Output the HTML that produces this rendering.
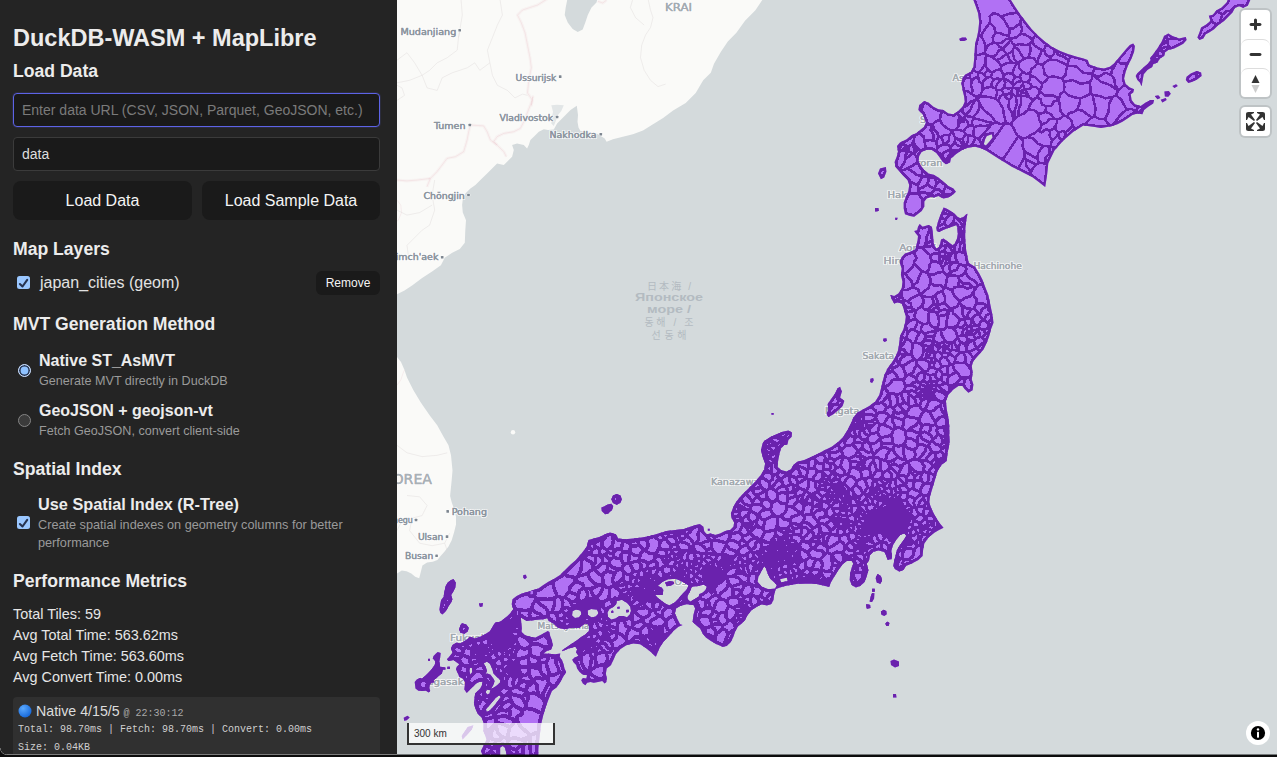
<!DOCTYPE html>
<html lang="en">
<head>
<meta charset="utf-8">
<title>DuckDB-WASM + MapLibre</title>
<style>
html,body{margin:0;padding:0;}
body{width:1277px;height:757px;overflow:hidden;background:#242424;position:relative;font-family:"Liberation Sans",sans-serif;color:rgba(255,255,255,.87);}
#side{position:absolute;left:0;top:0;width:397px;height:757px;background:#242424;overflow:hidden;}
#side .t{position:absolute;left:13px;white-space:nowrap;margin:0;}
h1.t{font-size:23.5px;font-weight:700;line-height:28px;color:#ececec;}
h2.t{font-size:17.6px;font-weight:700;line-height:22px;color:#ececec;}
.inp{position:absolute;left:13px;width:365px;height:32px;border:1px solid #3b3b3b;border-radius:4px;background:#1a1a1a;font-size:14px;line-height:32px;color:#dedede;}
.inp span{position:absolute;left:8px;top:0;white-space:nowrap;}
.inp.f{border-color:#5d63e6;box-shadow:0 0 0 1px rgba(100,108,255,.12);}
.inp.f span{color:#7a7a7a;}
.btn{position:absolute;height:39px;border-radius:8px;background:#1a1a1a;color:#f4f4f4;font-size:16px;line-height:39px;text-align:center;white-space:nowrap;}
.lbl{font-size:16px;line-height:20px;color:#e2e2e2;}
.lblb{font-size:16px;line-height:20px;font-weight:700;color:#ececec;}
.sub{font-size:12.6px;line-height:18px;color:#9a9a9a;}
.met{font-size:14.4px;line-height:21px;color:#e6e6e6;}
.cb{position:absolute;width:13px;height:13px;border-radius:2.5px;background:#9ac7ff;}
.rd{position:absolute;width:13px;height:13px;border-radius:50%;box-sizing:border-box;}
#log{position:absolute;left:13px;top:697px;width:367px;height:60px;background:#303030;border-radius:4px 4px 0 0;}
#log .m{position:absolute;left:5px;white-space:nowrap;font-family:"Liberation Mono",monospace;font-size:10px;line-height:14px;color:#cfcfcf;}
#map{position:absolute;left:397px;top:0;width:880px;height:757px;background:#d4dadc;overflow:hidden;}
#map svg{position:absolute;left:0;top:0;}
.ctrl{position:absolute;background:#fff;border-radius:4px;box-shadow:0 0 0 2px rgba(0,0,0,.1);}
.ctrl .b{width:29px;height:29px;position:relative;box-sizing:border-box;}
.ctrl .b+.b{border-top:1px solid #ddd;border-radius:7px 7px 0 0;}
#scale{position:absolute;left:10px;top:723px;width:148px;height:22px;box-sizing:border-box;background:rgba(255,255,255,.75);border:2px solid #333;border-top:none;font-size:10px;line-height:22.5px;color:#333;padding:0 0 0 5px;}
#edge{position:absolute;left:0;top:755px;width:1277px;height:2px;background:#0c0c0c;}
#corner{position:absolute;left:0;top:748px;width:7px;height:7px;background:radial-gradient(circle at 7px 0,rgba(12,12,12,0) 6.2px,#7c7c7c 6.6px,#0c0c0c 7.4px);}
#edge1{position:absolute;left:7px;top:754px;width:390px;height:1px;background:#7c7c7c;}
#edge2{position:absolute;left:397px;top:754px;width:880px;height:1px;background:rgba(0,0,0,.45);}
</style>
</head>
<body>

<div id="side">
<h1 class="t" style="top:24px">DuckDB-WASM + MapLibre</h1>
<h2 class="t" style="top:60px">Load Data</h2>
<div class="inp f" style="top:93px"><span>Enter data URL (CSV, JSON, Parquet, GeoJSON, etc.)</span></div>
<div class="inp" style="top:137px"><span>data</span></div>
<div class="btn" style="left:13px;top:181px;width:179px">Load Data</div>
<div class="btn" style="left:202px;top:181px;width:178px">Load Sample Data</div>
<h2 class="t" style="top:238px">Map Layers</h2>
<div class="cb" style="left:17px;top:276px"><svg width="13" height="13" viewBox="0 0 13 13"><path d="M2.9 7 L5.5 9.5 L10.2 2.9" fill="none" stroke="#263350" stroke-width="2.1" stroke-linecap="round" stroke-linejoin="round"/></svg></div>
<div class="t lbl" style="left:40px;top:273px">japan_cities (geom)</div>
<div class="btn" style="left:316px;top:271px;width:64px;height:24px;line-height:24px;font-size:12px;border-radius:6px">Remove</div>
<h2 class="t" style="top:313px">MVT Generation Method</h2>
<div class="rd" style="left:18px;top:364px;background:#8fc2ff;border:1px solid #cfe1ff;box-shadow:inset 0 0 0 1.6px #27344f"></div>
<div class="t lblb" style="left:39px;top:351px">Native ST_AsMVT</div>
<div class="t sub" style="left:39px;top:372px">Generate MVT directly in DuckDB</div>
<div class="rd" style="left:18px;top:414px;background:#3b3b3b;border:1px solid #858585"></div>
<div class="t lblb" style="left:39px;top:401px">GeoJSON + geojson-vt</div>
<div class="t sub" style="left:39px;top:422px">Fetch GeoJSON, convert client-side</div>
<h2 class="t" style="top:458px">Spatial Index</h2>
<div class="cb" style="left:17px;top:516px"><svg width="13" height="13" viewBox="0 0 13 13"><path d="M2.9 7 L5.5 9.5 L10.2 2.9" fill="none" stroke="#263350" stroke-width="2.1" stroke-linecap="round" stroke-linejoin="round"/></svg></div>
<div class="t lblb" style="left:38px;top:494px;font-size:16.3px">Use Spatial Index (R-Tree)</div>
<div class="t sub" style="left:38px;top:516px;font-size:12.7px">Create spatial indexes on geometry columns for better</div>
<div class="t sub" style="left:38px;top:534px;font-size:12.7px">performance</div>
<h2 class="t" style="top:570px">Performance Metrics</h2>
<div class="t met" style="top:604px">Total Tiles: 59</div>
<div class="t met" style="top:625px">Avg Total Time: 563.62ms</div>
<div class="t met" style="top:646px">Avg Fetch Time: 563.60ms</div>
<div class="t met" style="top:667px">Avg Convert Time: 0.00ms</div>
<div id="log">
<svg style="position:absolute;left:5px;top:7px" width="14" height="14" viewBox="0 0 14 14"><defs><radialGradient id="bl" cx="35%" cy="30%" r="75%"><stop offset="0" stop-color="#5aa9ff"/><stop offset="1" stop-color="#1466d8"/></radialGradient></defs><circle cx="7" cy="7" r="6.5" fill="url(#bl)"/></svg>
<div class="m" style="left:23px;top:6px;font-family:'Liberation Sans',sans-serif;font-size:14.2px;line-height:16px;color:#dcdcdc">Native 4/15/5 <span style="font-family:'Liberation Mono',monospace;font-size:10px;color:#a8a8a8">@ 22:30:12</span></div>
<div class="m" style="top:26px">Total: 98.70ms | Fetch: 98.70ms | Convert: 0.00ms</div>
<div class="m" style="top:44px">Size: 0.04KB</div>
</div>
</div>

<div id="map">
<svg width="880" height="757" viewBox="0 0 880 757">
<path d="M365.3,-5.0L365.3,0.0L358.4,10.3L348.0,20.7L339.4,32.7L330.8,41.4L323.9,51.7L317.0,63.7L313.8,72.8L306.2,80.3L298.7,92.9L288.7,102.9L276.1,110.4L266.1,118.0L256.0,124.2L246.0,130.5L235.9,134.3L225.9,136.8L215.9,139.3L209.6,141.8L207.7,138.4L200.2,133.7L191.8,131.7L183.5,130.9L181.5,127.5L180.5,121.7L181.0,115.0L179.8,105.8L173.5,110.0L166.8,116.7L160.1,123.4L156.8,129.4L151.0,130.0L146.8,129.2L141.8,131.7L136.8,136.7L133.4,140.0L131.8,145.0L130.1,148.4L126.8,145.0L120.1,143.4L115.1,145.0L116.8,150.1L115.1,156.7L110.1,161.7L106.8,165.1L100.1,163.4L95.1,168.4L90.1,173.4L83.4,180.1L78.4,185.1L73.4,188.4L68.4,193.4L65.9,198.4L65.1,205.1L65.8,212.6L69.0,220.2L68.3,230.2L67.8,242.8L62.8,249.0L55.2,252.8L47.7,257.8L43.9,265.3L35.1,271.6L25.1,277.9L15.1,285.4L7.5,290.4L0.0,294.2L-7.5,298.0L-17.0,300.0L-17.0,-5.0Z" fill="#fafaf8"/>
<path d="M-17.0,352.0L0.0,357.0L4.0,362.0L7.5,370.0L10.0,377.5L16.3,390.1L23.8,402.6L32.6,415.2L40.2,425.2L46.4,436.5L51.5,445.3L54.0,455.3L55.5,470.4L54.7,480.0L53.9,487.9L53.1,495.9L54.7,502.2L57.1,509.3L59.0,516.5L59.0,524.4L57.1,532.3L54.7,540.3L51.5,546.6L47.6,551.4L43.6,556.1L40.4,560.1L35.7,561.7L30.1,562.5L25.4,565.6L23.8,572.0L22.2,578.3L18.2,576.7L14.3,573.6L9.5,571.2L4.8,570.4L0.0,573.6L-9.5,575.1Z" fill="#fafaf8"/>
<circle cx="116.0" cy="432.3" r="2.2" fill="#fafaf8"/>
<path d="M154.3,105.3L160.1,104.7L166.8,105.3L164.3,110.9L161.0,115.0L158.5,121.7L156.8,125.9L154.3,123.4L155.1,116.7L156.0,111.7Z" fill="#e2e6e7"/>
<path d="M170.7,-2.5L168.7,7.5L167.7,15.1L170.7,22.6L175.7,28.9L180.7,32.1L185.7,29.6L188.3,22.6L190.8,15.1L194.5,7.5L199.5,2.5L200.8,-2.5Z" fill="#d4dadc"/>
<path d="M150.6,-1.3L140.6,5.0L125.5,10.0L120.5,15.1L124.2,22.6L128.0,32.6L130.5,45.2L133.0,57.7L134.3,67.8L131.8,80.3L130.5,92.9L135.5,100.4L134.3,105.4L135.9,96.7L133.4,105.0L130.1,113.4L126.8,121.7L123.4,128.4L116.8,131.7L106.8,133.4L100.1,136.7L96.7,141.7L101.8,146.7L106.8,151.7L109.3,156.7" fill="none" stroke="#ecd3d6" stroke-width="3.0" stroke-opacity="0.18" stroke-linejoin="round"/>
<path d="M150.6,-1.3L140.6,5.0L125.5,10.0L120.5,15.1L124.2,22.6L128.0,32.6L130.5,45.2L133.0,57.7L134.3,67.8L131.8,80.3L130.5,92.9L135.5,100.4L134.3,105.4L135.9,96.7L133.4,105.0L130.1,113.4L126.8,121.7L123.4,128.4L116.8,131.7L106.8,133.4L100.1,136.7L96.7,141.7L101.8,146.7L106.8,151.7L109.3,156.7" fill="none" stroke="#e6bcc3" stroke-width="0.9" stroke-opacity="0.28" stroke-linejoin="round"/>
<path d="M100.1,145.0L93.4,140.0L90.1,131.7L86.7,125.9L73.4,125.0L71.7,131.7L70.1,140.0L66.7,151.7L58.4,156.7L50.0,158.4L45.0,165.1L40.0,171.7L33.4,178.4L30.0,186.7" fill="none" stroke="#ecd3d6" stroke-width="3.0" stroke-opacity="0.18" stroke-linejoin="round"/>
<path d="M100.1,145.0L93.4,140.0L90.1,131.7L86.7,125.9L73.4,125.0L71.7,131.7L70.1,140.0L66.7,151.7L58.4,156.7L50.0,158.4L45.0,165.1L40.0,171.7L33.4,178.4L30.0,186.7" fill="none" stroke="#e6bcc3" stroke-width="0.9" stroke-opacity="0.28" stroke-linejoin="round"/>
<path d="M33.4,178.4L20.0,180.1L10.0,180.9L0.0,180.1L-6.7,180.9" fill="none" stroke="#ecd3d6" stroke-width="3.0" stroke-opacity="0.18" stroke-linejoin="round"/>
<path d="M33.4,178.4L20.0,180.1L10.0,180.9L0.0,180.1L-6.7,180.9" fill="none" stroke="#e6bcc3" stroke-width="0.9" stroke-opacity="0.28" stroke-linejoin="round"/>
<path d="M200.8,1.3L205.8,3.0L209.6,0.0" fill="none" stroke="#ecd3d6" stroke-width="3.0" stroke-opacity="0.18" stroke-linejoin="round"/>
<path d="M200.8,1.3L205.8,3.0L209.6,0.0" fill="none" stroke="#e6bcc3" stroke-width="0.9" stroke-opacity="0.28" stroke-linejoin="round"/>
<path d="M0.0,200.1L3.8,205.1L4.5,212.6L1.3,220.2L-2.5,222.7" fill="none" stroke="#e6bcc3" stroke-width="0.9" stroke-opacity="0.25" stroke-linejoin="round"/>
<path d="M0.0,385.1L3.8,380.0L6.3,372.5L7.5,370.0" fill="none" stroke="#e6bcc3" stroke-width="0.9" stroke-opacity="0.25" stroke-linejoin="round"/>
<path d="M251.0,-1.3L253.5,10.0L256.0,17.6L253.5,27.6L248.5,35.1L244.7,45.2L243.5,57.7L247.2,70.3L253.5,80.3L261.0,86.6L268.6,84.1" fill="none" stroke="#dcd8d6" stroke-width="0.8" stroke-opacity="0.5" stroke-linejoin="round"/>
<path d="M235.9,-1.3L233.4,7.5L238.5,17.6L247.2,25.1" fill="none" stroke="#dcd8d6" stroke-width="0.8" stroke-opacity="0.5" stroke-linejoin="round"/>
<path d="M0.0,60.2L10.0,52.7L17.6,62.8L25.1,75.3L32.6,70.3L40.2,62.8L50.2,57.7L60.2,50.2L61.5,37.7L62.8,30.1" fill="none" stroke="#dcd8d6" stroke-width="0.8" stroke-opacity="0.5" stroke-linejoin="round"/>
<path d="M25.1,75.3L30.1,87.9L40.2,90.4L45.2,77.8L55.2,72.8L70.3,67.8L77.8,62.8L82.8,70.3L92.9,62.8L95.4,75.3L100.4,85.3L110.4,90.4L118.0,97.9L125.5,94.1L130.5,95.4" fill="none" stroke="#dcd8d6" stroke-width="0.8" stroke-opacity="0.5" stroke-linejoin="round"/>
<path d="M61.5,37.7L65.3,15.1L64.0,-1.3" fill="none" stroke="#dcd8d6" stroke-width="0.8" stroke-opacity="0.5" stroke-linejoin="round"/>
<path d="M92.9,62.8L90.4,50.2L95.4,37.7L100.4,25.1L105.4,15.1L102.9,-1.3" fill="none" stroke="#dcd8d6" stroke-width="0.8" stroke-opacity="0.5" stroke-linejoin="round"/>
<path d="M0.0,82.8L12.6,80.3L25.1,75.3" fill="none" stroke="#dcd8d6" stroke-width="0.8" stroke-opacity="0.5" stroke-linejoin="round"/>
<path d="M0.0,100.4L7.5,95.4L5.0,87.9L0.0,85.3" fill="none" stroke="#dcd8d6" stroke-width="0.8" stroke-opacity="0.5" stroke-linejoin="round"/>
<path d="M37.7,180.0L35.1,195.1L37.7,210.1L32.6,225.2L25.1,230.2L17.6,237.7L10.0,245.3L11.3,255.3" fill="none" stroke="#dcd8d6" stroke-width="0.8" stroke-opacity="0.5" stroke-linejoin="round"/>
<path d="M0.0,210.1L10.0,215.1L22.6,212.6L35.1,205.1" fill="none" stroke="#dcd8d6" stroke-width="0.8" stroke-opacity="0.5" stroke-linejoin="round"/>
<path d="M0.0,445.3L10.0,452.8L25.1,456.6L40.2,455.3L50.2,452.8" fill="none" stroke="#dcd8d6" stroke-width="0.8" stroke-opacity="0.5" stroke-linejoin="round"/>
<path d="M10.0,495.5L22.6,496.8L30.1,505.5L25.1,515.6L15.1,518.1L12.6,530.6L22.6,543.2L35.1,545.7L47.7,543.2L52.7,533.2" fill="none" stroke="#dcd8d6" stroke-width="0.8" stroke-opacity="0.5" stroke-linejoin="round"/>
<path d="M15.1,518.1L5.0,520.6L0.0,530.6" fill="none" stroke="#dcd8d6" stroke-width="0.8" stroke-opacity="0.5" stroke-linejoin="round"/>
<path d="M47.7,543.2L50.2,550.7L45.2,557.0" fill="none" stroke="#dcd8d6" stroke-width="0.8" stroke-opacity="0.5" stroke-linejoin="round"/>
<text x="3.4" y="34.5" text-anchor="start" textLength="55.9" lengthAdjust="spacingAndGlyphs" font-size="8.4" fill="#8c959f" stroke="#fff" stroke-opacity=".85" stroke-width="2" paint-order="stroke" stroke-linejoin="round" font-family="'DejaVu Sans','Liberation Sans',sans-serif" font-weight="normal">Mudanjiang</text>
<text x="3.4" y="34.5" text-anchor="start" textLength="55.9" lengthAdjust="spacingAndGlyphs" font-size="8.4" fill="#8c959f" stroke="#8c959f" stroke-width=".3" font-family="'DejaVu Sans','Liberation Sans',sans-serif" font-weight="normal">Mudanjiang</text>
<rect x="61.4" y="29.0" width="2.6" height="2.6" rx=".5" fill="#7d8690" stroke="#fff" stroke-opacity=".8" stroke-width="1" paint-order="stroke"/>
<text x="118.5" y="80.8" text-anchor="start" textLength="40.9" lengthAdjust="spacingAndGlyphs" font-size="8.4" fill="#8c959f" stroke="#fff" stroke-opacity=".85" stroke-width="2" paint-order="stroke" stroke-linejoin="round" font-family="'DejaVu Sans','Liberation Sans',sans-serif" font-weight="normal">Ussurijsk</text>
<text x="118.5" y="80.8" text-anchor="start" textLength="40.9" lengthAdjust="spacingAndGlyphs" font-size="8.4" fill="#8c959f" stroke="#8c959f" stroke-width=".3" font-family="'DejaVu Sans','Liberation Sans',sans-serif" font-weight="normal">Ussurijsk</text>
<rect x="161.9" y="75.3" width="2.6" height="2.6" rx=".5" fill="#7d8690" stroke="#fff" stroke-opacity=".8" stroke-width="1" paint-order="stroke"/>
<text x="102.4" y="120.5" text-anchor="start" textLength="53.7" lengthAdjust="spacingAndGlyphs" font-size="8.4" fill="#8c959f" stroke="#fff" stroke-opacity=".85" stroke-width="2" paint-order="stroke" stroke-linejoin="round" font-family="'DejaVu Sans','Liberation Sans',sans-serif" font-weight="normal">Vladivostok</text>
<text x="102.4" y="120.5" text-anchor="start" textLength="53.7" lengthAdjust="spacingAndGlyphs" font-size="8.4" fill="#8c959f" stroke="#8c959f" stroke-width=".3" font-family="'DejaVu Sans','Liberation Sans',sans-serif" font-weight="normal">Vladivostok</text>
<rect x="158.8" y="115.7" width="2.6" height="2.6" rx=".5" fill="#7d8690" stroke="#fff" stroke-opacity=".8" stroke-width="1" paint-order="stroke"/>
<text x="152.4" y="137.5" text-anchor="start" textLength="47.1" lengthAdjust="spacingAndGlyphs" font-size="8.4" fill="#8c959f" stroke="#fff" stroke-opacity=".85" stroke-width="2" paint-order="stroke" stroke-linejoin="round" font-family="'DejaVu Sans','Liberation Sans',sans-serif" font-weight="normal">Nakhodka</text>
<text x="152.4" y="137.5" text-anchor="start" textLength="47.1" lengthAdjust="spacingAndGlyphs" font-size="8.4" fill="#8c959f" stroke="#8c959f" stroke-width=".3" font-family="'DejaVu Sans','Liberation Sans',sans-serif" font-weight="normal">Nakhodka</text>
<rect x="202.5" y="133.0" width="2.6" height="2.6" rx=".5" fill="#7d8690" stroke="#fff" stroke-opacity=".8" stroke-width="1" paint-order="stroke"/>
<text x="36.9" y="128.5" text-anchor="start" textLength="31.6" lengthAdjust="spacingAndGlyphs" font-size="8.4" fill="#8c959f" stroke="#fff" stroke-opacity=".85" stroke-width="2" paint-order="stroke" stroke-linejoin="round" font-family="'DejaVu Sans','Liberation Sans',sans-serif" font-weight="normal">Tumen</text>
<text x="36.9" y="128.5" text-anchor="start" textLength="31.6" lengthAdjust="spacingAndGlyphs" font-size="8.4" fill="#8c959f" stroke="#8c959f" stroke-width=".3" font-family="'DejaVu Sans','Liberation Sans',sans-serif" font-weight="normal">Tumen</text>
<rect x="71.5" y="123.7" width="2.6" height="2.6" rx=".5" fill="#7d8690" stroke="#fff" stroke-opacity=".8" stroke-width="1" paint-order="stroke"/>
<text x="268.0" y="10.5" text-anchor="start" textLength="27.0" lengthAdjust="spacingAndGlyphs" font-size="10.2" fill="#a3abb2" stroke="#fff" stroke-opacity=".85" stroke-width="2" paint-order="stroke" stroke-linejoin="round" font-family="'DejaVu Sans','Liberation Sans',sans-serif" font-weight="normal">KRAI</text>
<text x="268.0" y="10.5" text-anchor="start" textLength="27.0" lengthAdjust="spacingAndGlyphs" font-size="10.2" fill="#a3abb2" stroke="#a3abb2" stroke-width=".3" font-family="'DejaVu Sans','Liberation Sans',sans-serif" font-weight="normal">KRAI</text>
<text x="26.4" y="198.8" text-anchor="start" textLength="41.4" lengthAdjust="spacingAndGlyphs" font-size="8.4" fill="#8c959f" stroke="#fff" stroke-opacity=".85" stroke-width="2" paint-order="stroke" stroke-linejoin="round" font-family="'DejaVu Sans','Liberation Sans',sans-serif" font-weight="normal">Chŏngjin</text>
<text x="26.4" y="198.8" text-anchor="start" textLength="41.4" lengthAdjust="spacingAndGlyphs" font-size="8.4" fill="#8c959f" stroke="#8c959f" stroke-width=".3" font-family="'DejaVu Sans','Liberation Sans',sans-serif" font-weight="normal">Chŏngjin</text>
<rect x="70.2" y="193.7" width="2.6" height="2.6" rx=".5" fill="#7d8690" stroke="#fff" stroke-opacity=".8" stroke-width="1" paint-order="stroke"/>
<text x="-7.5" y="260.3" text-anchor="start" textLength="48.9" lengthAdjust="spacingAndGlyphs" font-size="8.4" fill="#8c959f" stroke="#fff" stroke-opacity=".85" stroke-width="2" paint-order="stroke" stroke-linejoin="round" font-family="'DejaVu Sans','Liberation Sans',sans-serif" font-weight="normal">Kimch'aek</text>
<text x="-7.5" y="260.3" text-anchor="start" textLength="48.9" lengthAdjust="spacingAndGlyphs" font-size="8.4" fill="#8c959f" stroke="#8c959f" stroke-width=".3" font-family="'DejaVu Sans','Liberation Sans',sans-serif" font-weight="normal">Kimch'aek</text>
<rect x="43.9" y="256.0" width="2.6" height="2.6" rx=".5" fill="#7d8690" stroke="#fff" stroke-opacity=".8" stroke-width="1" paint-order="stroke"/>
<text x="-13.0" y="484.2" text-anchor="start" textLength="48.0" lengthAdjust="spacingAndGlyphs" font-size="14" fill="#a9b0b6" stroke="#fff" stroke-opacity=".85" stroke-width="2" paint-order="stroke" stroke-linejoin="round" font-family="'DejaVu Sans','Liberation Sans',sans-serif" font-weight="normal">KOREA</text>
<text x="-13.0" y="484.2" text-anchor="start" textLength="48.0" lengthAdjust="spacingAndGlyphs" font-size="14" fill="#a9b0b6" stroke="#a9b0b6" stroke-width=".3" font-family="'DejaVu Sans','Liberation Sans',sans-serif" font-weight="normal">KOREA</text>
<text x="54.7" y="515.2" text-anchor="start" textLength="35.3" lengthAdjust="spacingAndGlyphs" font-size="8.4" fill="#8c959f" stroke="#fff" stroke-opacity=".85" stroke-width="2" paint-order="stroke" stroke-linejoin="round" font-family="'DejaVu Sans','Liberation Sans',sans-serif" font-weight="normal">Pohang</text>
<text x="54.7" y="515.2" text-anchor="start" textLength="35.3" lengthAdjust="spacingAndGlyphs" font-size="8.4" fill="#8c959f" stroke="#8c959f" stroke-width=".3" font-family="'DejaVu Sans','Liberation Sans',sans-serif" font-weight="normal">Pohang</text>
<rect x="49.4" y="510.1" width="2.6" height="2.6" rx=".5" fill="#7d8690" stroke="#fff" stroke-opacity=".8" stroke-width="1" paint-order="stroke"/>
<text x="20.9" y="540.0" text-anchor="start" textLength="25.4" lengthAdjust="spacingAndGlyphs" font-size="8.4" fill="#8c959f" stroke="#fff" stroke-opacity=".85" stroke-width="2" paint-order="stroke" stroke-linejoin="round" font-family="'DejaVu Sans','Liberation Sans',sans-serif" font-weight="normal">Ulsan</text>
<text x="20.9" y="540.0" text-anchor="start" textLength="25.4" lengthAdjust="spacingAndGlyphs" font-size="8.4" fill="#8c959f" stroke="#8c959f" stroke-width=".3" font-family="'DejaVu Sans','Liberation Sans',sans-serif" font-weight="normal">Ulsan</text>
<rect x="48.7" y="535.3" width="2.6" height="2.6" rx=".5" fill="#7d8690" stroke="#fff" stroke-opacity=".8" stroke-width="1" paint-order="stroke"/>
<text x="7.9" y="558.8" text-anchor="start" textLength="28.3" lengthAdjust="spacingAndGlyphs" font-size="8.4" fill="#8c959f" stroke="#fff" stroke-opacity=".85" stroke-width="2" paint-order="stroke" stroke-linejoin="round" font-family="'DejaVu Sans','Liberation Sans',sans-serif" font-weight="normal">Busan</text>
<text x="7.9" y="558.8" text-anchor="start" textLength="28.3" lengthAdjust="spacingAndGlyphs" font-size="8.4" fill="#8c959f" stroke="#8c959f" stroke-width=".3" font-family="'DejaVu Sans','Liberation Sans',sans-serif" font-weight="normal">Busan</text>
<rect x="38.3" y="554.5" width="2.6" height="2.6" rx=".5" fill="#7d8690" stroke="#fff" stroke-opacity=".8" stroke-width="1" paint-order="stroke"/>
<text x="-10.0" y="522.5" text-anchor="start" textLength="25.9" lengthAdjust="spacingAndGlyphs" font-size="8.4" fill="#8c959f" stroke="#fff" stroke-opacity=".85" stroke-width="2" paint-order="stroke" stroke-linejoin="round" font-family="'DejaVu Sans','Liberation Sans',sans-serif" font-weight="normal">Daegu</text>
<text x="-10.0" y="522.5" text-anchor="start" textLength="25.9" lengthAdjust="spacingAndGlyphs" font-size="8.4" fill="#8c959f" stroke="#8c959f" stroke-width=".3" font-family="'DejaVu Sans','Liberation Sans',sans-serif" font-weight="normal">Daegu</text>
<rect x="17.7" y="518.7" width="2.6" height="2.6" rx=".5" fill="#7d8690" stroke="#fff" stroke-opacity=".8" stroke-width="1" paint-order="stroke"/>
<text x="555.5" y="81.4" text-anchor="start" textLength="50.0" lengthAdjust="spacingAndGlyphs" font-size="8.4" fill="#a2a9b0" stroke="#fff" stroke-opacity=".85" stroke-width="2" paint-order="stroke" stroke-linejoin="round" font-family="'DejaVu Sans','Liberation Sans',sans-serif" font-weight="normal">Asahikawa</text>
<text x="555.5" y="81.4" text-anchor="start" textLength="50.0" lengthAdjust="spacingAndGlyphs" font-size="8.4" fill="#a2a9b0" stroke="#a2a9b0" stroke-width=".3" font-family="'DejaVu Sans','Liberation Sans',sans-serif" font-weight="normal">Asahikawa</text>
<text x="523.0" y="123.4" text-anchor="start" textLength="41.0" lengthAdjust="spacingAndGlyphs" font-size="8.4" fill="#a2a9b0" stroke="#fff" stroke-opacity=".85" stroke-width="2" paint-order="stroke" stroke-linejoin="round" font-family="'DejaVu Sans','Liberation Sans',sans-serif" font-weight="normal">Sapporo</text>
<text x="523.0" y="123.4" text-anchor="start" textLength="41.0" lengthAdjust="spacingAndGlyphs" font-size="8.4" fill="#a2a9b0" stroke="#a2a9b0" stroke-width=".3" font-family="'DejaVu Sans','Liberation Sans',sans-serif" font-weight="normal">Sapporo</text>
<text x="504.5" y="166.4" text-anchor="start" textLength="41.1" lengthAdjust="spacingAndGlyphs" font-size="8.4" fill="#a2a9b0" stroke="#fff" stroke-opacity=".85" stroke-width="2" paint-order="stroke" stroke-linejoin="round" font-family="'DejaVu Sans','Liberation Sans',sans-serif" font-weight="normal">Muroran</text>
<text x="504.5" y="166.4" text-anchor="start" textLength="41.1" lengthAdjust="spacingAndGlyphs" font-size="8.4" fill="#a2a9b0" stroke="#a2a9b0" stroke-width=".3" font-family="'DejaVu Sans','Liberation Sans',sans-serif" font-weight="normal">Muroran</text>
<text x="490.5" y="198.4" text-anchor="start" textLength="48.0" lengthAdjust="spacingAndGlyphs" font-size="8.4" fill="#a2a9b0" stroke="#fff" stroke-opacity=".85" stroke-width="2" paint-order="stroke" stroke-linejoin="round" font-family="'DejaVu Sans','Liberation Sans',sans-serif" font-weight="normal">Hakodate</text>
<text x="490.5" y="198.4" text-anchor="start" textLength="48.0" lengthAdjust="spacingAndGlyphs" font-size="8.4" fill="#a2a9b0" stroke="#a2a9b0" stroke-width=".3" font-family="'DejaVu Sans','Liberation Sans',sans-serif" font-weight="normal">Hakodate</text>
<text x="502.2" y="251.4" text-anchor="start" textLength="37.0" lengthAdjust="spacingAndGlyphs" font-size="8.4" fill="#a2a9b0" stroke="#fff" stroke-opacity=".85" stroke-width="2" paint-order="stroke" stroke-linejoin="round" font-family="'DejaVu Sans','Liberation Sans',sans-serif" font-weight="normal">Aomori</text>
<text x="502.2" y="251.4" text-anchor="start" textLength="37.0" lengthAdjust="spacingAndGlyphs" font-size="8.4" fill="#a2a9b0" stroke="#a2a9b0" stroke-width=".3" font-family="'DejaVu Sans','Liberation Sans',sans-serif" font-weight="normal">Aomori</text>
<text x="486.4" y="264.2" text-anchor="start" textLength="43.0" lengthAdjust="spacingAndGlyphs" font-size="8.4" fill="#a2a9b0" stroke="#fff" stroke-opacity=".85" stroke-width="2" paint-order="stroke" stroke-linejoin="round" font-family="'DejaVu Sans','Liberation Sans',sans-serif" font-weight="normal">Hirosaki</text>
<text x="486.4" y="264.2" text-anchor="start" textLength="43.0" lengthAdjust="spacingAndGlyphs" font-size="8.4" fill="#a2a9b0" stroke="#a2a9b0" stroke-width=".3" font-family="'DejaVu Sans','Liberation Sans',sans-serif" font-weight="normal">Hirosaki</text>
<text x="576.4" y="269.2" text-anchor="start" textLength="48.4" lengthAdjust="spacingAndGlyphs" font-size="8.4" fill="#a2a9b0" stroke="#fff" stroke-opacity=".85" stroke-width="2" paint-order="stroke" stroke-linejoin="round" font-family="'DejaVu Sans','Liberation Sans',sans-serif" font-weight="normal">Hachinohe</text>
<text x="576.4" y="269.2" text-anchor="start" textLength="48.4" lengthAdjust="spacingAndGlyphs" font-size="8.4" fill="#a2a9b0" stroke="#a2a9b0" stroke-width=".3" font-family="'DejaVu Sans','Liberation Sans',sans-serif" font-weight="normal">Hachinohe</text>
<text x="465.5" y="359.0" text-anchor="start" textLength="31.7" lengthAdjust="spacingAndGlyphs" font-size="8.4" fill="#a2a9b0" stroke="#fff" stroke-opacity=".85" stroke-width="2" paint-order="stroke" stroke-linejoin="round" font-family="'DejaVu Sans','Liberation Sans',sans-serif" font-weight="normal">Sakata</text>
<text x="465.5" y="359.0" text-anchor="start" textLength="31.7" lengthAdjust="spacingAndGlyphs" font-size="8.4" fill="#a2a9b0" stroke="#a2a9b0" stroke-width=".3" font-family="'DejaVu Sans','Liberation Sans',sans-serif" font-weight="normal">Sakata</text>
<text x="428.0" y="413.7" text-anchor="start" textLength="34.3" lengthAdjust="spacingAndGlyphs" font-size="8.4" fill="#a2a9b0" stroke="#fff" stroke-opacity=".85" stroke-width="2" paint-order="stroke" stroke-linejoin="round" font-family="'DejaVu Sans','Liberation Sans',sans-serif" font-weight="normal">Niigata</text>
<text x="428.0" y="413.7" text-anchor="start" textLength="34.3" lengthAdjust="spacingAndGlyphs" font-size="8.4" fill="#a2a9b0" stroke="#a2a9b0" stroke-width=".3" font-family="'DejaVu Sans','Liberation Sans',sans-serif" font-weight="normal">Niigata</text>
<text x="313.9" y="485.4" text-anchor="start" textLength="48.5" lengthAdjust="spacingAndGlyphs" font-size="8.4" fill="#a2a9b0" stroke="#fff" stroke-opacity=".85" stroke-width="2" paint-order="stroke" stroke-linejoin="round" font-family="'DejaVu Sans','Liberation Sans',sans-serif" font-weight="normal">Kanazawa</text>
<text x="313.9" y="485.4" text-anchor="start" textLength="48.5" lengthAdjust="spacingAndGlyphs" font-size="8.4" fill="#a2a9b0" stroke="#a2a9b0" stroke-width=".3" font-family="'DejaVu Sans','Liberation Sans',sans-serif" font-weight="normal">Kanazawa</text>
<text x="53.0" y="641.4" text-anchor="start" textLength="43.0" lengthAdjust="spacingAndGlyphs" font-size="8.4" fill="#a2a9b0" stroke="#fff" stroke-opacity=".85" stroke-width="2" paint-order="stroke" stroke-linejoin="round" font-family="'DejaVu Sans','Liberation Sans',sans-serif" font-weight="normal">Fukuoka</text>
<text x="53.0" y="641.4" text-anchor="start" textLength="43.0" lengthAdjust="spacingAndGlyphs" font-size="8.4" fill="#a2a9b0" stroke="#a2a9b0" stroke-width=".3" font-family="'DejaVu Sans','Liberation Sans',sans-serif" font-weight="normal">Fukuoka</text>
<text x="22.5" y="685.1" text-anchor="start" textLength="47.0" lengthAdjust="spacingAndGlyphs" font-size="8.4" fill="#a2a9b0" stroke="#fff" stroke-opacity=".85" stroke-width="2" paint-order="stroke" stroke-linejoin="round" font-family="'DejaVu Sans','Liberation Sans',sans-serif" font-weight="normal">Nagasaki</text>
<text x="22.5" y="685.1" text-anchor="start" textLength="47.0" lengthAdjust="spacingAndGlyphs" font-size="8.4" fill="#a2a9b0" stroke="#a2a9b0" stroke-width=".3" font-family="'DejaVu Sans','Liberation Sans',sans-serif" font-weight="normal">Nagasaki</text>
<text x="140.6" y="629.2" text-anchor="start" textLength="51.7" lengthAdjust="spacingAndGlyphs" font-size="8.4" fill="#a2a9b0" stroke="#fff" stroke-opacity=".85" stroke-width="2" paint-order="stroke" stroke-linejoin="round" font-family="'DejaVu Sans','Liberation Sans',sans-serif" font-weight="normal">Matsuyama</text>
<text x="140.6" y="629.2" text-anchor="start" textLength="51.7" lengthAdjust="spacingAndGlyphs" font-size="8.4" fill="#a2a9b0" stroke="#a2a9b0" stroke-width=".3" font-family="'DejaVu Sans','Liberation Sans',sans-serif" font-weight="normal">Matsuyama</text>
<text x="277.3" y="585.4" text-anchor="start" textLength="30.0" lengthAdjust="spacingAndGlyphs" font-size="8.4" fill="#a2a9b0" stroke="#fff" stroke-opacity=".85" stroke-width="2" paint-order="stroke" stroke-linejoin="round" font-family="'DejaVu Sans','Liberation Sans',sans-serif" font-weight="normal">Osaka</text>
<text x="277.3" y="585.4" text-anchor="start" textLength="30.0" lengthAdjust="spacingAndGlyphs" font-size="8.4" fill="#a2a9b0" stroke="#a2a9b0" stroke-width=".3" font-family="'DejaVu Sans','Liberation Sans',sans-serif" font-weight="normal">Osaka</text>
<text x="272.0" y="290.3" text-anchor="middle" textLength="44.0" lengthAdjust="spacing" font-size="10" fill="#b3bbc1" font-family="'Liberation Sans','Noto Sans CJK JP',sans-serif" font-weight="normal">日本海 /</text>
<text x="272.0" y="301.4" text-anchor="middle" textLength="68.0" lengthAdjust="spacingAndGlyphs" font-size="10" fill="#b3bbc1" font-family="'Liberation Sans','DejaVu Sans',sans-serif" font-weight="bold">Японское</text>
<text x="272.0" y="313.4" text-anchor="middle" textLength="44.0" lengthAdjust="spacingAndGlyphs" font-size="10" fill="#b3bbc1" font-family="'Liberation Sans','DejaVu Sans',sans-serif" font-weight="bold">море /</text>
<text x="272.0" y="326.2" text-anchor="middle" textLength="49.0" lengthAdjust="spacing" font-size="10" fill="#b3bbc1" font-family="'Liberation Sans','Noto Sans CJK KR',sans-serif" font-weight="normal">동해 / 조</text>
<text x="272.0" y="339.4" text-anchor="middle" textLength="35.0" lengthAdjust="spacing" font-size="10" fill="#b3bbc1" font-family="'Liberation Sans','Noto Sans CJK KR',sans-serif" font-weight="normal">선동해</text>
<g fill="#b171f4" fill-rule="evenodd">
<path d="M522.7,223.9L525.6,226.8L528.1,226.0L531.5,225.1L534.9,226.8L535.7,231.0L536.1,236.0L536.5,241.9L537.8,246.9L539.9,248.6L542.0,246.9L543.2,243.6L544.0,239.4L546.6,238.6L549.9,241.1L553.3,243.6L555.8,245.3L557.9,243.6L560.0,238.6L560.8,233.5L560.4,227.7L559.2,225.1L555.0,226.8L549.9,228.5L545.8,230.2L542.4,231.9L539.9,231.0L539.5,227.7L540.7,222.6L542.4,217.6L544.5,212.6L546.6,207.5L549.9,208.8L554.1,211.3L557.5,213.8L560.8,217.2L563.4,218.3L566.7,216.8L569.2,214.2L570.5,213.8L569.2,221.0L568.4,227.7L568.2,235.2L568.4,241.9L569.2,250.3L570.9,258.7L571.7,262.9L578.1,266.7L582.3,273.4L585.6,280.1L588.1,286.7L591.4,295.1L593.1,303.4L594.8,311.8L596.4,320.1L595.6,316.0L596.5,322.7L594.0,329.3L592.3,336.0L589.8,342.7L586.5,349.4L581.4,355.2L576.4,361.0L574.8,366.0L575.6,372.7L574.8,379.4L576.4,384.4L575.6,390.2L571.4,392.7L568.1,389.4L565.6,386.1L561.4,386.1L556.4,389.4L551.4,394.4L548.9,401.1L549.8,409.4L551.4,417.8L552.3,426.1L552.3,434.4L552.3,441.9L553.1,436.0L552.3,444.3L550.6,452.7L549.8,461.0L544.8,464.4L540.6,471.0L538.1,479.4L535.6,487.7L533.1,496.1L532.3,502.7L534.8,509.4L538.1,516.1L542.3,522.7L546.5,527.7L541.5,530.3L536.5,533.3L531.5,537.5L527.3,543.4L526.1,550.0L525.6,555.9L521.4,560.0L514.8,563.4L508.9,565.9L506.4,570.0L502.3,571.4L498.1,569.2L496.4,565.9L497.3,560.0L498.9,554.2L499.8,550.0L503.1,545.0L507.3,539.2L509.4,535.8L507.3,533.3L503.1,535.0L498.9,540.0L495.6,545.9L494.4,550.9L495.1,555.9L494.4,559.2L490.6,559.7L488.9,555.0L487.3,551.7L481.4,550.4L476.4,551.7L473.1,555.0L472.2,560.0L469.7,563.4L471.4,570.0L469.7,576.7L467.2,582.6L463.1,585.9L458.9,587.6L454.7,585.1L452.7,580.1L453.1,573.4L454.7,567.5L456.4,563.4L454.7,560.9L449.7,560.9L445.6,564.2L441.4,570.0L437.2,576.7L433.9,582.6L432.2,586.7L428.0,585.9L421.4,584.2L414.7,583.4L408.0,583.4L401.3,583.7L394.7,584.7L388.0,585.9L383.0,587.6L379.0,588.9L377.3,593.4L376.5,600.1L374.0,604.2L369.8,605.4L364.8,604.2L359.8,606.7L354.8,610.1L350.6,615.1L348.1,620.1L344.8,623.4L340.6,626.7L338.1,631.7L336.4,636.7L333.9,641.8L329.8,645.9L325.6,646.8L319.7,644.3L313.9,640.9L308.9,637.6L305.6,633.4L303.1,628.4L298.9,625.1L295.6,621.7L296.4,615.1L298.1,608.4L296.4,605.1L289.7,604.2L283.1,605.9L278.9,608.4L278.0,613.4L280.5,619.2L283.1,624.2L285.6,625.1L281.4,626.7L276.4,630.9L271.4,636.7L266.4,641.8L262.2,648.4L258.9,656.8L255.5,653.4L249.7,648.4L243.1,644.2L236.4,643.4L229.7,645.0L223.1,649.2L218.9,654.2L216.4,660.1L213.9,665.1L209.7,668.4L208.9,673.4L209.7,678.4L209.4,681.9L207.7,683.6L205.2,681.1L201.0,681.9L196.8,682.7L193.5,681.9L190.1,682.7L188.4,685.3L185.9,683.6L184.2,680.2L185.9,678.1L189.3,678.6L190.1,675.2L185.9,674.4L182.6,671.9L180.1,668.5L179.2,665.1L176.7,662.6L175.4,659.7L177.5,657.6L181.7,655.9L179.2,652.6L180.1,649.2L178.4,646.7L171.7,648.4L165.4,651.3L165.0,650.3L170.0,646.9L175.0,643.6L180.1,640.2L184.2,636.9L188.4,634.4L191.8,631.0L192.2,626.8L191.0,624.3L188.4,623.5L185.9,625.1L182.6,627.7L175.0,627.7L167.5,629.3L160.8,627.7L156.6,623.5L151.6,621.0L150.3,618.0L146.5,619.3L138.1,620.1L129.8,621.0L123.9,617.6L124.3,625.1L124.7,631.9L128.1,635.2L134.0,636.9L138.1,637.7L141.5,636.0L146.5,633.5L150.7,631.0L152.4,631.9L153.2,636.0L154.9,640.2L155.7,645.3L154.1,649.5L149.9,650.9L146.5,653.4L151.6,653.8L158.3,654.2L163.3,653.4L162.5,656.8L165.0,660.1L166.6,664.3L167.5,668.5L169.2,671.9L166.6,676.0L163.3,681.9L159.9,686.9L154.9,691.1L153.2,695.3L151.3,700.1L148.8,706.8L146.3,715.1L144.7,721.8L143.8,725.9L141.4,747.8L140.6,774.5L109.8,774.5L109.8,755.3L108.1,747.8L105.6,746.1L103.1,747.8L103.1,755.3L103.1,774.5L85.6,774.5L85.6,755.3L83.9,751.1L86.4,746.1L89.7,739.4L86.4,731.1L86.4,721.9L84.7,717.7L80.6,713.6L78.1,707.7L76.9,703.0L77.4,698.7L78.2,693.6L80.7,691.1L83.2,688.6L84.9,685.3L85.7,681.5L82.4,681.9L79.0,683.6L75.7,686.9L72.3,690.3L69.8,692.8L67.3,689.5L67.7,686.1L68.1,681.9L65.6,678.6L62.3,676.9L61.0,673.5L58.9,669.3L59.8,666.8L62.3,664.3L59.8,662.6L56.4,660.1L51.4,661.0L50.1,659.3L52.2,656.8L55.6,652.6L53.9,648.4L55.6,645.0L59.8,642.5L63.1,643.5L68.9,640.2L73.1,636.8L78.1,638.5L83.1,636.8L88.1,634.2L93.1,630.9L95.6,626.7L98.1,622.5L103.1,621.7L105.5,620.1L109.7,616.7L113.0,613.4L116.3,609.2L114.7,604.2L115.5,599.2L119.7,595.9L124.7,593.4L131.4,591.7L136.4,590.0L141.4,588.4L146.4,585.0L151.4,581.7L156.4,579.2L163.1,575.0L168.1,570.0L173.1,565.0L178.9,560.0L184.7,553.3L189.7,546.7L191.4,540.0L203.0,536.7L208.0,534.2L213.0,532.6L218.8,534.2L221.3,538.4L228.0,539.2L236.4,538.4L244.7,537.6L253.0,535.9L261.4,533.4L269.7,530.9L278.1,530.1L286.4,529.2L293.1,526.7L298.9,525.1L303.1,524.2L306.4,526.7L307.3,531.7L309.8,534.2L313.9,533.4L318.1,535.1L323.1,533.4L328.1,530.9L333.1,530.1L336.4,526.7L337.3,522.6L334.8,518.4L333.9,513.4L336.4,506.7L339.8,500.9L344.8,495.0L351.5,488.4L358.1,481.7L363.1,475.9L367.3,469.2L368.1,463.4L365.6,456.7L364.0,450.0L365.6,443.3L368.1,440.0L368.9,440.1L373.9,436.7L379.7,434.2L385.5,431.7L391.4,430.4L395.0,432.6L394.7,436.7L391.4,440.1L390.5,444.2L387.2,445.1L383.9,448.4L382.2,455.1L381.0,461.7L380.5,466.7L383.9,470.1L389.7,471.4L393.9,469.2L396.4,465.1L400.5,461.7L407.2,460.1L414.7,456.7L421.4,453.4L428.1,450.1L434.7,446.7L441.4,441.7L446.4,436.7L450.6,430.1L453.9,423.4L456.4,417.5L460.6,412.5L466.4,409.2L472.3,405.9L478.1,401.7L482.3,395.0L484.0,388.3L485.6,381.7L487.3,375.0L489.8,370.0L489.7,369.4L494.7,362.7L498.9,356.0L501.4,349.4L502.2,342.7L503.1,336.0L506.4,329.3L508.1,322.7L508.9,316.0L507.2,311.8L506.7,308.4L504.7,303.4L500.5,302.6L497.2,303.4L494.7,299.2L493.4,295.1L497.2,295.9L501.4,293.4L504.7,288.4L505.5,281.7L503.9,275.1L504.7,268.4L503.0,263.4L503.0,260.4L504.7,257.0L508.0,253.6L511.4,252.4L514.7,251.1L518.5,249.5L519.3,245.3L520.6,240.2L521.0,236.0L518.9,233.5L517.2,231.0L520.2,230.2L521.0,226.8ZM175.5,611.0L179.0,609.5L183.5,610.5L184.5,614.0L182.0,617.5L178.0,618.0L175.0,615.5ZM190.5,610.5L194.0,609.0L200.0,609.5L201.5,613.0L199.0,616.5L194.5,617.5L191.0,615.0ZM219.9,600.9L225.0,599.7L230.0,603.0L233.4,606.8L234.0,611.0L232.9,614.3L230.0,617.3L226.6,616.0L222.5,616.0L218.3,618.5L214.1,619.4L211.1,616.9L210.3,612.7L212.4,609.3L216.6,606.8L219.1,604.3ZM260.6,585.9L265.6,581.7L271.5,579.2L279.0,578.8L285.7,581.7L291.6,585.5L289.9,589.3L285.7,593.5L281.5,598.5L277.3,602.7L272.3,605.2L268.1,603.5L263.9,600.2L260.6,597.7L258.1,595.1L265.6,595.1L266.4,590.1L264.8,587.6ZM294.9,586.8L301.6,585.9L306.7,584.7L310.0,586.8L308.4,590.1L305.8,592.6L302.5,593.9L301.6,596.8L297.5,599.3L293.3,601.4L290.7,599.3L290.3,596.8L292.4,592.6L293.7,589.3ZM367.3,565.9L361.4,576.7L360.6,581.7L364.8,586.7L371.5,589.2L378.1,588.4L379.8,585.0L376.5,581.7L373.1,578.4L370.6,573.4L369.0,568.4ZM383.1,579.2L389.8,577.5L390.6,580.9L384.0,582.5ZM86.6,663.5L89.9,661.4L93.3,664.3L95.0,668.5L96.6,673.5L100.0,676.9L103.4,680.2L102.9,682.7L100.0,685.3L96.6,687.8L94.1,688.6L96.6,684.4L97.5,681.1L95.8,677.7L93.3,674.4L89.9,673.5L88.3,674.4L89.9,671.0L88.7,666.8ZM102.2,695.2L103.9,696.9L98.1,704.4L93.1,710.2L89.7,711.9L88.9,709.4L93.9,703.6L98.9,697.7ZM72.8,667.7L74.9,667.7L75.3,671.9L73.2,674.4L72.3,671.0ZM88.7,692.0L89.9,689.5L93.3,690.3L92.5,693.6L89.9,694.5Z"/>
<path d="M576.4,-5.0L613.9,-5.0L613.9,0.0L618.1,6.7L623.1,14.2L628.9,21.7L634.8,29.2L641.4,35.9L648.1,41.7L654.8,46.7L663.1,50.9L671.5,54.2L679.8,56.7L686.5,58.4L690.7,60.1L692.3,64.2L693.7,65.1L700.4,67.6L707.0,68.4L712.9,66.7L717.0,63.4L721.2,58.4L725.4,53.4L729.6,48.4L732.9,45.0L736.2,43.4L737.9,45.9L737.1,51.7L734.6,58.4L731.2,65.1L728.7,71.7L727.1,78.4L728.7,84.2L732.9,87.6L737.1,89.2L736.2,92.6L733.7,94.2L734.6,100.1L737.9,104.3L743.7,105.9L748.7,102.6L753.7,100.1L757.1,100.1L756.2,103.4L751.2,106.8L747.1,110.1L745.4,114.3L740.4,113.4L735.4,115.1L730.4,118.4L725.4,121.8L720.4,124.3L715.4,125.9L711.5,126.8L704.0,128.0L696.4,126.8L686.4,125.5L676.4,131.8L666.3,140.6L657.5,150.6L651.3,163.2L650.0,175.7L648.2,187.0L641.5,181.7L634.8,176.7L628.1,173.4L621.5,170.1L614.8,166.7L608.1,162.6L601.4,158.4L594.8,154.2L588.1,150.0L583.1,148.0L578.1,146.7L571.4,147.5L564.8,150.0L558.9,154.2L553.9,158.4L553.1,162.6L548.9,164.2L545.6,161.7L542.2,156.7L538.9,152.5L534.7,150.0L529.7,149.7L524.7,151.7L522.2,155.9L521.4,160.9L523.9,165.9L527.2,170.1L531.4,173.4L536.4,174.7L541.4,177.6L546.4,181.7L551.4,185.9L556.4,188.4L558.9,191.7L556.4,194.2L551.4,197.6L546.4,198.4L541.4,195.9L537.2,197.6L534.7,196.7L529.7,198.4L527.2,201.8L527.2,206.8L524.7,210.9L520.5,214.3L517.2,216.8L513.0,215.9L508.0,214.3L506.7,208.4L506.7,202.6L508.9,196.7L511.4,190.9L512.2,185.1L510.5,180.1L505.5,175.1L502.2,170.9L498.4,166.7L497.7,161.7L499.7,156.7L501.0,151.7L500.0,145.9L503.0,142.5L509.7,139.2L514.7,135.0L518.9,133.4L523.1,130.0L527.2,126.7L528.9,122.5L527.2,118.3L525.6,114.2L521.4,110.0L522.2,105.0L527.2,101.3L531.4,102.6L536.4,106.8L541.4,109.3L546.4,110.1L551.4,113.4L556.4,114.3L561.4,110.9L565.6,106.8L567.7,101.8L567.2,96.7L565.6,90.1L564.4,83.4L565.6,77.6L568.9,74.2L573.9,71.7L576.4,66.7L577.2,58.4L577.7,50.0L578.1,43.4L580.1,36.7L581.4,30.0L582.2,21.7L581.1,13.3L578.9,6.7L576.4,0.0ZM589.8,135.9L594.8,134.2L595.6,137.5L592.3,141.7L588.9,145.4L586.8,144.2L588.1,139.2Z"/>
<path d="M268.1,582.6L272.3,580.9L276.5,581.7L277.3,583.8L274.0,585.5L269.8,586.3ZM443.1,386.7L444.8,391.7L443.1,397.5L447.3,400.9L445.6,405.9L441.4,410.0L436.4,414.2L431.4,417.0L429.7,414.2L431.4,409.2L430.6,404.2L433.9,399.2L438.1,393.4L440.6,388.3ZM473.4,378.7L476.1,378.0L476.8,380.3L475.1,383.0L473.1,382.0ZM486.4,338.5L489.4,338.2L490.0,340.7L487.7,341.9L486.0,340.7ZM374.4,413.0L376.7,413.0L376.7,414.7L374.4,414.7ZM219.7,493.9L223.4,495.4L225.0,499.2L223.4,503.1L219.7,504.7L216.0,503.1L214.3,499.2L216.0,495.4ZM214.3,503.7L216.3,505.9L215.0,510.1L211.3,513.4L208.0,514.2L204.7,510.9L204.3,507.6L208.0,505.9L211.3,504.2ZM310.8,528.7L312.8,528.7L312.8,530.7L310.8,530.7ZM56.6,579.2L58.7,582.5L58.3,587.6L56.2,591.8L54.1,595.1L55.4,599.3L54.1,602.7L51.6,606.0L49.9,609.4L47.4,612.7L45.3,614.4L43.2,612.7L42.4,609.4L43.2,604.3L44.1,600.1L46.6,596.8L47.4,591.8L48.7,585.9L50.8,582.5L54.1,580.0ZM65.0,623.2L69.2,624.5L71.7,627.8L70.9,631.2L67.5,633.7L63.4,632.8L62.1,629.5L63.4,625.3ZM126.4,575.0L128.9,574.7L129.8,577.5L127.8,579.2L126.1,577.5ZM82.0,603.5L86.0,603.0L85.5,606.5L83.0,607.0ZM133.4,590.9L136.1,590.9L136.1,594.2L133.4,594.2ZM40.7,652.1L43.7,653.0L43.2,657.6L42.4,661.8L43.2,666.8L48.3,667.2L48.7,669.3L45.7,670.1L44.9,673.5L41.6,676.0L39.0,678.5L36.5,680.2L37.4,682.3L34.0,682.7L32.8,685.2L32.3,688.6L33.2,691.1L31.5,692.4L29.0,690.7L25.6,691.1L21.4,690.7L18.5,688.6L18.1,685.2L17.7,681.9L19.8,679.4L23.1,677.7L24.8,678.5L28.1,676.0L30.7,673.5L34.0,670.1L36.5,666.8L38.2,663.4L38.2,660.9L35.7,658.4L36.5,655.9L39.0,653.4ZM31.1,658.8L33.0,658.8L33.0,660.8L31.1,660.8ZM6.7,717.7L10.5,715.7L12.7,717.4L9.7,720.2L7.2,720.7ZM70.6,726.9L76.4,725.2L74.7,729.4L68.9,736.1L65.6,739.4L64.7,736.1L68.1,731.1ZM483.0,168.4L488.9,167.1L489.4,171.7L487.2,177.6L483.9,179.2L481.0,173.4ZM478.0,208.1L481.3,208.1L481.7,211.1L478.3,211.4ZM498.0,217.8L500.7,217.8L500.0,220.1L498.4,219.8ZM562.2,38.7L565.1,37.5L568.9,37.5L570.1,39.7L567.2,40.9L563.1,41.0ZM738.7,75.9L740.1,73.4L745.4,68.4L750.4,64.2L753.7,60.1L752.9,58.4L756.2,54.2L760.4,48.4L764.6,41.7L767.1,35.9L771.3,33.4L775.4,35.9L782.1,38.4L788.8,37.0L789.6,40.0L786.3,43.7L782.1,45.9L777.1,48.4L771.3,50.0L767.9,52.5L767.1,55.9L762.9,58.4L760.4,62.6L756.2,64.2L755.4,66.7L750.4,70.1L746.7,74.2L745.4,81.7L744.6,85.9L742.9,82.6L740.4,80.1ZM800.4,37.5L802.4,32.5L804.1,27.5L808.8,24.7L813.5,20.9L811.8,15.8L815.8,14.7L819.6,10.3L824.6,7.5L829.6,2.5L832.1,-3.3L854.7,-3.3L850.8,5.8L846.3,7.8L842.1,6.2L838.0,7.8L835.5,12.5L831.3,16.7L827.1,20.9L821.3,25.0L817.1,29.2L812.1,32.5L808.8,34.2L806.3,38.4L802.4,40.0ZM789.6,76.7L793.8,73.4L799.6,70.9L804.1,72.6L804.6,75.9L800.4,79.2L795.4,81.7L791.3,83.1L788.8,80.1ZM775.4,85.9L779.1,84.2L780.8,85.9L777.4,88.1ZM767.4,91.4L771.8,90.9L773.8,93.7L771.3,96.7L767.9,96.4ZM757.9,95.9L761.7,95.4L763.4,98.1L760.4,99.2ZM763.7,99.7L768.8,98.1L769.6,100.1L765.4,102.6ZM480.6,574.2L483.9,575.9L485.1,580.1L483.4,583.7L479.7,582.6L478.6,578.0ZM475.1,588.7L477.7,588.7L477.7,591.7L475.1,591.7ZM475.1,593.1L477.4,593.4L477.1,598.4L475.1,602.1L472.7,601.4L473.4,597.1ZM469.1,604.2L473.1,604.7L473.4,608.1L469.7,608.7ZM486.8,609.7L489.4,611.1L489.8,614.2L487.3,616.1L484.4,614.7L483.9,611.4ZM490.3,621.4L492.4,623.1L491.8,625.8L489.1,625.8L488.4,623.4ZM493.5,661.0L497.0,659.5L502.0,661.5L502.0,666.0L498.0,667.5L494.0,665.0ZM496.0,694.0L499.0,694.0L499.5,697.5L496.0,697.5ZM214.0,611.0L216.0,610.5L216.5,612.5L214.5,613.0ZM220.0,607.0L222.5,606.5L223.0,608.5L220.5,609.0ZM229.0,610.0L231.5,609.5L232.0,612.0L229.5,612.5ZM50.4,666.8L52.9,666.8L52.9,668.9L50.4,668.9Z"/>
</g>
<clipPath id="jp"><path clip-rule="evenodd" d="M522.7,223.9L525.6,226.8L528.1,226.0L531.5,225.1L534.9,226.8L535.7,231.0L536.1,236.0L536.5,241.9L537.8,246.9L539.9,248.6L542.0,246.9L543.2,243.6L544.0,239.4L546.6,238.6L549.9,241.1L553.3,243.6L555.8,245.3L557.9,243.6L560.0,238.6L560.8,233.5L560.4,227.7L559.2,225.1L555.0,226.8L549.9,228.5L545.8,230.2L542.4,231.9L539.9,231.0L539.5,227.7L540.7,222.6L542.4,217.6L544.5,212.6L546.6,207.5L549.9,208.8L554.1,211.3L557.5,213.8L560.8,217.2L563.4,218.3L566.7,216.8L569.2,214.2L570.5,213.8L569.2,221.0L568.4,227.7L568.2,235.2L568.4,241.9L569.2,250.3L570.9,258.7L571.7,262.9L578.1,266.7L582.3,273.4L585.6,280.1L588.1,286.7L591.4,295.1L593.1,303.4L594.8,311.8L596.4,320.1L595.6,316.0L596.5,322.7L594.0,329.3L592.3,336.0L589.8,342.7L586.5,349.4L581.4,355.2L576.4,361.0L574.8,366.0L575.6,372.7L574.8,379.4L576.4,384.4L575.6,390.2L571.4,392.7L568.1,389.4L565.6,386.1L561.4,386.1L556.4,389.4L551.4,394.4L548.9,401.1L549.8,409.4L551.4,417.8L552.3,426.1L552.3,434.4L552.3,441.9L553.1,436.0L552.3,444.3L550.6,452.7L549.8,461.0L544.8,464.4L540.6,471.0L538.1,479.4L535.6,487.7L533.1,496.1L532.3,502.7L534.8,509.4L538.1,516.1L542.3,522.7L546.5,527.7L541.5,530.3L536.5,533.3L531.5,537.5L527.3,543.4L526.1,550.0L525.6,555.9L521.4,560.0L514.8,563.4L508.9,565.9L506.4,570.0L502.3,571.4L498.1,569.2L496.4,565.9L497.3,560.0L498.9,554.2L499.8,550.0L503.1,545.0L507.3,539.2L509.4,535.8L507.3,533.3L503.1,535.0L498.9,540.0L495.6,545.9L494.4,550.9L495.1,555.9L494.4,559.2L490.6,559.7L488.9,555.0L487.3,551.7L481.4,550.4L476.4,551.7L473.1,555.0L472.2,560.0L469.7,563.4L471.4,570.0L469.7,576.7L467.2,582.6L463.1,585.9L458.9,587.6L454.7,585.1L452.7,580.1L453.1,573.4L454.7,567.5L456.4,563.4L454.7,560.9L449.7,560.9L445.6,564.2L441.4,570.0L437.2,576.7L433.9,582.6L432.2,586.7L428.0,585.9L421.4,584.2L414.7,583.4L408.0,583.4L401.3,583.7L394.7,584.7L388.0,585.9L383.0,587.6L379.0,588.9L377.3,593.4L376.5,600.1L374.0,604.2L369.8,605.4L364.8,604.2L359.8,606.7L354.8,610.1L350.6,615.1L348.1,620.1L344.8,623.4L340.6,626.7L338.1,631.7L336.4,636.7L333.9,641.8L329.8,645.9L325.6,646.8L319.7,644.3L313.9,640.9L308.9,637.6L305.6,633.4L303.1,628.4L298.9,625.1L295.6,621.7L296.4,615.1L298.1,608.4L296.4,605.1L289.7,604.2L283.1,605.9L278.9,608.4L278.0,613.4L280.5,619.2L283.1,624.2L285.6,625.1L281.4,626.7L276.4,630.9L271.4,636.7L266.4,641.8L262.2,648.4L258.9,656.8L255.5,653.4L249.7,648.4L243.1,644.2L236.4,643.4L229.7,645.0L223.1,649.2L218.9,654.2L216.4,660.1L213.9,665.1L209.7,668.4L208.9,673.4L209.7,678.4L209.4,681.9L207.7,683.6L205.2,681.1L201.0,681.9L196.8,682.7L193.5,681.9L190.1,682.7L188.4,685.3L185.9,683.6L184.2,680.2L185.9,678.1L189.3,678.6L190.1,675.2L185.9,674.4L182.6,671.9L180.1,668.5L179.2,665.1L176.7,662.6L175.4,659.7L177.5,657.6L181.7,655.9L179.2,652.6L180.1,649.2L178.4,646.7L171.7,648.4L165.4,651.3L165.0,650.3L170.0,646.9L175.0,643.6L180.1,640.2L184.2,636.9L188.4,634.4L191.8,631.0L192.2,626.8L191.0,624.3L188.4,623.5L185.9,625.1L182.6,627.7L175.0,627.7L167.5,629.3L160.8,627.7L156.6,623.5L151.6,621.0L150.3,618.0L146.5,619.3L138.1,620.1L129.8,621.0L123.9,617.6L124.3,625.1L124.7,631.9L128.1,635.2L134.0,636.9L138.1,637.7L141.5,636.0L146.5,633.5L150.7,631.0L152.4,631.9L153.2,636.0L154.9,640.2L155.7,645.3L154.1,649.5L149.9,650.9L146.5,653.4L151.6,653.8L158.3,654.2L163.3,653.4L162.5,656.8L165.0,660.1L166.6,664.3L167.5,668.5L169.2,671.9L166.6,676.0L163.3,681.9L159.9,686.9L154.9,691.1L153.2,695.3L151.3,700.1L148.8,706.8L146.3,715.1L144.7,721.8L143.8,725.9L141.4,747.8L140.6,774.5L109.8,774.5L109.8,755.3L108.1,747.8L105.6,746.1L103.1,747.8L103.1,755.3L103.1,774.5L85.6,774.5L85.6,755.3L83.9,751.1L86.4,746.1L89.7,739.4L86.4,731.1L86.4,721.9L84.7,717.7L80.6,713.6L78.1,707.7L76.9,703.0L77.4,698.7L78.2,693.6L80.7,691.1L83.2,688.6L84.9,685.3L85.7,681.5L82.4,681.9L79.0,683.6L75.7,686.9L72.3,690.3L69.8,692.8L67.3,689.5L67.7,686.1L68.1,681.9L65.6,678.6L62.3,676.9L61.0,673.5L58.9,669.3L59.8,666.8L62.3,664.3L59.8,662.6L56.4,660.1L51.4,661.0L50.1,659.3L52.2,656.8L55.6,652.6L53.9,648.4L55.6,645.0L59.8,642.5L63.1,643.5L68.9,640.2L73.1,636.8L78.1,638.5L83.1,636.8L88.1,634.2L93.1,630.9L95.6,626.7L98.1,622.5L103.1,621.7L105.5,620.1L109.7,616.7L113.0,613.4L116.3,609.2L114.7,604.2L115.5,599.2L119.7,595.9L124.7,593.4L131.4,591.7L136.4,590.0L141.4,588.4L146.4,585.0L151.4,581.7L156.4,579.2L163.1,575.0L168.1,570.0L173.1,565.0L178.9,560.0L184.7,553.3L189.7,546.7L191.4,540.0L203.0,536.7L208.0,534.2L213.0,532.6L218.8,534.2L221.3,538.4L228.0,539.2L236.4,538.4L244.7,537.6L253.0,535.9L261.4,533.4L269.7,530.9L278.1,530.1L286.4,529.2L293.1,526.7L298.9,525.1L303.1,524.2L306.4,526.7L307.3,531.7L309.8,534.2L313.9,533.4L318.1,535.1L323.1,533.4L328.1,530.9L333.1,530.1L336.4,526.7L337.3,522.6L334.8,518.4L333.9,513.4L336.4,506.7L339.8,500.9L344.8,495.0L351.5,488.4L358.1,481.7L363.1,475.9L367.3,469.2L368.1,463.4L365.6,456.7L364.0,450.0L365.6,443.3L368.1,440.0L368.9,440.1L373.9,436.7L379.7,434.2L385.5,431.7L391.4,430.4L395.0,432.6L394.7,436.7L391.4,440.1L390.5,444.2L387.2,445.1L383.9,448.4L382.2,455.1L381.0,461.7L380.5,466.7L383.9,470.1L389.7,471.4L393.9,469.2L396.4,465.1L400.5,461.7L407.2,460.1L414.7,456.7L421.4,453.4L428.1,450.1L434.7,446.7L441.4,441.7L446.4,436.7L450.6,430.1L453.9,423.4L456.4,417.5L460.6,412.5L466.4,409.2L472.3,405.9L478.1,401.7L482.3,395.0L484.0,388.3L485.6,381.7L487.3,375.0L489.8,370.0L489.7,369.4L494.7,362.7L498.9,356.0L501.4,349.4L502.2,342.7L503.1,336.0L506.4,329.3L508.1,322.7L508.9,316.0L507.2,311.8L506.7,308.4L504.7,303.4L500.5,302.6L497.2,303.4L494.7,299.2L493.4,295.1L497.2,295.9L501.4,293.4L504.7,288.4L505.5,281.7L503.9,275.1L504.7,268.4L503.0,263.4L503.0,260.4L504.7,257.0L508.0,253.6L511.4,252.4L514.7,251.1L518.5,249.5L519.3,245.3L520.6,240.2L521.0,236.0L518.9,233.5L517.2,231.0L520.2,230.2L521.0,226.8ZM175.5,611.0L179.0,609.5L183.5,610.5L184.5,614.0L182.0,617.5L178.0,618.0L175.0,615.5ZM190.5,610.5L194.0,609.0L200.0,609.5L201.5,613.0L199.0,616.5L194.5,617.5L191.0,615.0ZM219.9,600.9L225.0,599.7L230.0,603.0L233.4,606.8L234.0,611.0L232.9,614.3L230.0,617.3L226.6,616.0L222.5,616.0L218.3,618.5L214.1,619.4L211.1,616.9L210.3,612.7L212.4,609.3L216.6,606.8L219.1,604.3ZM260.6,585.9L265.6,581.7L271.5,579.2L279.0,578.8L285.7,581.7L291.6,585.5L289.9,589.3L285.7,593.5L281.5,598.5L277.3,602.7L272.3,605.2L268.1,603.5L263.9,600.2L260.6,597.7L258.1,595.1L265.6,595.1L266.4,590.1L264.8,587.6ZM294.9,586.8L301.6,585.9L306.7,584.7L310.0,586.8L308.4,590.1L305.8,592.6L302.5,593.9L301.6,596.8L297.5,599.3L293.3,601.4L290.7,599.3L290.3,596.8L292.4,592.6L293.7,589.3ZM367.3,565.9L361.4,576.7L360.6,581.7L364.8,586.7L371.5,589.2L378.1,588.4L379.8,585.0L376.5,581.7L373.1,578.4L370.6,573.4L369.0,568.4ZM383.1,579.2L389.8,577.5L390.6,580.9L384.0,582.5ZM86.6,663.5L89.9,661.4L93.3,664.3L95.0,668.5L96.6,673.5L100.0,676.9L103.4,680.2L102.9,682.7L100.0,685.3L96.6,687.8L94.1,688.6L96.6,684.4L97.5,681.1L95.8,677.7L93.3,674.4L89.9,673.5L88.3,674.4L89.9,671.0L88.7,666.8ZM102.2,695.2L103.9,696.9L98.1,704.4L93.1,710.2L89.7,711.9L88.9,709.4L93.9,703.6L98.9,697.7ZM72.8,667.7L74.9,667.7L75.3,671.9L73.2,674.4L72.3,671.0ZM88.7,692.0L89.9,689.5L93.3,690.3L92.5,693.6L89.9,694.5ZM576.4,-5.0L613.9,-5.0L613.9,0.0L618.1,6.7L623.1,14.2L628.9,21.7L634.8,29.2L641.4,35.9L648.1,41.7L654.8,46.7L663.1,50.9L671.5,54.2L679.8,56.7L686.5,58.4L690.7,60.1L692.3,64.2L693.7,65.1L700.4,67.6L707.0,68.4L712.9,66.7L717.0,63.4L721.2,58.4L725.4,53.4L729.6,48.4L732.9,45.0L736.2,43.4L737.9,45.9L737.1,51.7L734.6,58.4L731.2,65.1L728.7,71.7L727.1,78.4L728.7,84.2L732.9,87.6L737.1,89.2L736.2,92.6L733.7,94.2L734.6,100.1L737.9,104.3L743.7,105.9L748.7,102.6L753.7,100.1L757.1,100.1L756.2,103.4L751.2,106.8L747.1,110.1L745.4,114.3L740.4,113.4L735.4,115.1L730.4,118.4L725.4,121.8L720.4,124.3L715.4,125.9L711.5,126.8L704.0,128.0L696.4,126.8L686.4,125.5L676.4,131.8L666.3,140.6L657.5,150.6L651.3,163.2L650.0,175.7L648.2,187.0L641.5,181.7L634.8,176.7L628.1,173.4L621.5,170.1L614.8,166.7L608.1,162.6L601.4,158.4L594.8,154.2L588.1,150.0L583.1,148.0L578.1,146.7L571.4,147.5L564.8,150.0L558.9,154.2L553.9,158.4L553.1,162.6L548.9,164.2L545.6,161.7L542.2,156.7L538.9,152.5L534.7,150.0L529.7,149.7L524.7,151.7L522.2,155.9L521.4,160.9L523.9,165.9L527.2,170.1L531.4,173.4L536.4,174.7L541.4,177.6L546.4,181.7L551.4,185.9L556.4,188.4L558.9,191.7L556.4,194.2L551.4,197.6L546.4,198.4L541.4,195.9L537.2,197.6L534.7,196.7L529.7,198.4L527.2,201.8L527.2,206.8L524.7,210.9L520.5,214.3L517.2,216.8L513.0,215.9L508.0,214.3L506.7,208.4L506.7,202.6L508.9,196.7L511.4,190.9L512.2,185.1L510.5,180.1L505.5,175.1L502.2,170.9L498.4,166.7L497.7,161.7L499.7,156.7L501.0,151.7L500.0,145.9L503.0,142.5L509.7,139.2L514.7,135.0L518.9,133.4L523.1,130.0L527.2,126.7L528.9,122.5L527.2,118.3L525.6,114.2L521.4,110.0L522.2,105.0L527.2,101.3L531.4,102.6L536.4,106.8L541.4,109.3L546.4,110.1L551.4,113.4L556.4,114.3L561.4,110.9L565.6,106.8L567.7,101.8L567.2,96.7L565.6,90.1L564.4,83.4L565.6,77.6L568.9,74.2L573.9,71.7L576.4,66.7L577.2,58.4L577.7,50.0L578.1,43.4L580.1,36.7L581.4,30.0L582.2,21.7L581.1,13.3L578.9,6.7L576.4,0.0ZM589.8,135.9L594.8,134.2L595.6,137.5L592.3,141.7L588.9,145.4L586.8,144.2L588.1,139.2ZM268.1,582.6L272.3,580.9L276.5,581.7L277.3,583.8L274.0,585.5L269.8,586.3ZM443.1,386.7L444.8,391.7L443.1,397.5L447.3,400.9L445.6,405.9L441.4,410.0L436.4,414.2L431.4,417.0L429.7,414.2L431.4,409.2L430.6,404.2L433.9,399.2L438.1,393.4L440.6,388.3ZM473.4,378.7L476.1,378.0L476.8,380.3L475.1,383.0L473.1,382.0ZM486.4,338.5L489.4,338.2L490.0,340.7L487.7,341.9L486.0,340.7ZM374.4,413.0L376.7,413.0L376.7,414.7L374.4,414.7ZM219.7,493.9L223.4,495.4L225.0,499.2L223.4,503.1L219.7,504.7L216.0,503.1L214.3,499.2L216.0,495.4ZM214.3,503.7L216.3,505.9L215.0,510.1L211.3,513.4L208.0,514.2L204.7,510.9L204.3,507.6L208.0,505.9L211.3,504.2ZM310.8,528.7L312.8,528.7L312.8,530.7L310.8,530.7ZM56.6,579.2L58.7,582.5L58.3,587.6L56.2,591.8L54.1,595.1L55.4,599.3L54.1,602.7L51.6,606.0L49.9,609.4L47.4,612.7L45.3,614.4L43.2,612.7L42.4,609.4L43.2,604.3L44.1,600.1L46.6,596.8L47.4,591.8L48.7,585.9L50.8,582.5L54.1,580.0ZM65.0,623.2L69.2,624.5L71.7,627.8L70.9,631.2L67.5,633.7L63.4,632.8L62.1,629.5L63.4,625.3ZM126.4,575.0L128.9,574.7L129.8,577.5L127.8,579.2L126.1,577.5ZM82.0,603.5L86.0,603.0L85.5,606.5L83.0,607.0ZM133.4,590.9L136.1,590.9L136.1,594.2L133.4,594.2ZM40.7,652.1L43.7,653.0L43.2,657.6L42.4,661.8L43.2,666.8L48.3,667.2L48.7,669.3L45.7,670.1L44.9,673.5L41.6,676.0L39.0,678.5L36.5,680.2L37.4,682.3L34.0,682.7L32.8,685.2L32.3,688.6L33.2,691.1L31.5,692.4L29.0,690.7L25.6,691.1L21.4,690.7L18.5,688.6L18.1,685.2L17.7,681.9L19.8,679.4L23.1,677.7L24.8,678.5L28.1,676.0L30.7,673.5L34.0,670.1L36.5,666.8L38.2,663.4L38.2,660.9L35.7,658.4L36.5,655.9L39.0,653.4ZM31.1,658.8L33.0,658.8L33.0,660.8L31.1,660.8ZM6.7,717.7L10.5,715.7L12.7,717.4L9.7,720.2L7.2,720.7ZM70.6,726.9L76.4,725.2L74.7,729.4L68.9,736.1L65.6,739.4L64.7,736.1L68.1,731.1ZM483.0,168.4L488.9,167.1L489.4,171.7L487.2,177.6L483.9,179.2L481.0,173.4ZM478.0,208.1L481.3,208.1L481.7,211.1L478.3,211.4ZM498.0,217.8L500.7,217.8L500.0,220.1L498.4,219.8ZM562.2,38.7L565.1,37.5L568.9,37.5L570.1,39.7L567.2,40.9L563.1,41.0ZM738.7,75.9L740.1,73.4L745.4,68.4L750.4,64.2L753.7,60.1L752.9,58.4L756.2,54.2L760.4,48.4L764.6,41.7L767.1,35.9L771.3,33.4L775.4,35.9L782.1,38.4L788.8,37.0L789.6,40.0L786.3,43.7L782.1,45.9L777.1,48.4L771.3,50.0L767.9,52.5L767.1,55.9L762.9,58.4L760.4,62.6L756.2,64.2L755.4,66.7L750.4,70.1L746.7,74.2L745.4,81.7L744.6,85.9L742.9,82.6L740.4,80.1ZM800.4,37.5L802.4,32.5L804.1,27.5L808.8,24.7L813.5,20.9L811.8,15.8L815.8,14.7L819.6,10.3L824.6,7.5L829.6,2.5L832.1,-3.3L854.7,-3.3L850.8,5.8L846.3,7.8L842.1,6.2L838.0,7.8L835.5,12.5L831.3,16.7L827.1,20.9L821.3,25.0L817.1,29.2L812.1,32.5L808.8,34.2L806.3,38.4L802.4,40.0ZM789.6,76.7L793.8,73.4L799.6,70.9L804.1,72.6L804.6,75.9L800.4,79.2L795.4,81.7L791.3,83.1L788.8,80.1ZM775.4,85.9L779.1,84.2L780.8,85.9L777.4,88.1ZM767.4,91.4L771.8,90.9L773.8,93.7L771.3,96.7L767.9,96.4ZM757.9,95.9L761.7,95.4L763.4,98.1L760.4,99.2ZM763.7,99.7L768.8,98.1L769.6,100.1L765.4,102.6ZM480.6,574.2L483.9,575.9L485.1,580.1L483.4,583.7L479.7,582.6L478.6,578.0ZM475.1,588.7L477.7,588.7L477.7,591.7L475.1,591.7ZM475.1,593.1L477.4,593.4L477.1,598.4L475.1,602.1L472.7,601.4L473.4,597.1ZM469.1,604.2L473.1,604.7L473.4,608.1L469.7,608.7ZM486.8,609.7L489.4,611.1L489.8,614.2L487.3,616.1L484.4,614.7L483.9,611.4ZM490.3,621.4L492.4,623.1L491.8,625.8L489.1,625.8L488.4,623.4ZM493.5,661.0L497.0,659.5L502.0,661.5L502.0,666.0L498.0,667.5L494.0,665.0ZM496.0,694.0L499.0,694.0L499.5,697.5L496.0,697.5ZM214.0,611.0L216.0,610.5L216.5,612.5L214.5,613.0ZM220.0,607.0L222.5,606.5L223.0,608.5L220.5,609.0ZM229.0,610.0L231.5,609.5L232.0,612.0L229.5,612.5ZM50.4,666.8L52.9,666.8L52.9,668.9L50.4,668.9Z"/></clipPath>
<g clip-path="url(#jp)" fill="none" stroke="#6a22ad" stroke-linecap="round" stroke-linejoin="round" shape-rendering="crispEdges">
<path d="M576.4,-5l37.5,0 0,5 4.2,6.7 5,7.5 5.8,7.5 5.9,7.5 6.6,6.7 6.7,5.8 6.7,5 8.3,4.2 8.4,3.3 8.3,2.5 6.7,1.7 4.2,1.7 1.6,4.1 1.4,.9 6.7,2.5 6.6,.8 5.9-1.7 4.1-3.3 4.2-5 4.2-5 4.2-5 3.3-3.4 3.3-1.6 1.7,2.5-.8,5.8-2.5,6.7-3.4,6.7-2.5,6.6-1.6,6.7 1.6,5.8 4.2,3.4 4.2,1.6-.9,3.4-2.5,1.6 .9,5.9 3.3,4.2 5.8,1.6 5-3.3 5-2.5 3.4,0-.9,3.3-5,3.4-4.1,3.3-1.7,4.2-5-.9-5,1.7-5,3.3-5,3.4-5,2.5-5,1.6-3.9,.9-7.5,1.2-7.6-1.2-10-1.3-10,6.3-10.1,8.8-8.8,10-6.2,12.6-1.3,12.5-1.8,11.3-6.7-5.3-6.7-5-6.7-3.3-6.6-3.3-6.7-3.4-6.7-4.1-6.7-4.2-6.6-4.2-6.7-4.2-5-2-5-1.3-6.7,.8-6.6,2.5M527.2,101.3l4.2,1.3 5,4.2 5,2.5 5,.8 5,3.3 5,.9 5-3.4 4.2-4.1 2.1-5-.5-5.1-1.6-6.6-1.2-6.7 1.2-5.8 3.3-3.4 5-2.5 2.5-5 .8-8.3 .5-8.4 .4-6.6 2-6.7 1.3-6.7 .8-8.3-1.1-8.4-2.2-6.6-2.5-6.7 0-5M589.8,135.9l5-1.7 .8,3.3-3.3,4.2-3.4,3.7-2.1-1.2 1.3-5 1.7-3.3M562.2,38.7l2.9-1.2 3.8,0 1.2,2.2-2.9,1.2-4.1,.1-.9-2.3M738.7,75.9l1.4-2.5 5.3-5 5-4.2 3.3-4.1-.8-1.7 3.3-4.2 4.2-5.8 4.2-6.7 2.5-5.8 4.2-2.5 4.1,2.5 6.7,2.5 6.7-1.4 .8,3-3.3,3.7-4.2,2.2-5,2.5-5.8,1.6-3.4,2.5-.8,3.4-4.2,2.5-2.5,4.2-4.2,1.6-.8,2.5-5,3.4-3.7,4.1-1.3,7.5-.8,4.2-1.7-3.3-2.5-2.5-1.7-4.2M800.4,37.5l2-5 1.7-5 4.7-2.8 4.7-3.8-1.7-5.1 4-1.1 3.8-4.4 5-2.8 5-5 2.5-5.8 22.6,0-3.9,9.1-4.5,2-4.2-1.6-4.1,1.6-2.5,4.7-4.2,4.2-4.2,4.2-5.8,4.1-4.2,4.2-5,3.3-3.3,1.7-2.5,4.2-3.9,1.6-2-2.5M789.6,76.7l4.2-3.3 5.8-2.5 4.5,1.7 .5,3.3-4.2,3.3-5,2.5-4.1,1.4-2.5-3 .8-3.4M775.4,85.9l3.7-1.7 1.7,1.7-3.4,2.2-2-2.2M767.4,91.4l4.4-.5 2,2.8-2.5,3-3.4-.3-.5-5M757.9,95.9l3.8-.5 1.7,2.7-3,1.1-2.5-3.3M763.7,99.7l5.1-1.6 .8,2-4.2,2.5-1.7-2.9" stroke-width="5.0"/>
<path d="M522.7,223.9l2.9,2.9 2.5-.8 3.4-.9 3.4,1.7 .8,4.2 .4,5 .4,5.9 1.3,5 2.1,1.7 2.1-1.7 1.2-3.3 .8-4.2 2.6-.8 3.3,2.5 3.4,2.5 2.5,1.7 2.1-1.7 2.1-5 .8-5.1-.4-5.8-1.2-2.6-4.2,1.7-5.1,1.7-4.1,1.7-3.4,1.7-2.5-.9-.4-3.3 1.2-5.1 1.7-5 2.1-5 2.1-5.1 3.3,1.3 4.2,2.5 3.4,2.5 3.3,3.4 2.6,1.1 3.3-1.5 2.5-2.6 1.3-.4-1.3,7.2-.8,6.7-.2,7.5 .2,6.7 .8,8.4 1.7,8.4 .8,4.2 6.4,3.8 4.2,6.7 3.3,6.7 2.5,6.6 3.3,8.4 1.7,8.3 1.7,8.4 1.6,8.3-.8-4.1 .9,6.7-2.5,6.6-1.7,6.7-2.5,6.7-3.3,6.7-5.1,5.8-5,5.8-1.6,5 .8,6.7-.8,6.7 1.6,5-.8,5.8-4.2,2.5-3.3-3.3-2.5-3.3-4.2,0-5,3.3-5,5-2.5,6.7M503.1,336l3.3-6.7 1.7-6.6 .8-6.7-1.7-4.2-.5-3.4-2-5-4.2-.8-3.3,.8-2.5-4.2-1.3-4.1 3.8,.8 4.2-2.5 3.3-5 .8-6.7-1.6-6.6 .8-6.7-1.7-5 0-3 1.7-3.4 3.3-3.4 3.4-1.2 3.3-1.3 3.8-1.6 .8-4.2 1.3-5.1 .4-4.2-2.1-2.5-1.7-2.5 3-.8 .8-3.4 1.7-2.9M564.8,150l-5.9,4.2-5,4.2-.8,4.2-4.2,1.6-3.3-2.5-3.4-5-3.3-4.2-4.2-2.5-5-.3-5,2-2.5,4.2-.8,5 2.5,5 3.3,4.2 4.2,3.3 5,1.3 5,2.9 5,4.1 5,4.2 5,2.5 2.5,3.3-2.5,2.5-5,3.4-5,.8-5-2.5-4.2,1.7-2.5-.9-5,1.7-2.5,3.4 0,5-2.5,4.1-4.2,3.4-3.3,2.5-4.2-.9-5-1.6-1.3-5.9 0-5.8 2.2-5.9 2.5-5.8 .8-5.8-1.7-5-5-5-3.3-4.2-3.8-4.2-.7-5 2-5 1.3-5-1-5.8 3-3.4 6.7-3.3 5-4.2 4.2-1.6 4.2-3.4 4.1-3.3 1.7-4.2-1.7-4.2-1.6-4.1-4.2-4.2 .8-5 5-3.7M483,168.4l5.9-1.3 .5,4.6-2.2,5.9-3.3,1.6-2.9-5.8 2-5M478,208.1l3.3,0 .4,3-3.4,.3-.3-3.3M498,217.8l2.7,0-.7,2.3-1.6-.3-.4-2" stroke-width="5.5"/>
<path d="M548.9,401.1l.9,8.3 1.6,8.4 .9,8.3 0,8.3 0,7.5 .8-5.9-.8,8.3-1.7,8.4-.8,8.3-5,3.4-4.2,6.6-2.5,8.4-2.5,8.3-2.5,8.4-.8,6.6 2.5,6.7 3.3,6.7 4.2,6.6 4.2,5-5,2.6-5,3-5,4.2-4.2,5.9-1.2,6.6-.5,5.9-4.2,4.1-6.6,3.4-5.9,2.5-2.5,4.1-4.1,1.4-4.2-2.2-1.7-3.3 .9-5.9 1.6-5.8 .9-4.2 3.3-5 4.2-5.8 2.1-3.4-2.1-2.5-4.2,1.7-4.2,5-3.3,5.9-1.2,5 .7,5-.7,3.3-3.8,.5-1.7-4.7-1.6-3.3-5.9-1.3-5,1.3-3.3,3.3-.9,5-2.5,3.4M379.7,434.2l5.8-2.5 5.9-1.3 3.6,2.2-.3,4.1-3.3,3.4-.9,4.1-3.3,.9M396.4,465.1l4.1-3.4 6.7-1.6 7.5-3.4 6.7-3.3 6.7-3.3 6.6-3.4 6.7-5 5-5 4.2-6.6 3.3-6.7 2.5-5.9 4.2-5 5.8-3.3 5.9-3.3 5.8-4.2 4.2-6.7 1.7-6.7 1.6-6.6 1.7-6.7 2.5-5-.1-.6 5-6.7 4.2-6.7 2.5-6.6 .8-6.7 .9-6.7M443.1,386.7l1.7,5-1.7,5.8 4.2,3.4-1.7,5-4.2,4.1-5,4.2-5,2.8-1.7-2.8 1.7-5-.8-5 3.3-5 4.2-5.8 2.5-5.1 2.5-1.6M473.4,378.7l2.7-.7 .7,2.3-1.7,2.7-2-1 .3-3.3M486.4,338.5l3-.3 .6,2.5-2.3,1.2-1.7-1.2 .4-2.2M374.4,413l2.3,0 0,1.7-2.3,0 0-1.7M480.6,574.2l3.3,1.7 1.2,4.2" stroke-width="6.0"/>
<path d="M469.7,563.4l1.7,6.6-1.7,6.7-2.5,5.9-4.1,3.3-4.2,1.7-4.2-2.5-2-5 .4-6.7 1.6-5.9 1.7-4.1-1.7-2.5-5,0-4.1,3.3-4.2,5.8-4.2,6.7-3.3,5.9-1.7,4.1-4.2-.8-6.6-1.7-6.7-.8-6.7,0-6.7,.3-6.6,1-6.7,1.2-5,1.7-4,1.3-1.7,4.5-.8,6.7-2.5,4.1-4.2,1.2-5-1.2-5,2.5-5,3.4-4.2,5-2.5,5-3.3,3.3-4.2,3.3-2.5,5-1.7,5-2.5,5.1M253,535.9l8.4-2.5 8.3-2.5 8.4-.8 8.3-.9 6.7-2.5 5.8-1.6 4.2-.9 3.3,2.5 .9,5 2.5,2.5 4.1-.8 4.2,1.7 5-1.7 5-2.5 5-.8 3.3-3.4 .9-4.1-2.5-4.2-.9-5 2.5-6.7 3.4-5.8 5-5.9 6.7-6.6 6.6-6.7 5-5.8 4.2-6.7 .8-5.8-2.5-6.7-1.6-6.7 1.6-6.7 2.5-3.3 .8,.1 5-3.4 5.8-2.5M387.2,445.1l-3.3,3.3-1.7,6.7-1.2,6.6-.5,5 3.4,3.4 5.8,1.3 4.2-2.2 2.5-4.1M294.9,586.8l6.7-.9 5.1-1.2 3.3,2.1-1.6,3.3-2.6,2.5-3.3,1.3-.9,2.9M293.7,589.3l1.2-2.5M367.3,565.9l-5.9,10.8-.8,5 4.2,5 6.7,2.5 6.6-.8 1.7-3.4-3.3-3.3-3.4-3.3-2.5-5-1.6-5-1.7-2.5M383.1,579.2l6.7-1.7 .8,3.4-6.6,1.6-.9-3.3M310.8,528.7l2,0 0,2-2,0 0-2M485.1,580.1l-1.7,3.6-3.7-1.1-1.1-4.6 2-3.8M475.1,588.7l2.6,0 0,3-2.6,0 0-3M475.1,593.1l2.3,.3-.3,5-2,3.7-2.4-.7 .7-4.3 1.7-4M469.1,604.2l4,.5 .3,3.4-3.7,.6-.6-4.5M486.8,609.7l2.6,1.4 .4,3.1-2.5,1.9-2.9-1.4-.5-3.3 2.9-1.7M490.3,621.4l2.1,1.7-.6,2.7-2.7,0-.7-2.4 1.9-2M493.5,661l3.5-1.5 5,2 0,4.5-4,1.5-4-2.5-.5-4M496,694l3,0 .5,3.5-3.5,0 0-3.5" stroke-width="6.5"/>
<path d="M333.9,641.8l-4.1,4.1-4.2,.9-5.9-2.5-5.8-3.4-5-3.3-3.3-4.2-2.5-5-4.2-3.3-3.3-3.4 .8-6.6 1.7-6.7-1.7-3.3-6.7-.9-6.6,1.7-4.2,2.5-.9,5 2.5,5.8 2.6,5 2.5,.9-4.2,1.6-5,4.2-5,5.8-5,5.1-4.2,6.6-3.3,8.4-3.4-3.4-5.8-5-6.6-4.2-6.7-.8-6.7,1.6-6.6,4.2-4.2,5-2.5,5.9-2.5,5-4.2,3.3-.8,5 .8,5-.3,3.5-1.7,1.7-2.5-2.5-4.2,.8-4.2,.8-3.3-.8-3.4,.8-1.7,2.6-2.5-1.7-1.7-3.4 1.7-2.1 3.4,.5 .8-3.4-4.2-.8-3.3-2.5-2.5-3.4-.9-3.4-2.5-2.5-1.3-2.9 2.1-2.1 4.2-1.7-2.5-3.3 .9-3.4-1.7-2.5-6.7,1.7-6.3,2.9-.4-1 5-3.4 5-3.3 5.1-3.4 4.1-3.3 4.2-2.5 3.4-3.4 .4-4.2-1.2-2.5-2.6-.8-2.5,1.6-3.3,2.6-7.6,0-7.5,1.6-6.7-1.6-4.2-4.2-5-2.5-1.3-3-3.8,1.3-8.4,.8-8.3,.9-5.9-3.4 .4,7.5M134,636.9l4.1,.8 3.4-1.7 5-2.5 4.2-2.5 1.7,.9 .8,4.1 1.7,4.2 .8,5.1-1.6,4.2-4.2,1.4-3.4,2.5 5.1,.4 6.7,.4 5-.8-.8,3.4 2.5,3.3 1.6,4.2 .9,4.2 1.7,3.4-2.6,4.1-3.3,5.9M116.3,609.2l-1.6-5 .8-5 4.2-3.3 5-2.5 6.7-1.7 5-1.7 5-1.6 5-3.4 5-3.3 5-2.5 6.7-4.2 5-5 5-5 5.8-5 5.8-6.7 5-6.6 1.7-6.7 11.6-3.3 5-2.5 5-1.6 5.8,1.6 2.5,4.2 6.7,.8 8.4-.8 8.3-.8 8.3-1.7M175.5,611l3.5-1.5 4.5,1 1,3.5-2.5,3.5-4,.5-3-2.5 .5-4.5M190.5,610.5l3.5-1.5 6,.5 1.5,3.5-2.5,3.5-4.5,1-3.5-2.5-.5-4.5M219.9,600.9l5.1-1.2 5,3.3 3.4,3.8 .6,4.2-1.1,3.3-2.9,3-3.4-1.3-4.1,0-4.2,2.5-4.2,.9-3-2.5-.8-4.2 2.1-3.4 4.2-2.5 2.5-2.5 .8-3.4M260.6,585.9l5-4.2 5.9-2.5 7.5-.4 6.7,2.9 5.9,3.8-1.7,3.8-4.2,4.2-4.2,5-4.2,4.2-5,2.5-4.2-1.7-4.2-3.3-3.3-2.5-2.5-2.6 7.5,0 .8-5-1.6-2.5-4.2-1.7M301.6,596.8l-4.1,2.5-4.2,2.1-2.6-2.1-.4-2.5 2.1-4.2 1.3-3.3M268.1,582.6l4.2-1.7 4.2,.8 .8,2.1-3.3,1.7-4.2,.8-1.7-3.7M219.7,493.9l3.7,1.5 1.6,3.8-1.6,3.9-3.7,1.6-3.7-1.6-1.7-3.9 1.7-3.8 3.7-1.5M214.3,503.7l2,2.2-1.3,4.2-3.7,3.3-3.3,.8-3.3-3.3-.4-3.3 3.7-1.7 3.3-1.7 3-.5M126.4,575l2.5-.3 .9,2.8-2,1.7-1.7-1.7 .3-2.5M133.4,590.9l2.7,0 0,3.3-2.7,0 0-3.3M214,611l2-.5 .5,2-2,.5-.5-2M220,607l2.5-.5 .5,2-2.5,.5-.5-2M229,610l2.5-.5 .5,2.5-2.5,.5-.5-2.5" stroke-width="7.0"/>
<path d="M124.3,625.1l.4,6.8 3.4,3.3 5.9,1.7M163.3,681.9l-3.4,5-5,4.2-1.7,4.2-1.9,4.8-2.5,6.7-2.5,8.3-1.6,6.7-.9,4.1-2.4,21.9-.8,26.7-30.8,0 0-19.2-1.7-7.5-2.5-1.7-2.5,1.7 0,7.5 0,19.2-17.5,0 0-19.2-1.7-4.2 2.5-5 3.3-6.7-3.3-8.3 0-9.2-1.7-4.2-4.1-4.1-2.5-5.9-1.2-4.7 .5-4.3 .8-5.1 2.5-2.5 2.5-2.5 1.7-3.3 .8-3.8-3.3,.4-3.4,1.7-3.3,3.3-3.4,3.4-2.5,2.5-2.5-3.3 .4-3.4 .4-4.2-2.5-3.3-3.3-1.7-1.3-3.4-2.1-4.2 .9-2.5 2.5-2.5-2.5-1.7-3.4-2.5-5,.9-1.3-1.7 2.1-2.5 3.4-4.2-1.7-4.2 1.7-3.4 4.2-2.5 3.3,1 5.8-3.3 4.2-3.4 5,1.7 5-1.7 5-2.6 5-3.3 2.5-4.2 2.5-4.2 5-.8 2.4-1.6 4.2-3.4 3.3-3.3 3.3-4.2M86.6,663.5l3.3-2.1 3.4,2.9 1.7,4.2 1.6,5 3.4,3.4 3.4,3.3-.5,2.5-2.9,2.6-3.4,2.5-2.5,.8 2.5-4.2 .9-3.3-1.7-3.4-2.5-3.3-3.4-.9-1.6,.9 1.6-3.4-1.2-4.2-2.1-3.3M102.2,695.2l1.7,1.7-5.8,7.5-5,5.8-3.4,1.7-.8-2.5 5-5.8 5-5.9 3.3-2.5M72.8,667.7l2.1,0 .4,4.2-2.1,2.5-.9-3.4 .5-3.3M88.7,692l1.2-2.5 3.4,.8-.8,3.3-2.6,.9-1.2-2.5M56.6,579.2l2.1,3.3-.4,5.1-2.1,4.2-2.1,3.3 1.3,4.2-1.3,3.4-2.5,3.3-1.7,3.4-2.5,3.3-2.1,1.7-2.1-1.7-.8-3.3 .8-5.1 .9-4.2 2.5-3.3 .8-5 1.3-5.9 2.1-3.4 3.3-2.5 2.5-.8M65,623.2l4.2,1.3 2.5,3.3-.8,3.4-3.4,2.5-4.1-.9-1.3-3.3 1.3-4.2 1.6-2.1M82,603.5l4-.5-.5,3.5-2.5,.5-1-3.5M40.7,652.1l3,.9-.5,4.6-.8,4.2 .8,5 5.1,.4 .4,2.1-3,.8-.8,3.4-3.3,2.5-2.6,2.5-2.5,1.7 .9,2.1-3.4,.4-1.2,2.5-.5,3.4 .9,2.5-1.7,1.3-2.5-1.7-3.4,.4-4.2-.4-2.9-2.1-.4-3.4-.4-3.3 2.1-2.5 3.3-1.7 1.7,.8 3.3-2.5 2.6-2.5 3.3-3.4 2.5-3.3 1.7-3.4 0-2.5-2.5-2.5 .8-2.5 2.5-2.5 1.7-1.3M31.1,658.8l1.9,0 0,2-1.9,0 0-2M6.7,717.7l3.8-2 2.2,1.7-3,2.8-2.5,.5-.5-3M70.6,726.9l5.8-1.7-1.7,4.2-5.8,6.7-3.3,3.3-.9-3.3 3.4-5 2.5-4.2M50.4,666.8l2.5,0 0,2.1-2.5,0 0-2.1" stroke-width="7.5"/>
<path d="M508.6,515.2L515.4,518.0L513.0,522.7L508.3,526.4L509.3,532.2L504.5,536.0L499.4,540.0L493.0,542.7L487.5,535.6L484.1,533.5L478.2,535.4L473.4,534.3L464.7,534.2L462.8,529.4L467.9,523.6L466.6,519.2L467.8,514.5L474.5,512.0L478.2,508.8L483.4,507.7L488.0,506.4L493.7,499.4L501.2,497.4L505.8,501.6L508.0,506.6L507.3,511.9ZM514.1,540.0L515.4,542.1L516.1,544.7L513.7,546.0L510.9,546.3L508.6,546.0L506.7,545.2L505.0,547.2L502.2,548.9L500.7,546.8L498.8,545.7L497.2,544.1L497.3,541.9L496.0,540.0L497.6,538.1L500.4,537.4L500.3,535.5L500.7,533.2L502.4,531.6L504.5,529.3L507.2,531.2L508.7,533.7L511.0,533.6L511.7,535.5L513.7,536.4L514.8,538.1ZM325.4,578.0L326.1,581.2L324.9,584.1L321.9,584.8L320.6,586.7L319.2,588.9L317.3,591.6L314.4,595.2L311.7,592.7L310.7,587.9L309.2,585.8L308.3,583.2L307.3,580.8L305.1,578.0L306.0,574.8L307.4,572.1L306.8,567.4L309.8,566.2L312.2,564.8L314.8,565.6L316.8,569.1L318.9,568.1L322.3,566.1L324.5,568.2L326.2,571.1L326.6,574.6ZM381.0,560.0L380.6,562.3L381.1,565.3L379.5,566.9L378.4,569.1L376.5,569.4L374.6,566.9L373.3,567.8L371.4,569.7L369.6,569.1L367.7,567.9L367.3,565.0L368.6,561.9L367.5,560.0L367.4,557.7L368.5,555.9L369.0,553.6L370.2,552.1L371.5,550.4L372.9,546.7L375.1,547.6L376.4,551.1L377.6,552.7L377.7,555.3L379.8,555.7L381.8,557.3ZM120.5,636.0L120.8,639.4L119.4,642.5L116.7,644.8L112.7,645.0L110.0,645.8L107.6,648.0L104.6,646.9L102.2,645.3L98.4,646.2L96.0,644.2L91.3,643.1L90.5,639.5L93.8,636.0L95.6,633.6L95.5,630.9L97.7,629.2L97.7,624.9L100.9,623.7L104.5,624.8L107.7,622.7L111.7,622.2L113.6,625.8L115.2,628.5L114.5,631.9L115.8,633.8ZM205.6,601.5L208.1,602.7L205.3,604.1L202.1,605.1L201.1,606.7L197.1,607.4L193.2,607.6L189.9,607.4L187.5,606.8L183.7,607.4L177.9,608.4L175.6,607.3L175.2,605.9L175.0,604.6L179.7,603.2L179.3,602.1L179.3,600.8L182.9,600.1L185.7,599.2L188.5,597.8L192.5,597.3L197.0,596.6L199.8,597.6L198.9,599.8L201.6,600.0L203.8,600.6ZM333.4,563.0L332.7,564.4L333.2,566.2L333.0,568.2L331.1,568.2L330.2,569.9L328.9,571.6L327.2,571.1L325.7,569.9L325.1,567.9L325.3,565.8L323.2,565.9L321.0,565.0L321.6,563.0L321.3,561.1L322.6,559.7L323.6,558.5L324.4,556.9L325.9,556.7L327.5,557.9L328.7,556.7L330.1,556.7L331.9,556.5L334.2,556.6L333.7,559.5L332.9,561.6ZM568.6,120.0L567.9,121.0L568.1,122.2L567.3,122.9L565.8,122.6L565.1,122.8L564.4,123.4L563.5,124.1L562.1,124.9L561.3,124.0L561.3,122.4L560.7,121.7L560.3,120.9L560.4,120.0L560.2,119.1L560.8,118.3L561.4,117.7L561.3,116.1L562.3,115.4L563.4,115.5L564.5,115.9L565.0,117.3L565.8,117.4L567.2,117.1L567.6,118.1L568.0,119.0ZM248.3,598.0L250.2,599.0L249.4,599.9L247.8,600.4L247.3,601.6L245.9,602.4L244.0,602.7L242.0,602.6L240.9,601.1L240.2,600.3L238.4,600.3L236.6,599.9L235.5,599.1L234.2,598.0L236.0,597.0L236.8,596.1L236.9,594.9L239.5,595.1L241.0,594.9L242.3,594.6L243.7,594.8L245.8,593.8L248.4,593.5L249.0,595.0L249.0,596.2L248.8,597.2Z" fill="#6a22ad" stroke="none"/>
<path d="M825.8,14.4l-.3-.1-2.1,5.6-1.4,5.7 5.8,11.4 8.2,9.9 6.2,11.2M825.8,14.4l3.5-3.1 5-.7 3.1-3.6 3.9,1.4 3.8,1.5 .9-4.3M825.5,14.3l-12.5-5.8-10.9-8.7-13.1-4.5M792,7.2l9.8,6.5 9.8,6.4 10.4,5.5M790.1,35.6l-6.7-.1-6.1,3.4-6.7,.2-.1,.4 0,3.6 1.3,3.4 4.5,4.4 2,6.4 5.3,3.8M770.6,39.1l-12.4-11.3-11.5-12.1-10.5-13.1M763.2,45.8l-6.5-3.9-6.8-3.4-6.4-4.1M763.2,45.8l1.1,2.7-.1,1-3.4,2.5-4.4-1.9-4.8,.4-4.5-1.4 2.7,3.5 2.6,3.5 4.2,1.8 .4,1-.2,1.3-1.7,3.2-3.2,1.8-5.2,1.1-4.7-3.6-5.1,1M763.2,45.8l4.4-2.3 2.9-4M764.3,48.5l3.6-1.4 3.9-.6M764.2,49.5l2.8,4.8 3.2,4.4 4.8,3M760.8,52l.2,3-4.4,2.9M761,55l2.5,3.2 3.7,1.7M759.5,70.7l-.7-3.9 .3-3.8 3.9-.7 3.2-2.3-4.6-.9-4.6-.2M759.5,70.7l-4.7-1.4-2.9-4.1M737.2,81.2l-4.9,3.2-6,1.4-4.4,4-.7,.8-2.4,4.9-3.2,1.5-6.9,1.3-6.5-2.4-6.7-1-1.8-1.4-4.9,2.8-5.4,2-6-1-5.6-1.7-4.7-4.2 .2-4.8-.6-4.8-1.6-3.2-4.5-1.3-4.5-.8-4.7,.8-2.4,3.7-3.8,2.5-3.6-2.9-3.2-3.4-4.6-1.5-.7-2.6-3.5,.9-3.2-1.7-2.7,1.7-.7,3.2-4.5-.2-2.7,3.1-.3,4-4.2-3.5-4.9-2.2-.2-.2-1.9,.9-3.6,4.2-2.5,5 1.5,1.4 5,.5 2.2-2.9 1.5-4.6-2-4.3M737.2,81.2l2.7,3.6 4.5,.9-.5,8.9-1.5,8.7-3.5,8.4 1.5,1.4 6.6-5.2 5.5-6.5 7.1-4.7-1.2-5.3-3.3-4.4-5.4-.5-5.3-.8M803.3,57.8l-2.9,13.8-3.3,13.7-3.2,13.8M718.8,95.5l5.1,3.5 2.9,5.3 3,5.3 5-.7 4.1,2.8M729.8,109.6l-6,4.9-4.7,6.2-4.6,6.2-3.7-3.5-2.8-4.3-5.6,0-4.9-2.8 1.1-7.3-1.5-7.1-1.6-7M715.6,97l-3.5,7-.6,8-3.5,7.1M583.9,35.7l2.4,4.4 1.9,4.5 .4,5 3-4.6 5-2.3 3.5,.6 4.7-.5 3.6-3.3 4.4-1.3-1.3-2.6-4.4-.6-4-2.1-4.5,.2-3,4.4 1,5.2M583.9,35.7l2.8-4.3 2.8-4.2 3-4.2 4.7,4 1.4,6.1M592.5,23l.7-3.3-.6-3.3 3.8-3.2 4.3,1 3.6,2.3 3.1,3.8 2.3,4.2 2.5,4.1 .5,3.6-1.2,3.4M629.7,13.6l-2.2,3.4-3.6,2.5-.6,4.3-3.5,1.9-3.2,2.8-4.4,.1M629.7,13.6l-8.7-.7-8.4,.8-8.3,2.8M714,74.7l1.2-5 3-4.3 1.6-4.8-6-4.6-5-5.9-6-4.6-1.9,9.7-1.3,9.7-4.5,8.9 .2,1 1.2,.3 7.3,6.6 9.4,3.4 8,5.5M714,74.7l3.5,4.6 .4,6.2 4,4.3M714,74.7l-5.9-2-5.7,4-5.9-1.6M719.8,60.6l4.7,3.1 5.9-.6 5,2.4M756.8,60.2l2.3,2.8M684.8,132.2l-5.5-1.7-3.6-4.7-3.3,3.4-3.6,3-1.6,5.8 .5,6-2.6-3.4-3.1-3.1-.2-4.8 0,0-3.1-2.9-.2-4.2 1.5-3-.3-3.4-2.6-.4-3.3-4.8-5.4-2.2 .8-5.6-4.3-1.7-1.3-5.3-4.3-1.6-3.1,2.4-3.9-2.8-.2-.2-3.2-3.6-4.6-1.3-.2-.9-3.4-1.3 0,3.1-.9,3 3.8-.5 .7-3.4M684.8,132.2l2.5-5.5 3-5.2 4.6-4-4.7-3.2-4.6-3.5-5.7-1.2 2.6-5.4 .9-5.9M694.9,117.5l2.6-1.2M692.7,82.1l-8.7,1.7-8.6-3.7-8.7,1.7M692.7,82.1l.8,5.7 .2,5.7M692.7,82.1l2.4-3.2 .2-4.1M559,54.7l4.8,7 2,8.2 2.6,7.9 4.7,.1 1.8,2.6 2.6-2.6 3.7-.6 1,4.2 3.5,2.6-.1,5.4 4.3-2.2 4.8-.1 3.5,1.1M568.4,77.8l-2.7,4.3-3.3,3.9-1.6,4.9 5.2-.6 4.8,1 4.3,3 4.8,2.7 .3,.8 6-1.5 6,.7 5.9,1.5 1.8-4.2-.2-4.6M576.1,70.3l4.9,2.5 1.2-.4 3.4-4.4 3.2-4.6-.6-4.2 1.2-4.1 5.6,1.8 4.2-2 2.5-4.3 4.3-1.8 .1-.2-3.7-1.8-2.3-3.5M576.1,70.3l-3,3.2 0,4.4M576.1,70.3l-3.8-4.3-1.7-5.7-4.3-4 6.9-2.5 7.4,1.3 7-1.9 1.8,1.9M587.6,53.2l1-3.6M695.1,73.8l-8.8-1-7-6.3-8.8-.8-1.5,4.4-.4,4.9-3.5,3.6M670.5,65.7l-.1-.7-5.7-2.5-5.6-2.6-6.4-.2 .5-2.4 3.4-2.8 .9-4.3 3.8,4.8 5.9,1.8 4.4,3.8-1.2,4.4M695.7,22.4l-8.3,12.6-9.4,11.9-6.4,13.7M651.4,77.3l-3.8-3.2-.8-4.7-1.4-4.4-5-1.9-2.4,3.3-3.6,2.5-1.3,4.2M652.7,59.7l-4,2.2-3.3,3.1M669.8,116.4l4.5,3.7 1.4,5.7M669.8,116.4l2.6-3.5 4.4-.7 3.1-2.6M669.8,116.4l-3.4-1-2.6,3.1-4.1,.7M666.4,115.4l-2.9-4.6-.6-5.4-1.1-5.1-4.7,1-2.9,4.5-5,.4M661.8,100.3l.1-1.7-6.1-3.3-7.5,.5-5.7-4.3-1.2,3.3-2.1,2.8M667.1,91.4l-3.8,2.7-1.4,4.5M645.2,83.5l-.7,3.7-2,3.2-3-3.1-4.3-.3-1.9-3.1-3-2-4,.5-.3,1.4-2.3,3.6-4,1.5-3.6-1.5-.5,.5-1.4,3.9-3,2.5-3.9-.1-.3-.1-2.3-3.9M642.5,90.4l.1,1.1M668.8,132.2l-3.6-1.1-3.4,1.6M656.9,41l-1.3,4.7 1.9,4.5M656.9,41l-3.8,2.2-4.2,2-1.9,4.5-2.3,.4-1.2,4.4-2.3,4-.9,4.5-3.3-4.5-5.4-1.2-4.5,1.5-2.9-4.3-2.6-4.6-4.1-3.3 .1-1.3-2.3-2.2-1.5-2.9-.3-1.4 5.6-1.4 4.7-3.5 1.4-5.1-1.9-5M647,49.7l1.7,4.9 4.5,2.7M667.8,1.7l-10,13.4-13.1,10.7-9.3,14-3.4-3-3.7-2.1-4.5-.8M635.4,39.8l-.2,.8-2.8,4-4.9,.3-5-.8-4.9,1.2M635.2,40.6l1.8,4.6 3.8,2.4 3.9,2.5M536.1,82.9l-6.8,13.8-5.4,14.3-4.1,14.8M582.8,104l-1.1-2.9-1.5-2.8 0-.5M582.8,104l4.7,6.7 6.5,4.9 4.9,6.5 4.2,1.9 4.5-.5-6.3,9.2-6.4,9.2-7.1,8.7-3.5-3.2-.5-4.6-1.8-4-3.1-.8-3,4.7-2.7,4.9-4.8,3.2-.1-3.9-1.2-4-1.6-3.8-4.8-.1 3.6,3.3 1.7,4.5 2.1,4.2-1.8-.3-1.8-3.8-4.1-1.6-2.7-2.9 .2-5.1-1.2-2.9-1.8-2.6M582.8,104l-.7,5.2-2.6,4.2-3.4,3.8-3.9-.7-3.9-.4-2,1.8 3.9,3.1 1.8,4.7-3.2,2.5-2.3,3.2 2.3,3 2.4,1.3-.5,5.9-2.4,5.3M576.1,117.2l.6,1-1.8,3.6 .6,4-3.5-.1M576.7,118.2l6.6,1.6 6.6,2 6.7,1.2-1.8,1.1-4.2,5-4.1,5-4.5,4.7M598.9,122.1l-2.3,.9M575.5,125.8l1.5,1.2-.3,4.4-.3,4.4-5.2-.1M594.8,124.1l-5.8,1.8-6.1-.2-5.9,1.3M575.1,94.3l.3-4.6-1.5-4.6 1-4.6M581,72.8l.2,4.5M587,74l4.4-4 3.6,3-1,3.6 2.3,3-1.6,3.6 0,4M587,74l2.4,4.2 4.6-1.6M587,74l-4.8-1.6M589.4,78.2l-2.7,2.4-1,3.5M626.9,150.8l-1.3-4.6 .5-5.1-3.2-4.1-1.7-.8-2.8-3.8-1.8-4.4-2.8-3.8 2.5-3.7-1-7-3.8-6.3 .6-7.2-3.2-2.2-1.6-3.6M626.9,150.8l4.5,2.8 4.4,2.8 4.7,2.4 .4-5 2.4-4.2 3-3.8 3.3,.1 3,1.5 .8-.2 5.6,.2 4.6,3.8 5.6,.6M626.9,150.8l.5,3.5-.1,3.6-7.7,13.3-8.7,12.6-9.8,11.8M627.3,157.9l1.5,1.6 .4,6.2 4.1,5.3 .3,6.3-.7,15.7-2.7,15.5-4.7,15.1M640.5,158.8l1.2,4.3 3.5-.1 3.3,1.2-.2-6 4.1-5 .2-5.8M641.7,163.1l-2.4,1.5-3.4,3.5-1.7,4.3-.6,4.9M628.8,159.5l5.2,2.6 5.3,2.5M630.8,137.1l3.2-2.4 3.8-1.5 2.8-3 3.2-2.3 .8-3.9-2.8-4.9-.1-5.5-4.7-3.4-5.6-.7-4.5,4-5.4,2.4 .3-6.7 2.4-6.4-.1-6.7-.5-.6M630.8,137.1l5.8,1.7 4.1,4.8 5.6,2.2M630.8,137.1l-4,1.3-3.9-1.4M621.2,136.2l-10.1,15.7-10.9,15.1-12.8,13.7 .6-10-2.2-10.1 2-10M609.3,123.3l-2.2-7.4-1.2-7.8-4.2-6.7 1.1-4.7 4.2-2.6M609.3,123.3l4.5,.9M609.3,123.3l-1.7,.2M640.3,63l.1,.1M632.4,44.6l1.4,4.3-.9,4.2-1.3,4.2M591.4,70l-2.3-2.9-.3-3.7M661.8,132.7l-2.8,4.5-4.1,3.3-.9,3.3-.6,3.4M654.9,140.5l-2.2-4.4 .2-5-3.9-2-4.4,3.4-4-2.3M658.5,125.6l-2.3,3.2-3.3,2.3M657.1,118.8l-4.8,.3-3.2,3.9-4.5,1M648.4,111.8l-3.3,1.4-3.4,.4M636.2,100l-3,4.5-1.8,5M543,120.2l2.8,4.8 4.4,3.2 4.8,2.8-.1,.8-2.9,3.3-4.7-.3-3.3,2.5M578.4,100l1.8-1.7M578.4,100l-4.8,1.6-3.5,4.1-4.8,1.7-5.8-5.3-6.7-4.5-4.9-6.3M578.4,100l-3.2,5-2.2,5.8-4.5,4.2-.2,1.1M568.5,115l-3.1-2.9-.2-4.2-3.2,3.4-4.3,1.8 4,1.8 2.8,3.4-2.9,3.3-.2,4.8-3,3.2-3.4,1.4M565.3,107.4l-.1,.5M544.6,91.1l1.2,5.9-1.3,6.2 2.2,5.8-2.9,5.2-.8,6M546.7,109l5.7,1.5 5.3,2.6M585.6,89.5l-1.7,4.6-4,2.9M601.7,101.4l-3.6-2.9M621.5,115.9l-3.3,2.5-.6-7.2 2.3-7.2-.9-7.3 .8-.7M616.3,120.5l1.9-2.1M612.1,100l2.2-2.7 .6-3.5-.7-2M614.9,93.8l4.1,2.9M632.3,97.2l-4-1.1-4.2,0M576.4,135.8l2.5,2.2M621,63l-1.5,.5-2.5,5-1.8,5.3 3.3,3.2M621,63l-3.6-3.5-1.1-4.5-.6-4.7-2.3,2.2-2.7,1.6 1.3,4.3 2.1,3.9 5.4,1.2M621,63l.4,0 1,5.4 4,3.9M621.4,63l2.7-2.3 3-1.9M615.7,50.3l1.8-3.7M635.2,87l-3.5,2.2-4.1,0-.2-.1-1.4-5.3M632.1,97l-1.8-4.1-2.7-3.7M633.8,75.7l-.7,3.6-2.8,2.6M595,56.9l4.6,3.3 2.6,2.6 1.7,3.4-.2,2.9 1.4,3 1.7,2.9-.6,3.2M599.6,60.2l3.8-1.5 3.1-2.7 3.5-2 .7,.1M606,48.8l1.6,2.9 2.4,2.3M566.3,117.9l-1.8,.4M603.9,66.2l4.8-2.6 5.4-1.3M606.1,48.6l3.9-4.1 3.8-4.3M612.8,38.2l.7,.6M603.7,69.1l-4.7,1.2-4,2.7M565.5,139.1l3.3-4.7M560.7,139l-2.8-1.7M566.5,131.4l-4-1.2-4.1-.6M554.9,131.8l0,0M626.3,82.4l-1.4-1.3-5.2,1-3.6,3.9-.6-1.9M623,77.2l1.9,3.9M606.8,75l4-2 4.4,.8M596.3,79.6l3.9-1.1 4.1,.6M627.4,89.1l-3.3,2.1M619.7,88.9l1,1M616.1,86l0,1.4M615.6,87.9l-4.4,.5-4.3-1.1" stroke-width="2.5"/>
<path d="M478.4,209.1l1.1,2.1 1.9-.7-.8-7.1-1-7.1 1.6-7.2M478.4,209.1l.4-6.7-.2-6.8 .4-6.7M519.8,125.8l5,.2 4.8-1.2 4.9-.3-.8,5.4 2.7,5 .3,5.4-4.6-.3-4.4,1.1-1.2-4.8-4-2.8-3-3.5-.7-3.7M554.9,131.8l-3,3.7 0,5-3.1,3.6 3.2,1.2 1.5,3 1.7-3.2 2.5-2.7M591.7,324.3l-1.2-1.8-3.8-2.3-.1,0-2.5-2.2-1.4-3.1 2.3-5.7 5.4-3.1 .1,0 .9,3.8 2.5,3.1-4.8,2.4-2.4,4.8M591.7,324.3l.2,2.9-4.6,3.1-5.2-2.3-.2-1.7 1.1-4 3.6-2.1M591.9,327.2l1.3,2.9 1.9,2.5-3.7-.5-3.2,1.9-2.7,3.6 2.9,4.1-4.5,2.5-3.2,4.2-1.2-.5-1.6-3.4-1.1-3.6-1.4,0-4.4,2.2-1.8,4.5 .1,3.6-2.7,1.4-3.6-.2-.9-1.2-1.3-.9-5.6-.3-2,1.1-.6,1.8 .2,.7-3.4,4.4-4.2-1.4-3,4.6 2.3,5.3-2.1,2.6-1.7,.8-2.3,4.2 .4,3.3 2.6,2.2 2.6,0 1.6-5.6 4.7,.6 1.4,2-1.3,3.2 0,3.4-.2,0-3.8-.6-2.4-3M509.3,339.1l.1,0 .5-3.3 .7-3.2 2.6-2.7 3.8-.3 2.7,1.8 2.7,1.8-2.6,4.5-1.9,4.9 5.8,.9 .3-.1 4.3,2.1 4.6,1.1-3.8,3.7-2.1-.6-1.4-3.2-1.9-3M514.1,353.8l1.1-5.1 0-5.3 2.7-.8M630.2,354.8l-14.4-2.8-12.8-7.9-14.6-2.4M580.7,348.4l5.6,8.8 6.7,8 5.3,8.9M497.3,300.4l4.5-1.2 2.9-3.6-.2-5.4 6-.2 5.2-2.8 5.2,2 2.4,5.1-4.5,1.6-4.1,2.1-3.5,3.4 2.8,2.5 .2,3.7-4.5,.1-2.3,2.1 3.1,2.4-2.4,3-5.2-1.3 4.3-4.1-1.4-2.4-3.9,.4-3.9,.1 5.1-2.9 3.1-5.1 .3,.3 .5,4.1-1.2,3.1M497.3,300.4l-1.2,4.3 .1,4.4M497.3,300.4l-7.7-8.9-10-6.8-6.6-9.9M508.2,273.7l3,3.7 3.1,3.6 1.6,4.7-.2,1.5M508.2,273.7l3.3-3 3.4-3 2.5-3.9 3.5,4.1 4.1,3.6 3.9,.7 3.2-2.8 .1-4.6 2.9-3 3.5-.5 3.1,1.5 1.2-3.6-.1-3.7-.9-1.5 .7-1.5 4.2-1.3 1.6-2.8 .9-3-3.3,.7-3.4-.9-1.6-3.8-.3-4.1-3.8,2.7-4.2,1.9-4,2.1 .9-6.9 2.8-6.5 .4-7 4.8,2.8 4.9-.4 4.2-2.2 4.4,3.1 2.4,3.7 0,4.3 4.3-1.3 3.2-3.2 2.3-.1 2.2-5.5-3-3.5-2.4-3.8-2.2-4-.1,.2-.6,3.5-.2,3.5 .2,5.6 3.8,4.1M508.2,273.7l-9.1-.1-8.7,2.6-9,.9 7.5,4.8 8.9,2.2 6.7,6.1M517.4,263.8l-.4-1.5 2.5-4.4-2.3-4.9 1.3-4.5 3.1-1.5 3.4,.8 1.7-1.3 4.8,.3 4.8-1.6 4.7,1.8 1.6,5.5M590.5,322.5l4.6-3.8 5.2-2.8-3.2-1.5-3.2-1.4M518.5,248.5l-5.9-6-6.9-4.8-6.2-5.7M479.5,211.2l-6.1,12.5-2.3,13.8-6.1,12.4M534.4,193.3l.8,4.1 2.5,3.5 1.2,3.9M534.4,193.3l-4.2,.3-4.2-1.7-4.2,1.8 3.7,6.3 2.4,6.8 2.2,6.9M534.4,193.3l3.2-4.1 4.3,.5 3.3,2.8 .2,.8 6.8,1.4 4.6,5.2 6,2.9M537.6,189.2l-.1-.5 2-5.2 4.4-2.3 4.8,1.6 4.5-.8-4.3,2.3-1.1,4.6-2.6,3.6M521.8,193.7l-.7-.5-7.7,.7-7,3-6.8,3.4M521.1,193.2l.5-4.4-1-3.6 2.3-4.3 2.5-4.1-.7-1-5.4-1.1-4.2-3.4-4.4-3 5.3-2.8 4.9-3.3 3.9,3 .9,4.9-1,5.7M521.6,188.8l4.7-1.5 4-2.9 1.1-3.1 .7-3.3-2.3-1.2-4.4,0M530.3,184.4l3.4,2.6 3.8,1.7M535.9,124.1l3-2.9 4.1-1M544,137.3l1.9,3.3 .6,3.8 2.3-.3M535.9,124.1l.6,4.9 3.6,3.4 1.8,4.4 2.1,.5M535.9,124.1l-1.4,.4M541.9,136.8l-3,4.9 2.1,5.4-2,4-2.8,2.9-4,.7M536.7,140.3l2.2,1.4M541,147.1l2.8-1.3 2.7-1.4M514.1,353.8l1.6,3.1 2.1,2.8 1.7,1.2 2.7-1.3 3.4-4.4 1.4-5.5M588.2,334l-.9-3.7M585.5,337.6l-2.2-.7-5.1,1.8-1.4,2.2M583.3,336.9l-1-3.8-.6-3.9-.9,.5-3.3,.3-3.2,.9-.1,.1 1.6,3.4 .6,.5 1.8,3.8M581.7,329.2l.4-1.2M509.3,339.1l-3.7-1.9-4.2-.1-4-1M515.2,343.4l-2.3-2.9-3.5-1.4M580.8,329.7l-1.9,2.9-2.5,2.3M583.5,372.6l-5.6-6-1.3-8.4-4.9-6.4-2.4-.6M571.7,351.8l4.1-1.6 3.7-2.3M574.3,330.9l0-3.7-2-1 2.2-3.1-.2-3.8 .4,0 2.1,2.6 1.1,3.2-3.6,2.1M581.9,326.3l-4-1.2M568.6,324.4l-1.1-5.3 .7-.7 1.2-.2 2-4.9 3-4.3-5.4-.9-4.6-3 1.3,4.4 0,4.8 2.5,4.1M568.6,324.4l1.7,1.8 2,0M568.6,324.4l-3.4,3-4.5-.4-4.4,.5 4.6-2.7 2-5 4.6-.7M565.2,327.4l1.6,1.8-1.2,3-.1,3.2 2.4,.1 2.8-3.8-1.2-3-2.7,.5M570.3,326.2l-.8,2.5M555.3,328.1l-5.2-1.2-.9-5 1.5-4.6 .9-4.7 .6-1.6-4.8-1.4-4.9,.9-1.8-3.7 .5-1.9 .1-.1 3.2-.9 3.3-.8 2.9,3 3.2,2.6-1.7,2.3M555.3,328.1l3.6,3.6 1.8,4.7-.2,1.4 3,4.2-1.5,4.5 .1,4.7M555.3,328.1l1-.6M565.5,335.4l-4.8,1M515.9,285.7l4.6-3.8 1.6-5.6 2.9-4.8M504.7,295.6l1.5,4.3M523.9,294.6l1.1,1.7 5,.8 5.1-.1 2.8-.8 2.9-3.5 4.5-1.3 1.6-3.4 1.5-.9 3.3,1.7 3.5,1.4 1.4,4.4 2.6,3.6 3.7,2.9 4.9-2.9 5.5-2 3.6-4.8 2.1-3.8-3.9-.7-4.7,1.7-4.8-2.5-4.7,.7-3.5,.6-2.2,2.8M523.9,294.6l-.6-.3M523.9,294.6l3.7-3.5 3.9-3.3 1.9-4.9 4.1,2.9 5.4-.8 4,3M533.4,282.9l-.3-5-2.5-4.3 5.4,1.2 5-2.2 5.2-1-.5-4.2 2.9-3 .6-4.8-1.7-2.3 0,0-4.7-1.8M530.6,273.6l-1.7-1.4M506.5,300.2l4.7,1.2M481.4,210.5l7.8,2.5 6,6.1 7.6,2.8M502,170.4l2.5-3.7 2.6-3.6 1.5-4.3-.1-3.6 2-2.9 1.1-1 3.6,1.7-3.1,3.1-3.5,2.7M502,170.4l1,0 4-.4 3.7-1.7M502,170.4l-.1,0-4.2-3.2-1.5-4.9-2.3-4.4 3.9-2.1 2.7-3.6 4.6-1.7 1.9,.1 3.5,1.7M501.9,170.4l-3.4,6.4-2.9,6.7-4.7,5.7M503,170.4l5.5,5.4 5.1,5.8 7,3.6M536.7,177.5l-4.6,.5M536.7,177.5l2.2,2.6 .6,3.4M536.7,177.5l1.5-5 4-3.4M544.8,154.2l4.3-3 4.9-1.6-.5-1.3M544.8,154.2l-3-1.3-2.8-1.8M544.8,154.2l1.8,3.6 2.7,2.9 2.6-5.2 3.5-4.6 0,0 5.5-.2 5.4,0M549.3,160.7l.9,4.2 .6,4.3M545.4,193.3l-1.9,5.2-2.4,5M621.2,219.3l-16.8,2.3-17.1-2.6-16.9,2.8-4.9,3M570.4,221.8l-5-1.7-3-4.5-4-3.1-.4,.5-.1,.5M558.4,212.5l2.6-4.5 1.6-5M516.7,152.9l.1-.2 .6-4.5-2.6-3.7-2.8,1.7-3.1-.4-1.5,2.7-2.3,2M516.7,152.9l-1.5,.1M516.7,152.9l2.9,4.2 1.5,4.9 5.4-1.9 5-2.9M521.1,162l-.2,.2M525.7,170.1l4.7,.2 2.6-3.1 2.6-3.1M530.4,170.3l-.9,3.2 .3,3.3M530.4,152l-4.6-.4-4.1-2.1-4.9,3.2M530.4,152l-2-5.2-.7-5.7M521.7,149.5l-3.1-3.4-2.1-4.1-1.7,2.5M516.5,142l.7-4.1-.1-4.3 2.4-3.6M510.6,332.6l-.9-3.9-1.4-3.9 4.4-4 5.5-1.8 2.5,2.6-1.5,4.1-2.2,3.9M488.4,319.8l6.6,1.8 7,.3 6.3,2.9M517.8,310.4l-3.6-2.8M517.8,310.4l1.4,.5 2.5-2.7 3.1-2 2.2,3 3.6,.6 3.1-2.7 2.9-3-.4-3.6-1.1-3.5M517.8,310.4l-3.6,1.2-3.7,.6M519.2,310.9l-1.6,3.9 .6,4.2M508.1,315.2l3.5,1.9 1.1,3.7M555.1,308.4l-1.2,.3M555.1,308.4l4.4-1.5 2.9-3.7 .5-2.1M555.1,308.4l1,4.9 3.9,2.9 2.9,3.6M562.4,303.2l2,1.9M547.4,340.1l-.5,1.3-4.4,2.6-.8,3.5-.5,.6-.1,3.6-3.4,1.2-.5-.3-2.8-.5-.3,.1-3,5.1-2.3,.6 .5-3.3 1.1-3.1-1.3-1.2M547.4,340.1l2.9,2.6 3.9,0-2.3,2.1-1,3 2.3,3.3M547.4,340.1l-2.7-5.1-1-5.6-1.7-.2-1.1-.9-.5-.5 1.8-5.8-.9-6-1.4-2.6-3-2.3-3.9,.4-.9,.1-1.5-1.8M543.7,329.4l3.7,0 2.7-2.5M554.2,342.7l.8-.1-.1,3.7 .3,3.7M555,342.6l1.6-.6 2.8,3.8 1.4,4.5M556.6,342l3.9-4.2M567.9,335.5l.8,.6 2.4,3.3-3.5,4.6-4.1-2M568.7,336.1l3.3-1.6 3.8-.1M570.7,331.7l3.5-.7M575.4,340.9l-4.3-1.5M554,149.6l1.4,1.3M560.3,174.2l-1.9-7.7-2-7.7-1-7.9M525,247.8l4.2,3.7 4.1,3.7 4.1-2.1 4.5,.9M533.3,255.2l.6,3.4 1.2,3.2M526.7,246.5l2-2.5M527.9,217.5l3.7,2 1.2,4.1M541,247l1.6-1.8M537.6,226.4l3.1,3.7 1.5,4.6M581.1,314.4l1.6,.5M581.1,314.4l-4,1.4-2.4,3.5M581.1,314.4l-1.2-3.3-2.9-2.2 2.3-5.5 .1-4.2-2.6-3.6 .1-4.2M577,308.9l-2.6,.1M569.4,318.2l4.9,1.1M611.1,277.1l-10.3,1.2-10,2.7-9.4,4.5-4.2-4.7-5.7-3.3-3.4-5.5 1.2-3-1.4-3 4.5-3.5 3.8-4.3-5-2.8-4.8-3-4.2-.6 .8-4.8 .3-4.9 1.6-.6 3.4,4.2-2,3 .1,3.7M611.1,277.1l-7.3,9.3-8,8.9-5.3,10.8M581.4,285.5l-2.4,2.1M579.3,303.4l5.9-.3 5.2,3M524.8,306.2l2.2-4.9-2-5M509.7,307.7l-2.7-3.4M507.4,309.8l-.2,0M561.2,276.5l4.2-1.1 2.7-3.4M561.2,276.5l-5-1.2-5.1,.6 3.3-4.2 5.6-2.2 2.2-5.3 5.7,1.8M561.2,276.5l1.4,3.7 3.6,3.2 5.6-.3 3.3,3.8M562.6,280.2l-1.2,3.2-.5,3.4M551.1,275.9l-.5,.1-.5-.7 3.4-3.5-1.6-5.6 3.7-3.4-2.2-1-.5-2-3.7-.2M550.6,276l-1.2,5.6-1,5.5M550.1,275.3l-3.9-3.7M547.8,303.1l.3-6.2-2.8-5.5M564.9,231.3l-1.6-1M564.9,231.3l-.5,4.8 1.1,4.7-.6,.7M564.9,231.3l11.5-.3 11.3,3.4 11.6-1-10.9,3.9-11.5,1.4-11.4,2.1M562.2,264.2l-1.6-1.5-2.1-4.7 .5-5.1-1.6-.5-.7,0-1.2,.8-2.2,2.6-.4,4M555.6,262.8l5-.1M511.5,148.1l.5-1.9M511.5,148.1l.1,3.2M511.5,148.1l-4.5,2.5M505.1,143l-.8-7.7-1.9-7.5-2.2-7.5M505.1,143l-2,4.7-2.6,4.5M505.1,143l3.8,2.8M528.7,337.2l-1-3.2-3.3-2.3-2,1.5M528.7,337.2l-2.7,4.8-2,1.4M528.7,337.2l4.2-1.1 4.2,.9 1.4-4.6 3.5-3.2M537.1,337l-.8,3.8 3.1,1.6 3.1,1.6M526,342l4.9-1.9 4.9,1.6-.1,2.4-2.7,2.4-.1,.1M535.8,341.7l.5-.9M540.9,328.3l-3.8,3.3-5,.5-4.4,1.9M526,324l3.1-.1 2.9-1.1-.6-5.6 .7-5.6M526,324l-2.1,3.6 .5,4.1M526,324l-5.3-2.4M540.4,327.8l-5.1-.9-3.3-4.1M550.9,347.8l-.5,0-3.5,2.8-.5,1.4-1.9,1.3-3.4-1.6M550.4,347.8l-3.4-2.9-1,1.8-4.3,.8M547,344.9l-.1-3.5M532.6,363.4l-2.6-2.5-3.2-1.7 2-1.3M532.6,363.4l.3,3.8-2,3.3-3.7,1.6 .7,1 4.9,2.4 5.6-1.4M532.6,363.4l.8-.6 1.5-4.5 2.2-.7 .6-4.7M533.4,362.8l4-.5 2.3-1.8 2.5,.7M532.9,367.2l3.8,.5 4,2.2M537.4,362.3l-.7,5.4M551.6,312.6l-4.7,3-5.6,.4M567.6,344l1.6,3.6M558,213l-6.3,1.6-6.1-1.9-6.1-1 4.3,1.4 1.4,4.3 3,2.7 3.7-4.8 5.9-1.6M541.7,262.8l2.2,1.9 1.5-3.9 2.1-3.5M543.9,264.7l1.8,2.7M565.7,402.6l2-8-1.4-8.5 2.3-7.9 .1-.3 5.9-1.3 5-3.5-5.1-2.1-2.9-4.5-3.6-3.7 .7-5.3-2.1-4.9M565.7,402.6l-4.3-3.4-4.6-2.6-5.7-.3 0-.1-.3-.2-2.2-4.3-4.2-2.5-3-3.6 4.4-1.3 4.4-1.1M551.1,396.3l-2.9,3.1-3.4,2.5M522.2,359.6l4.6-.4M526.5,371.7l.7,.4M546.9,350.6l-.9-3.9M535.7,344.1l0,.1-.4,4.4 1.9,4M535.7,344.2l3.2,1.2 2.3,2.7M568.6,378.2l-6.1,1.3-4.3,5-6,1.5-1.8-2.8M552.2,386l1,5.3-2.1,4.9M550.7,366.1l2.7-1.3-1.8-3.6-2.2-3.2M550.7,366.1l-.4,4.3 0,4.2M550.7,366.1l-3.1-.2-3.1,.6M542.4,369.1l3.2,4.9M560.2,372.4l-3.2-3.3-1.4-4.4 2.2-2.7 5.1,1 5.1-.2M560.2,372.4l-4.6,1.4-3.9,2.8M560.2,372.4l3.1,4.5 5.4,1M555.6,364.7l-2.2,.1M546.7,223.8l1.5-3.7M553.4,261.8l-4.8,2.6M539.9,313.4l2.6-2.9M533,311.5l3.7-2.7 4-2M536.6,304.1l4.6,.8M537.9,296.2l2.3,4.1 1.1,4.5M546.8,251.2l1.2,1.1 .2,4.4-.7,.6M548,252.3l3.6,1.6 3.9-.7M549.3,245.4l.8-.4 .3-4.5 2.5-3.7 2.7,2 2.8,2 4.9,1.3M550.1,245l3.5,3.5 3.1,3.9M559,252.9l3.2-1.1M557.4,252.4l-.2-5.8 1.2-5.8M534,380.4l.6,.5 4.8,.9 2-2.2M534.9,358.3l-3.8-1M546.4,352l3,1 3.2-.1M558.4,357.9l-2.8-2.1-2.8-2.2M558.4,357.9l-.6,4.1M558.4,357.9l1.9-3.1 2.7-2.4M539.3,390.4l4.1,1.3 3.8,2 3.6,2.3M534,380.4l-1.2-4.9M557,220.7l-2.5,3.6-3.4,2.6M553.3,255.8l-5.1,.9M533,346.5l1.4,5.6M534.1,352.2l-3.7-.7M545.2,356.6l-.7-3.3M537.1,357.6l2.6,2.9M534.7,385.7l4.4-.3 .3-.4 0-3.2M538.9,389.5l.2-4.1M541.4,385.6l-2-.6" stroke-width="2.75"/>
<path d="M526.5,495.8l-2.1-1.4-3.2,2.1-2.9,2.5-1.6,3.9 1.3,4.1-2.3,.4-.8,1.3-1.3,5.5-2.5,.7-1.4,1.2-.3,1.4 0,.4-.5,1.7-2,1.1-4.4-1.5-.6,.4 1.2,2.8 2.2,.9 1.3-1.1 .3-1.5M526.5,495.8l0,2.8-4,3.1-1,5-2.3,.8-1.2-.5M526.5,495.8l7.6-1.6 7.5-1.3 7.8,1.1-6,2.8-6.2,2.6-5,4.5-1.4,4.3-2.7-.1-.6-.6-2.9-.9-3.1,.1M532.2,503.9l-4-1.3-.7,4.9M526.5,498.6l1.7,4M409.5,420.6l-7.3,6.8-9.4,4.2-6.7,7.6 2.3,5.4 6.4,1.9 2.4,5.3M386.1,439.2l-.9-.3-.8,.4M381.3,423.5l2.1,4.9-.4,5.6 2.2,4.9M555.6,502.5l-6.7,4.1-7.4,2-7.7,1.5-3-1.9M555.6,502.5l-6.2,4.1-5.7,4.8-5,5.6-.8,3.1-1.8,1.5-5.7-.7-.3,4.7 .2,.4 3.3-1.3 3.2,1.2-.7-4.3M538.7,517l-3.4-.9-3.3-1-3.3,2.4-2.6-2.3-4.2-.7-1.8-3.3-.9-3.7M533.8,510.1l-1.8,5M434.6,389.1l8.2,1.2 7.9,2.3 7.6,3.3-6,.6-5.2,3.3-5.8,1.1-1,3 3.4,2.9-.5,4.8 2.5,3.3M434.6,389.1l3.1,3.4 2,4.1 1.6,4.3M400.7,393.4l11.5,4.1 9.6,7.8 11.3,4.3 2.9-4.6 4.3-1.1M433.1,409.6l-1.9,5.4-.7,5.4 1.2,5.5M400.3,390.7l12,4.6 12,4.4 11.7,5.3M384.4,439.3l-5.7-1.7-5.1-3.2M432.9,506.7l-1.2-3.3-1.6-1.1-5.6-1M441.7,518.2l.1-.2 3.9,1.4 4,.3 .3-.3 3.6,2.1 4,1 .6,.8 0,.1-1.6,1.8-.4,3.6-1.8,3.3 4.9,1.4 .4,.3 .1,2.7 3,1.9 2.9-1.1 2,2.7-.2,1.6-1.2,1.1-.2,.5 .3,.9 .1,1.1-1,2.9-2,.8-1.3-1.1M454.1,541.9l4.1-2.3 1.6-3.1M446.6,529.5l.7,1.2M450.5,534.6l3.6-2.5-2.6-4.5-1.4-.2-2.8-3.3-.1-.3-2.2,2.4-3.2,.7M537.9,520.1l3.4,2.5-.9,2.9-1.5,2.7-.3-.1-3.2,2.1-.1,4.7 5.4,7.6 5.4,7.7 6.5,6.7M524.4,494.4l-1.2-2.8 1.1-4.4 2.8-3.6 3.5-.6 1.1-5.1-.6-5.2 .7-.2 1.4-3.6 3-2.4-2.5-3.6-5.4-2.7-4.1,.9 2.9,4.8-.3,5.6-1.4,1.3-3.4,.2-4.6,3.7 .6,3.8-.2,.2-3.9,.1-3.7-1.1-1.2-2.9-3.9-1.8-4.1,1.5-.1-2-3.9-4.1-4.4-3.5-1.7,3.1-4.8,2.6-2.3-1.9 .1-5.4-.2-5.5 4.9,.5 1.2-5.3 3.2-4.5-3.8-3-4.7,.5-4.4,2.8-3.3,3.9 .1,2.7 3.7,.2 3.1,2.2M523.2,491.6l-3.9-1-3.3-2.2 .3-4 1.5-3.7M518.3,499l-3.4-2-3.9-.2-1.6,3.2-4.5,1.2-1.1,1.7 .4,5.3 1.8,.5 1,1.5-.2,3.6-3.1,1.2-.5-.6-.4-3.5 1.3-2.6-3.6-.4-3.5-.5-1.1,1.6-.1,.4 3.6,2.7 3.4-1.2M511.9,489.6l-3.3-4.3-.8-.1-3.5,0-3.1,1.5 2.1,3.1 1.9,3.1 5-.1 .8,4M511.9,489.6l4.1-1.2M511.9,489.6l-1.7,3.2M527.1,483.6l-2.9-3.1-.4-4 1.6-3.7M524.2,480.5l-3.1-.2-3.1,.2M495.9,368.3l3.3-1.4 2.6-2.5-2-4.5-2-4.5-4.3-3.6 4.4-.2 3.3-3 3.4-2.5 2.4-3.5 2.3-3.5M495.9,368.3l-.7,2.3 3.7,3.9 2.6,4.6 4.9,1 1.9,5.2-.6,5.1-3.1,2.7 .5,4.7 2.3,4.2 4.1,3 1.5,2.1-1.7,2.9-1.9,2.7-4.1-3.3-3-4.2-2.1-.5-3.6,3.3 .8,2.7 3.3,3 4.7-1.6 3.5,2.3 .5-1.7M495.9,368.3l-4.5-4.1-3.9-4.6-3.5-4.9M495.2,370.6l-3.4,2.4-3.7,1.6-4.1,.8 .5,5.1-1.1,4.9 3.5,1.5 2.4,3.3 2.6,3-3.2,4.9-3.7,4.8-4.8,.3-4.8-.1-.2,4.5 3.5,3.1 .8,4.1-.7,2.3-3.7-2.6-4.2-.1-4.3-.1 0-.2-.8-6.4-.3-6.4 1.3-6.4 5.6,2.7 3,5.5M465.8,393.1l5.5-3.4 6.1-2.1 6-2.2M501.2,348.6l5.7,1.1 3.6,4.6 3.6-.5M510.5,354.3l-1.7,.8-5.1,3.5-1.6,5.8 3.1,1.8 2.3,4.7 1.6,4.9-2.7,4.3M508.8,355.1l-5.6-1.3-5.4,1.6M502.1,364.4l-.3,0M481,573.3l-.3,3.5 2.1,2.7 2.1,2.1 4.5-.6 3.8,3.7 4.5-1M472.9,562.2l-5.6-1.6M483.1,531.7l2-3.6 1.3,.1 2.7,2.8 .1,1.5-1.2,4.5-.3,.3-3,4.8 .1,.1 3.9,.5 2.7,2.9 2.4-.1 2.6-5.2-4.4-3.4-4,.1M483.1,531.7l2.7,2.5 1.9,3.1M483.1,531.7l-2.6,.2-.4-1 2.7-4.3 2.3,1.5M480.5,531.9l-1.1,2.3-1.1-.1-3.4,1.8-.7,2.3 2.1,4.8 1.6,1.5 3-1.1 3-1.2 .8-.1M479.4,534.2l1,4.7 3.5,3.3M477.3,528.8l-.4-.1-1.6,.7-.4-.2-2.9-.1-1.4,4-1.4,.7-2.6-4.1-.3-.1-1.6-2.5-3.8-.7 .3,3.8-1.9,3.3M477.3,528.8l5.1-2.7-1.5-5.6 0-.1 3.2-2.2 3.8-.2 1.4,3.4 4.3,1.7 2.7-.5 1.9-1.3 .5-1.7 3.2,0M477.3,528.8l2.8,2.1M482.4,526.1l.4,.5M538.6,528.1l-1.8-2.2M528.9,518.6l-3.1,2.3-3,2.3-5.3-2.5 .5-2.4-2-2.2-2.4-1.9M528.9,518.6l-.2-1.1M528.9,518.6l1.5,2.3M515.4,541.5l-5.8,1.5-1.3-2.3-2.5,1.5 1.3,2.1-4.4,1.5-1.3-.4 0,.1 1.5,4.9 4.6-.1 .6-.8 1.4-.7-1-3.6-1.4-.9M515.4,541.5l2.4,2.1 2.4,2.2-3.1,4.1-.2,3.9-1.7,3-2.6,2.4-5.2,.2-1.6,3.1 .8,3.4 3.6,4.2-4-.6-3.7,1.8-.2,5.1-1.3,4.8-1.2,4.9M515.4,541.5l-2.4-4.3-2.6-.4-1.9-1.9-.2-1.9-2.4-1.5-1.8,.4-2.3-3.5 3-.1 .9,.6 .2,2.6M513,537.2l.9-1.3-.4-5.1-3.8,.1-1.4,2.1M520.2,545.8l.1-.1 3.9-.2 4,1.1 4,.6-1.4-4.2 1.4-4.8-2.9-3.9 .6-.4 5.4,1M520.3,545.7l-.9-4.1 2.5-4.1-1.4-4.1 3.6-.9 .2-1.2 2.9-2.2 3.4-1.2 .9,1.7 3.9,.6M520.5,533.4l-.5-.2-1.2-2.7-2-2.3 5.2-1.2 1.1-2.9-.3-.9M520,533.2l-2.7,2-3.4,.7M517.1,549.9l-3.7-1.7-3.9,.6M508.5,545.2l1.1-2.2M530.6,483l9.6,3.1 9.9,2.1 9.4,3.9M508.6,485.3l1.6-5.6M531.1,472.7l-4.3-1.2M517.8,359.7l-4.5,1.6-3.9,2.7-4.2,2.2M483.1,439.1l-4.4,3.7-5.6,1.2 .8,3.8 1.1,3.8 1.8,3.1M483.1,439.1l1.9,4.9-.5,4M483.1,439.1l.4-1.4-2.9-5 1.1-4.1 .8-4.3 4.2,.4 5.1,2.2 4.7,3.1 0,0 1.3-4.8-2.8-4.4 .3-4.6-3,.1-3.4,3.8-2.2,4.6M483.5,437.7l5.4-1 5.3-1.4 2.3-5.3M485,444l5.5-.3 5.4-.8 1.4,2.4-1.3,3.3-3,1.9M495.9,442.9l-.4-3.9-1.3-3.7M465.6,443.6l-3.9-1.5-4.1,.1-2.1,2.5 3.1,2.9 2.2,3.7-2.8,4.3 4.6,1.5 2.5,4.1 .6-.1 1.8-.6 2.5-1.5-5.3-2.9-3.6-4.8-.3,0M465.6,443.6l-.4,3.5-2.2,2.8-1.9,1.4M465.6,443.6l4.6-2.5-.2-1 1.4-4-3.4-2.9-2.3-3.8-1.7,.1-1.6,3-.4,3.3 3.2,3.7 4.8,.6M470.2,441.1l2.9,2.9M463,449.9l4.1-.2 3.7,2.9 4.2-1M459.1,436.7l-1.3-3.8-1-4 .1,0 1.2-3.3-1.5-3.4-2.7,1.6-3,.5-4.2-2.3-4.6-1M459.1,436.7l2.9-.9M459.1,436.7l-1,1-4.9-2.3-4.3,3.5-1.2,3.5 .7,3.6-4.1,3.6-1-.4-3.3-6.6-4.5-5.8-4.5-5.7 5.3,2.1 6,.3 4.9,3.2 1.7,2.2M458.1,437.7l-.5,4.5M448.7,431.6l-3.3-2.6-1.9-3.9-3.1-2.8M448.7,431.6l3.8,.8 2.8-3.4 1.5-.1M448.7,431.6l-1.5,5.1M452.5,432.4l.7,3M450.9,424.3l1.2,3.2 3.2,1.5M455.5,444.7l-3.5,.7-3.6,.6M516.8,528.2l-.9-.6-1-2.8-3-.1-2.2,1.1-.1,.1-.7,1.6 .8,3.4M515.9,527.6l-2.4,3.2M482.7,508l-1.2-.3-1.2,3.4-2,2.9-5.2-.2-1.2-1.9-.9-.5-2.8,.9-1.8,2.5 0,3 4.6,3.3-4.8,3-1.5,3M482.7,508l3.8-4.3-.6-4 .1-.1 4-.8 .3,.4-.5,4.2 1,.9 3-.9 3.2,2.8 0,1.2M482.7,508l3.7,2.9 2.8,4.8 2.4-.5 5.5,2.4 2.5-3.1 3.6-.1M486.4,510.9l1.4-3.1 3-1.5 5.1,2.7M486.5,503.7l3.3-.3M490.8,506.3l0-2M493,499.7l-2.7-.5M493,499.7l1.1,2.1-.3,1.6M493,499.7l2.1-1.7 .5-2.1-1.5-1.5 .9-5.1 2.8-.7 1.9-2.2-1.6-3.4 0-3.8-3.7-.1-.1-5.2-3.4-3.9M495.1,498l2.8,2.8 .1,0 .9,2.2-1.9,3.2M494.1,501.8l3.8-1M490,497.3l0,1.5M490,497.3l1.2-2.3 2.9-.6M490,497.3l-4.8-2.7-.3,2.1-4.2,1.7 .1-5-1.7-.7 .1-1.6 2.3-3.3 2.6,5-3.3,.6M485.2,494.6l-.4-1.8-.7,0M484.8,492.8l2.8-2.2 .8-2-.6-.8-.3-3.6 2.5-1.9 1.7-2.7-3.9,0-2.9-2.5-2.7,2 3,2.2 2.3,2.9M491.2,495l-3.6-4.4M470.5,571.2l2.1-4 4.6-1.4 2.6-3.5M430.1,480.2l-1.6,3 0,1.7-.1,.1-5.2,.2-.8-4.2 .6-.2 2.8,1 2.7,1.4M430.1,480.2l1.9-.6 2.7,1.7 .6,3.3-.2,.5-3.3-1.2-3.3,1M430.1,480.2l-4.5-2.5-2.6,3.1M425.6,477.7l-.1-5.1-.4-1.3-4.5,.3-2.6,3.9-2.8,3.7 3.2,2.4 4-.6M432,479.6l.2-2.6 3.4-4.9 .9,0 1.4,1.3 .2,3.9-2.3,3.3-1.1,.7M432.2,477l-3.8-1.6-2.9-2.8M469.6,497.6l1,3.4 1.2,3.3-1.8,1.2-5.9-1.1-1.1,.2-1.3,.9 .1,.9 .4,.7 1,2.9-.4,3.1-2.3,2.3-2.9-.3 1,3.7-1,3.7M469.6,497.6l.5-2.2 .1,0 2.6-2.6 1.6-3.4 3.3,3.7 1.4-.4M469.6,497.6l-3.1,3.1-2.4,3.7M463,504.6l-1.2-4.1 1.4-4.1-2.6,.1-3.6-2.4-2.2-5.3-2.2,1.1-1.6,1.3 .9,4.1-.8,2.7 2.4,2.5 1.6-1.9-3.2-3.3M466.4,493.1l2.2-2.6 1.9-2.7 3.8,.5 .4-.5 3.4,1 2.9-3.6-2.2-5.1 3.4-1M466.4,493.1l-.6-.1-2.5-4.9-4.5-3.3 .6-3.5 4.5-2.5 3.4,.1 5.7-1.5 1.6,.4 2.6,1.9 1.6,.4M466.4,493.1l3.7,2.3M465.8,493l-2.6,3.4M461.7,505.5l-1.3-.4-.5-3.4-2.3-2.5-1.4-.9-1.1,.3M460.4,505.1l-5.6,.6-.6-.4-1.2-2.7-.6-.3-5.3-.1-1.3-1-2.3,1.2 .2,2.7-.8,3.8 0,0-3.7-.9-3.8,0-1.2-1-1.3-.3M454.8,505.7l-.8,4.2-5,1.3-.1-.2 .3-4-2.9,1.8-3.4,.1M455.5,514.2l-5.3,2.7-.2,2.5M455.5,514.2l-1.5-4.3M455.5,514.2l1.3,.2 .8,.7M456.8,514.4l3.8-3.2 1.2-4.8M450.2,516.9l-1.1-1.4-3.2,0-3-1.3 .3-4.6-.3-.7M449.1,515.5l-.1-4.3M495.6,531.1l4.1,.5 .5,1.5 2.1,1 1.8-2.2M495.6,531.1l-.5,1 2.7,3.3-.1,.3 .4,1.6-.4,1.7-.9,1.1 4.7,3.2 .2,.7 3.7-1.9 .4,.1M495.6,531.1l-.7-2.4 5.8-.2 .3-.3-.3-1.6-1-.9-1.5-4.4M494.9,528.7l-.6-.7 .2-.4 1.4-1.1 3.8-.8M495.1,532.1l-.1,0-1.4,3.7-1.6,1.1M495,532.1l-5.8,.4M492.6,528.1l-3.4-5 .1-1.7M492.6,528.1l1.7-.1M492.6,528.1l-3.5,2.9M499.7,531.6l1-3.1M497.8,535.4l2.4-2.3M497.7,535.7l-4.1,.1M489.2,523.1l-2.8,5.1M479,506.1l.9,.2 1.3-5.3 4.7-1.3M479,506.1l-2.6,4-4.5,1.8M479,506.1l-3.9-2.3 .1-4.1-3.6-3.9-1.4-.4M475.1,503.8l-3.3,.5M471,511.4l-1.5-2.7 .5-3.2M478.3,514l1.6,3.1 1,3.3M473.1,513.8l.3,3.8-1.8,3.4-.5,.1-.1,0M471.6,521l.9,.3 .2,4.2 2.2,3.7M477.9,521.5l-1.9,3.4 .9,3.8M477.9,521.5l-5.4-.2M477.9,521.5l3-1M479.9,506.3l1.6,1.4M462.2,507.1l3,2.6 3,2.6M470.1,527.8l-3.5,1.9M470.1,527.8l1.9,1.3M470.1,527.8l-.1-3.4 1.1-3.3M475.3,529.4l-.1,1.5-1.6,2.3 1.3,2.7M478.3,534.1l-3.1-3.2M435.6,472.1l-3.8-2.3 2-2.5 0-3.3-4.8-2.4-1.4,.1-1.6,1.6 .9,3.2-.6,3.3 5.5,0M425.1,471.3l1.2-1.5M437.8,460l-1.3,3.2 2.6,4.3-2.6,4.6M437.8,460l4.3-2.1 3.5-3.3 1.9,2.3-3.2,4.3-.6,5.5-4.6,.8M437.8,460l-4.8-2-4,3.6M433,458l-.4-3.1-1.1-3-3.2-.8-1.8,3 1.9,3.6-.8,4M445.6,454.6l-1.3-5M431.5,451.9l4.3,.4 4.1-.3 3.4-2.8M436.5,463.2l-2.7,.8M428.3,451.1l-5.5-6.4-3.7-7.3-2.5-8M426.5,454.1l-5.4,.8-4.7,2.7-.7-.4-3,2.2-1.4,3.5-5.3-.5-5.2,0-3.9-3.9-.3-5.4M416.4,457.6l2.5,3.3-.9,3.8-.2,3.9-5.9-.2-1.5,1.6-.4,4.1-.3,4.2-.2-.1M426,463.3l-3.9-.1-3.2-2.3M408.8,444.5l2.1,4.3 2.1,4.4 2.7,4M420.6,471.6l-2.8-3M463.4,552.9l.1-4M442.3,521.7l.3-.3-.9-3.2M442.6,521.4l5,1.3 1.3-1.3 3.4,4.2-.8,2M447.6,522.7l-.4,1.1M498.1,537.3l5.1,0 .3-1 5-1.4M497.7,539l4.2,1M502.3,534.1l1.2,2.2M508.1,549.5l-2.2-2.7-3.2-1M508.6,539l1.8-2.2M508.6,539l-.3,1.7M508.6,539l-4,.1-1.3-1M504.6,539.1l.8,3M525.8,533.8l-1.7-1.3M525.8,533.8l-2.6,5.7 1,6M525.8,533.8l3.5,.5M524.3,531l-2.3-4M524.3,531l2-4.8-3.2-2.1M524.3,531l0,.3M526.3,526.2l3.8-.6M530.6,527.9l-.3-1.9M531.5,529.6l-1.6,4.3M531.8,472.5l5.8,2.6 4.8,4.4 5.8,2.7-2.7-6.1-3.8-5.2-5.1-4.3 .6-.3 2.8-4.7-.5-2.8 3.4,.5 2.7-1.5 1.8-2.5-3.7-4 .4-1.7-.1-2-.7-2.1-4.7-1.3-3.5-3.3 .4-1 3.2-2.5 2.3-3.2 3.5,1.8 .6,3.4 .1,3.4-1.9,2.7M536.2,466.5l.4,.1M551.7,470.4l-1.6-4.4-3.9-2.5-.6-5.7M551.7,470.4l-4.6-3.4-5.7-1.1 .6-3 1.3-.8-.4-2.8M541.4,465.9l-4.2,.4M471.4,436.1l2-1.9-.8-5.2 3-3.3 2.2-2.4 3.1-.7-2.1-4.9-4.1,3.6-5.5,.6 .7,2.9 5.7,.9M473.4,434.2l3.5-1 3.7-.5M469.1,427.6l-3.1,1.5-.3,.3M469.1,427.6l3.5,1.4M469.1,427.6l.8-2.8M447.5,456.9l3.8,1.7 1.8,3.6 .8,5.3-1.4,3.6-1.5,3.7 1.3,1.4-3.5,3.4-1.7,4.6-1.1,0-.9,2.3 2,2.7 2.2,2.4-1.5,.7 .9,3.7-1.4,3.5 2.1-.2 3,3M451.3,458.6l3.6-.9 3.1-2.1M476.9,457.4l-.1,0-.4,3.5 2.1,4.6 1,5-2.5,3.6-2.4,3.7M476.8,457.4l-3.7-.4-3.1,2M468.2,468.2l-2.9,1.2-1.8,1.8 1,3.8-.6,3.8M468.2,468.2l4,1.1 1.8,3.9-1,4.2M468.2,468.2l-1.3-3.7 .6-4M472.2,469.3l1-4.7 3.2-3.7M497.4,410.7l-2.1,5.4 0,.1M495.3,416.1l5.5,2.2 5.7,1.7-.2,4.3-1.2,4.1 3.7,2.9-.3,3.4 1.2,3.2 5.5,1.2 4.9,2.9 .3-4.4 2.9-3.2-.1-1.1-4.1-.8-3.8-2.6-4.5,.9 3.8-3.4 4.7-2.4 2.6-4.6 1.3,2.9 2.3,2.2-1.7,3.5-.3,3.9-.3,.4M508.9,414.4l.2,1 4,2 4.6,.4 4.1,1.9 2.5-5 3.4-4.4-3.2-1.3-1.7-3 1.3-4.6 3.9-3.1-.6-3-3,.8-1-3.1 1.1-2.7 .9,.1 2.7,4.2-.7,.7M506.5,420l2.6-4.6M505.1,428.4l-4.6-.9-4,2.5M464.7,422l-2.2-.9 .2-3.3 1.8-1.7 1.6-.6 .5-1.2M464.7,422l-2.1,3.5-2-1-.1-3.1 2-.3M464.7,422l1.8-.4 .5-.4-.9-5.7M466.5,421.6l-1,3.7 .5,3.8M462.6,425.5l1.4,4-3.4-1.6-3.7,1M464,429.5l0,0M467,421.2l2.2,.7M460.6,424.5l-2.5,1.1M460.5,421.4l-1.5-1 1-2.1-.6-2.9-3.1-3.3 5.1,1.2 5.2,.8M456.6,422.2l.8-1.6-2.7-4.3-3.6-3.6M459,420.4l-1.6,.2M462.7,417.8l-2.7,.5M484.9,496.7l1.1,2.9M480.7,498.4l-.2,.2-2.7-.5-1-4 .9-1M481.2,501l-.7-2.4M494.5,527.6l-.9-4.5M489.2,515.7l-1.3,2.3M528.1,508.1l-1.9,3.3-.1,3.8M517.5,520.7l-.2,.1-3.4-3-4.5,.1M517.3,520.8l-2.4,4M501,528.2l.8,.2M500.4,497.4l-2-1.7 1-3.6 4.8,1.4-2.5,3.9 3.2,3.8M500.4,497.4l-2.4,3.4M500.4,497.4l1.3,0M498.9,503l4.9-.1M504.2,508.2l-.1,.1M481,573.3l2.9-1.6 1.2-3.2M502.9,558l-4-3.4 4-4.2M502.9,558l.3,.1 2.2,.1 2,1.2M502.9,558l-4.8,2.5-3.1,4.6 1.1-3.9-1.2-3.8-2.5-.1-1.8-4.9 .1-.1 1.2-3.3-.5-3.4M495,565.1l-.6,1.4 3.2,1.3 3.4-.2 .4,.2 1.1,3.5M503.2,558.1l-2.3,4.5 .1,5M498.9,554.6l-.3-.1-.6-.9-3.9,.6-3.4-1.9M498.6,554.5l-3.7,2.9M505.4,558.2l-.4-4.4 2.5-3.5M477.7,555.3l.9-4.8-1.3-4.7-4.5,1.5-3.1-1.9-3.3-1.3M477.7,555.3l-3.3-2-3.9,.3-1.2-3.5-1.5,.1-3.3,2.9 2.9,3-.1,4.5M470.5,553.6l-3.1,2.5M486.5,555.1l2.3,.8 1.8-3.5-3.4,0-1.6-1.4-1.3-4.3 .5-4.5M486.5,555.1l-4,2.1-3.4,3.2M486.5,555.1l.7-2.7M485.6,551l-2.9,3.8-4.3,2M477.9,544.5l-.6,1.3M448.2,474.4l2.8,.4M448.2,474.4l-1.4-4.4-3.1-3.3M448.2,474.4l-4.3,1.8-1.5,3.3 .1,2.3-1.4,2.4-.4,.3-5.4,.1M443.9,476.2l-2.9-1.7-3.1-1.1M435.8,480.6l3.2-1.2 3.4,.1M457.6,499.2l3-2.7M456.2,498.3l.8-4.2M458.8,484.8l-4,4M475.2,499.7l2.6-1.6M471.6,495.8l5.2-1.7M466.4,514.8l-3.6-1.7M466.4,517.8l-3.1,.9-1.6,2.4-3.5,2.2M463.3,518.7l-2.8-3.3M466.2,524.1l-4.5-3M470.6,533.1l3,.1M469.2,533.8l0,.1-3.4,1.6-3.9-2.1-2.2,.4M469.2,533.9l1.1,2.8-2.6,3.3M470.3,536.7l3.9,1.5M465.8,535.5l-.1,1.8M467.5,541.6l4.7-.9 4.1,2.3M411.3,462.9l.6,5.5M400.8,462.4l.1,3.5-.6,1.4M400.9,465.9l4.8,1.8 4.7,2.3M415,479.3l3.5,2.8 .1,4.7 2.4,3.4-.1,.5-.6,.9 2.4,2.4 2.5,2.3-.7,5M415,479.3l.2-.1M415,479.3l-3.7,.4M411.3,479.7l-1.6-1.4M437.7,514.3l-1-3.2-1.3-3.1M441.8,518l-.1-2.8 1.2-1M441.7,515.2l-4-.9M462.2,547.8l0-.2 3.9-4.4 0,0M462.2,547.6l-1.5-2.8 .6-.9-1-2.5 3.5-.8 2.5,2.1M460.7,544.8l-3.3,.8M466.1,543.2l-4.8,.7M461.9,533.4l4.4-3.8M449.7,519.7l-.8,1.7M460.9,526.4l-2.7-3M450.1,527.4l-2.8,3.3M447.3,524.1l-.7,5.4M521.8,419.7l.1,.7M508.8,431.3l2-.5M527.7,410.3l0-.1 2.3-4.8 2.1-4.9 4.4-1.2 4.5,.9 3.8,1.7-1.4,3.8-3.7,1.6-2.9,3.1-3.9,1.3-5.2-1.5M534.4,425.8l-1.1,4.1-2.1,3.6-3.7-1.7-4,1.1M534.4,425.8l-4.4-1.7-4.5,1.4M534.4,425.8l3.6-1.2 2.5,2.9 3.2-.2 3-.5 1.5-.6 1.2-1 11.3,2.6 11.4,1.8 11.1,3.2M538,424.6l.2-2.8 4.2-4.2 5.6-2.1 .4-.7-3.5-4-1.5-5.1M538.2,421.8l-3.1-4.8-2.2-5.3M497.1,547.4l.6,3.1 .3,3.1M497.1,547.4l-3.3-1.9M497.1,547.4l4.3-1.9M496.4,540.3l.4-.2M501.7,544l-.3,1.4M512.5,471.7l-.9,3.1-2.6,2M512.5,471.7l3.2,1.8 1.7,3.2M512.5,471.7l.1-5-1-4.7-1.6-.4-4,3-4.3,1.7-4.7-2.4-4.3,2-2-3.9 5.8-1.5 4.4-3.9 3.5,2.4 4,.9 1.6,1.7M512.6,466.7l4.2,3.9 5.2,2.4M511.6,462l2.7-2 3.2-1 .9-4.6-1.1-4.7-6.2-1.1-4-4.8-1.1,.9-4.2,1.6-4.5-1M517.5,459l3.2,.5 3.9-3.8 3.5-4.1 1.3-5.5 2-.4 1.8-3.1-4.2-1.7-3.8-2.2-1.9-4.3M524.2,461.1l-3.5-1.6M517.3,449.7l2.6-2.3 1-3.4 4.4,.5 4.1,1.6M520.9,444l-.8-2M507.1,443.8l1.7-2.8 .9-3.1M506,444.7l.8,5 .2,5.2 1.4,5M486.9,386.9l5.2-2 3.6-4.9 5.8-.9M479.5,470.5l4.3,.2M462.8,462.9l-.6,.2-3.3,4.9 4,2.4 .6,.8M462.8,462.9l2.3-1.7M462.8,462.9l-1.1,3.7 1.2,3.8M465.7,461.1l.3,4.2-.7,4.1M453.1,462.2l4.7-1.2 4.4,2.1M453.9,467.5l5,.5M459.4,481.3l-2.6-3.9-4.5-1.2M491.9,393.2l1.1,.6 3.3-.4 3,1.5 1.3,4.8-.4,5M493,393.8l-1.2,4.3 2.2,4.3-1.3,4.2 3.9,1.4M492.7,406.6l-3.1,.9-2.5,4.5-4.3,0-3.3,2.8M489.6,407.5l-1.7-2.9-2.9-1.7M459.4,415.4l5.1,.7M491.7,487.9l1.4-4.1 .4-4.3 .9-.4M491.7,487.9l3.3,1.4M491.7,487.9l-3.3,.7M498.4,495.7l-2.8,.2M496.3,522.6l-.4,3.9M518,518.3l3.9-3.8M511.6,504.9l-2.2-4.9M511.6,504.9l4.1,2.5M511.6,504.9l-2.9,1.8-2.7,2M514.9,508.7l-5.5,2.2 1.7,4M509.4,510.9l-2.4-.7M491.6,515.2l2.1-2.9 2.1-2.9M467.3,478.9l2.2,4.2 1,4.7M489.7,558.9l-1.5,4.9-3.8,3.3M489.7,558.9l-.9-3M489.7,558.9l2.7-1.6M490.6,552.4l0,0M512.6,559.2l3.1,6.1 2.6,6.2 3.6,5.7M501.4,567.8l5.2-1.9M447.1,484.2l3.2,2.4 2.3,3.3M442.5,481.8l3.5,2.4M474.4,489.4l-.1-1.1M477.2,479.7l-1.6,4-.9,4.1M445.1,486.5l-1.1,.3-1,2.1 3.8,3.5-.3,.2-2.8,3.5-1.8,.4-1.3-2.3 2.5-1.5 3.4-.1M441.1,484.2l2.9,2.6M440.7,484.5l-.1,3.4 .5,.9-.9,1.8 2.9,2.1M440.6,487.9l-4.3,0 1.4,3.3-1.9,1.4-4.8-1.6 4-4.4 1.3,1.3M435.1,485.1l-.1,1.5M456.6,525.2l-4.3,.4M454.4,532.1l-.3,0M460.3,541.4l-2.1-1.8M463.8,540.6l-1-2.2M542,462.9l-2-1.3M539,458.4l.5,.4M539,458.4l-2.9,2-2.4,2.5M539,458.4l-1.1-5.2 2.9-.8 2.9-1.1M537.9,453.2l-3.2-1.1-1.5-3.2-1.8-3.2M528.3,460.2l3-4.2 3.4-3.9M533.2,442.6l1.9-1.7M531.2,433.5l3.4,2.4 .9,4M540.5,427.5l-.8,3.4 1.3,3.3M559.2,415.2l-5.4,.4-5.4-.8M559.2,415.2l-4.7,1.9-2.6,3.9-2.5,4.1 0,.1M549.4,425.1l.1-4.9-1.5-4.7M507.8,485.2l-3.4-4.3-3.8-3.8-2.5,2.1M501,476.5l-.4,.6M519.5,360.9l.5,3.9-2.3,3.6-1.7,4.1-4.1,2.1-2.8,1.2M520,364.8l3.7,3.1 2.8,3.8-4.7,1.8-2.7,4.3-3.4-1.8-3.8-1.4M490.7,462l-2.1-1.7M500.9,456.6l-3.2-3.5-1.7-4.5M492.3,416.3l-2.3-2.5-2.9-1.8M480.9,422.6l1.6,1.7M478.8,417.7l0-.6M497.8,488.6l1.6,3.5M499.7,486.4l1.5,.3M505.2,492.9l-1,.6M500.7,526.6l1.6-1.3 .8-2.9M504.8,528.3l.6-2.9 .1-.1-.2-2M505.4,525.4l-3.1-.1M497.1,517.6l1.6,2M508.9,527.5l-3.2,1.4M505.5,525.3l4.1,.6M506.8,513.8l2.9,2.3M503.7,515l0,2-1.2,2.2M503.7,517l5.7,.5M511.9,524.7l-3-5.1M509.7,525.8l-3.1-3.6M499.6,514.5l-.2-2.4M472.8,547.3l-2.9,2-.6,.8M469.9,549.3l-3.4-4.1M467.8,550.2l-2.3-2.1M464.5,553.1l-1.1-.2M441.1,488.8l1.9,.1M437.7,491.2l1.1,.3 1,2.4 .8,.3M438.8,491.5l1.4-.9M451,491.2l-1.7,.4M446.8,492.4l1-.1M478.1,488.8l1.1,2.3M481,485.2l.6,.7 3.4,0 2.8,1.9M481.5,487.8l.1-1.9M435.8,492.6l.4,3.4 1.5,0 2.8,2.6 1.4-2.1M436.2,496l-1.6,1.4-.3,2-2.6,4M431,491l-.8,.3-1.5-1-3.9-1-3.9,1.4M430.2,493.4l-1.4,2.1 1.9,3.2-.6,3.6M430.2,493.4l0-2.1M430.2,493.4l4.4,4M439.8,493.9l-2.1,2.1M428.7,490.3l-.3-5.3M423.2,485.2l-2.2,5M546.2,463.5l-2.9-1.4M553.8,456.8l-1.1-4.4-2.2-4 1.4-2.2 6.7-1.8 7,2.9 6.6-2.6-6.9-.6-6.7-1.5-6.8-1.4-2.2,1.4-.8-.4-.5-5.4 2.5,.6 4.9-.2 4-2.8 4.7-.8-5.6-2.3-6,.6-3.3-2-1.3-3.7M553.8,456.8l-2.9-2-3.5,.5M544.1,449.6l3-1.8 3.4,.6M549.6,433.1l-2.3,3.1 1,.6M549.6,433.1l-2.4-2.7-.5-3.6M549.6,433.1l3.2-1.2M544.5,436l2.8,.2M493.5,479.5l-1.8,.1M484.9,477.1l1.2-4.5M506,464.6l-2.6,4.9-2.5,5M492.7,465.9l-.1,1M519.1,377.8l1.3,4 2.7,1.3 .2,1.4-.7,3.6 1.9,2.2M520.4,381.8l-3.6,.4-2.5,2.6 3.3,1.7 2.9,2.3 2.1-.7M514.3,384.8l-3,1.2-3-.7M523.1,383.1l3.1-2.3 1.7-3.6 0-4.1M526.2,380.8l3.8,2.3 4-2.7M523.3,384.5l2.9,.9 2.7,1.5-.1,.9-3.2,2.5-.2,.1M528.9,386.9l1.6-1.6 1.4,.6 .9,4.3-.7,1.4 0,.2 0,.3-.2,.7-2,1.6 1,4.4 1,1 .2,.7M530,383.1l.5,2.2M520.5,388.8l-2.1,2.7 1.7,2.4 3.3-.9M510.9,392.4l1.4,2.1-.8,5.2 0,5.3M510.9,392.4l3.6-1.7 3.9,.8M510.9,392.4l-3.2-2M517.2,398.3l2.7-2.5 .2-1.9M517.2,398.3l-2.3-2-2.6-1.8M517.2,398.3l1.7,3.2 .3,3.6 3.6,.9M519.2,405.1l-3.2,.9-3,1.1M499.3,394.9l5.3-1.8M507.4,402l-2.4,1.8-2.7,1.4M534,396.1l-2.1-3.3M534,396.1l-2.1,3.7M534,396.1l3.1,.3-.3-3.8-4.7-.5M537.1,396.4l3.9,3.8M536.8,392.6l2.5-2.2-.4-.9-3.9-.7-2.2,1.4M443.2,509.6l5.7,1.4M454.2,505.3l-4.6,1.2-2.5-4.3M449.6,506.5l-.3,.3-5.6-1.7M449.2,507l.1-.2M428.8,495.5l-3.6,.8M550.3,444.7l1.6,1.5M550.3,444.7l-3,1.8-3.3,1.1M550.3,444.7l-.7-2.1M545.2,442.8l3.6-.6M524.1,401.4l-.3-4.4 .6-.9M523.8,397l-3.9-1.2M534.6,380.9l-.2,4.6 .3,.2M531.9,385.9l2.5-.4M535,388.8l-.3-3.1M445.9,500.9l1.4-1.4M445.9,500.9l-.1,.3M445.9,500.9l-2.2-4.8M443.5,502.4l-2-.7-4.6,1.4-2.7,3.9M441.5,501.7l-.9-1.8-3.2,.3-3.1-.8M440.6,499.9l-.1-1.3M449.4,499.3l1.7-1.3M453.5,500.5l-.5,2.1M550.8,437.4l1,3.8M528.8,387.8l3.3,3.8M525.6,390.3l3.1,1.2 3.4,.3M529.9,394.4l-1.8,.2M530.9,398.8l-2.9-.5" stroke-width="3.0"/>
<path d="M320.3,527.3l-4.6,3.9-5.7,2.1-3.8-1.4-3.3-2.2-.6-3.4-1.5-3.1 .7-5.8-1.6-5.6-2.4,7.7-6.4,5.1-3.7,6.9-4.3-3.4-2.1-5.1 .5,4.1 .8,4.1-3.4,3.9 2.4,.7 3.4-2.5 3,.1 1.5,1.5 4.3-3.4 3-4.9 4.3-3.4M320.3,527.3l-1,4.3-2.3,4 .9,4.6 5.8,1.1 5.7,1.7 0,1.3-2,4.6-2.3,4.4-.5,.6-3.6,1.2-2.7,4.8-1.8,1.1-2.8-2.9-3.9-1.3-.4-3.4-.3-.5-4.7,1-.3,4.3 1,1.3 1.8-.1 2.9-2.6M317.9,540.2l-3,.9-.6,3.2 .4,3.3 2.2,4.4 3.9,3-5.7-.8-5.7-.8M310,533.3l.4,4.4 3.5,2.9-5.6,.8-4.8,2.7 3.3,2.9 2.8,3.3-.5,2.6M313.9,540.6l1,.5M303.5,544.1l-5.3-.6-1.2,.8-1.6,2.9 3.6,4.5 5.4,2.2M298.2,543.5l3.5-4-.9-5.4 2.1-4.4M384.4,439.3l-1.6,3.1-3.2,1.2-.6,1.5-5.1,0-4.6,2.3-.2,0-1.1-4.5-.8-1-11.7-8.8-13-6.9-10.8-10.1M341.8,554.3l.7,.6 .1,.3-1,4.1-1.8,4-5.3-1.7-.2-.4-.2,.1-3.7,2.8-2.4,4 .3,5-3.4-.7-2.3-2.6-5,.8-1.3-1.9-3.9,2.6 .2,.9-2.2,3.5-1.4,.7-1.5-3.5-2.8-1.3-2.4,1-.7-.1-.7-3.1 2.6-4.4 4.1,1.9 .2,0 3-3.4-3.9-4.1M341.8,554.3l-.8-.1-4.3,2.6-2.4,4.4M341.8,554.3l-.4-3.8 2.4-3 2.9-1.8 3.5,.1 3.4,4 4.3-1.8 .8-5.4 4.2-1.9 0-.6 1.3-1.1 3.9,3 4.9,.4 .7,1.2-.5,2.9 1.1,1.5 .5,.2 .7,3.4-3,.1-.2-1.1 2-2.6M343.8,547.5l-2.2-4.6 4.1-3.8 1.8,2.6 2.8,1.2 3.2-2.7 3.5-2.3 3.3,.2 2.6,2M341,554.2l-3.6-3.7-5.3-1.5-2.7-4.7M341.6,542.9l-5-2.3-5.6,.1 2.2-3.7-.8-4.2 4.7,.4 4.7-.8 2.3-4.2 2-4.4-1.4-2.7-5.7-1-4.8,4.3-5.6-.6 3.3-4.2 3.2-4.3 3.6,1.6 3.7-1.4 2.7,4.2-.4,1.4M331,540.7l-1.6,2.3M332.4,532.8l-2.9-4-1.2-4.8M253.4,535.3l5.4,2.3 4.4,3.9-.5,3.4-.8,3.2 3.6,1.5 3.9,.6 .5,5.4 2.2,.2 2.1,3.3 3,.2 .6-4.5-2.6-3-3.1,4M280,543.5l.4-.7 2.7-1.1 .9-2.7-2.7-3.2M280,543.5l-2.9,1.2-3,.3-3-2.9-2.5-3.3 2.6-2.6 5.3,.1 2-1.2 .4,0M280,543.5l1.6,5.6 2.4,1.7-2.8,3.1 .8,3.2 2.4,.7 .8-4 2.9-2.8-4.1-.2M281.6,549.1l-3.3,.5-3.3,.9 .2,1.3M275,550.5l-1.2-1.4-4.4,1.1M274.1,545l-.3,4.1M251.2,506.7l4.4,11.3 5.1,10.9 6.9,10.1-4.4,2.5M267.6,539l1-.2M256.9,498.8l3.6,12.6 4.6,12.2 6.2,11.6 .8-5.1 3.9-3.2 2.6-3.9-.3,4 1.8,4.1-1.6,4M271.3,535.2l-.1,1M276.5,536.3l2.5,2.9 1.4,3.6M284,539l3.3-.7 2-2.5-.1-.9M289.3,535.8l4.7,3.5 3,5M283.1,541.7l4.6,.8 3.7,2.1 2.6,3.9-.6,1.1 .2,1.4 3.9,2.5 1,4.6 0,.2 2,5.2 2.7,.9 .3,.6M294,548.5l1.4-1.3M373.6,434.4l-.3,1.3-2.7,3.4-3.4,2.8M369.7,425.4l3.7,3.7 .2,5.3M341.8,532.4l4.1,3 3.5-.3 2.8-2-2.4-4.9-3.4-4.2-.3-.2M345.7,539.1l.2-3.7M350.3,542.9l-.1,2.9M325.1,553.3l3.7,1.6 3.8,1.5 4.1,.4M355.6,489.5l4.3-1.3 4.5-.5-1.7-3.7-.6-4.3-2.8-3.3 4.6,1.2 4.4,1.7 3.7,3.2 1,5.4 1.2,.2 2.9-3.4 2.8-3.6 4.4-1.8 .1-.6 3.7-2.9 4.8-.2 .4,.5-1,4.2 2.1,3.6 2.2,1.3 3.1,.2 1.1-2.1-.8-3-1.1-2.8-5.6-1.4M355.6,489.5l-5.7-5.3-6-5.1-7.5-2.6 6.4,8.4 6.4,8.5 6.4,8.5-.5,2.9-1.1,1.5-6.7-2.3-4.5-5.7-6.2-3M355.6,489.5l1,3.8 3.4,2.2 4.3-2.3 4.1-2.9 1.5,.1 3.1-2.5M360,495.5l0,.8 2.5,2.5 3.2,1.4 4.8-1.5-1.2-4.1 .6-4.2M360,496.3l-2.5,2.6-1.9,3M335.1,515.3l.7-2.8 2.1-1.4 3.7,.3 .4,.4 2.8-2.5 3.7,.2 4.9,.4 .1,.4-2.7,4.7 .9,4 2.8,3.1 1.3,.2 3.1-1 2.1-2.8-.2-3.5-3.8-2.1-3.5-2.6M341.6,505.2l3.8,1.6 3.1,2.7M341.6,505.2l.4,3.1-.4,3.1M341.6,505.2l-3-4-1.6-4.7-.1,4.9 .9,4.8 .1,4.9M425.8,535.6l1.1,4.2-.9,4.3-2.8-1.4-2.5-4.6-1-.9-3.1-.3-1.8,2.5-2.2,2.1 .3,.4 .3,3.2 1.6,2.9-1.9,2.3-1.5,2.6-3.8-2.2-3.9-2.1-.3-.3-.8-2.6-3.3,2.5-3.3,2.5-2.7-1-.7,.2 .7,4.1-4.4,0-1.2-1.5-2.1,1.6 .3,3.6-.2,.2-1.6-.4-2-1.5-.4-1.9-.7-.8-2.2,0-.3-.1-1,.1-3.2,2.6-2-3.9 .2-.3M425.8,535.6l.5-.9 3.7-1.5 3.8,1.4-3.2,3.9-1,4.3 .7,4.9-4.3-3.6M425.8,535.6l-5.1,2.5M426.3,534.7l-3.4-3.8 .1-3.3-1.3-3.1-2.7,2.3-3.3,1.3-3.9-4.6-5.9-1.6 1.5-3-.4-3.4 3.7-1.2 3.9,.3 0-4.1 1.5-3.7 3.1-.8 3.2,1.1 2.6,2.2 .3,.3 3.7,.9 3.9-3.8M424.5,501.3l-.1,0-.9,1 1.1,3.4 .4,3.6M422.9,530.9l-1.1,3.4-2.1,2.9M428.3,524.9l2.7-2.6 3-2.2 1.9,.9 2.4-2.4 3.4-.4M462.2,547.8l-4.7,2.2-.2,.5-5.5-.4-3.6-4.1 2.4-2.1 2.3-2.1 1.2,.1M428.3,524.9l3.3,2.4 1.8,3.6 3-2.1 2.1-3.1-1.6-3.5-1-1.2M428.3,524.9l-3.1-1.5-3.3,.7-.5-1.9 1.1-4.3 5.2-1 1.3-4.1 0-2.3M421.9,524.1l-.2,.4M433.4,530.9l.8,3.3 3,.8 3.2-.1-.1-3.9 1.6-3.7 4.7,2.2M447.3,530.7l.5,3.3 2.7,.6M441.8,526.9l.1,.4M433.8,534.6l.4-.4M415.7,528.1l-1.4,2.3-1.5,.6-3.2,4.3-4.3,3.3 .3,1.6-3.2,4.8-2.2-.4-1.9,.6-3,1.7-2,2.8M416.6,536.9l-.2-3.5-2.1-3M423.5,570.6l1-1.3 4.2,2.5 4.8-1.1 1-2.9 1.3-2.8 4.3,.9 1.5,1.4-.6,4.6-.5,4.5-4.2-2-2.8-3.7M423.5,570.6l-.1,.5 1.3,3.5 2,3.1-3.1,3.1 .3,1.3 5.7-.1 .1-2.4-3-1.9M423.5,570.6l-5-1.4-5,1.2-.9-1 3.4-2.7 1.2-3.9 1.8-3.6 4.2,.1 2.5-2.6 2.3-2.6-3-3.4-4.7-.4-3.7-2.2-1.8-.1M413.5,570.4l-.5,3.3-.8,1.3-2,1.5 0,.2-3.9,2.7-2.2-2.7-1.5,3.1 3.7,2.4 0-2.8M423.4,571.1l-.6,1 0,3.9-1.7,3.4 2.5,1.4M422.8,572.1l-1.9,3.3-3.7,1.2-.2,2.5-1.3,.8-.4,.6-.9,.1-3.6-2.7-.5-.7-1.7,4.4 2.5-.7-.3-3M417.2,576.6l-4.2-2.9M430.6,552.5l4.1,2.2 5-2.8 5.6,1.2 .4,.5 .2,.8 1.2,4.8-1.9,4.5-2.9-.7-4.7-3.1-2.8-4.9-.1-.3M430.6,552.5l-.1-4.3 4.4-1.8 3.9-2.6 4-2.5 3.4,1.6 1.5,3.4 .5-.3M430.6,552.5l-2.6,1.6M430.5,548.2l-.2-.5M416.6,548.1l2.6-2.1 2-2.8-4-2.1-4.3,.8M421.2,543.2l2-.5M342.5,554.9l3.7,1.1 3.5-1.6 4-3.4 2.5,1.7 2.6-.2 4.2-1.7 2-4 .9,1 1.5,.1 4.9,2.7M349.7,554.4l.6,3.5 2.1,2.8 4.7-3.6 3,2.4-2.6,5.3-4.8-2.8-.3-1-3.4,.2-3.3-.1-.2,3.9 4.4,.6 2.8-3.6M342.6,555.2l1.3,3 1.8,2.9M352.4,560.7l0,.3M340.2,628.2l-2.5-2.3-1-3.2 4.5-3.1 3,.3 3-.1 1.1,5 3.4,4 1.7,4.7-3.7-3.6-5.7,1.5-3.8-3.2-4.9,2.4-4.4,3.2-1.7-3.6-3.6-1.7M308.3,608.1l4.9-.1 3.2,2 1.3-4.4 1.9-4.1 3.8-2.9-2-2.5 3.6-3.9 4.4-3.1 1.9-5.3-.4-3.6-1.7-3.3-4.4,4.4-5.4,3.1-4.2,4.4-1.3-.9-1.1-.2-6.2,.1-5.3,3.4-.4-5.5 1.6-3 1.8-2.9 3.1-.7 .4-1.1-1.8-3.6-3.7-1.8M330.9,633.8l0,.9M502.4,642.7l-2.3-7-6.4-4.2-2.7-6.7 4.3-9.3 8.6-6.1 4.8-8.9M491,624.8l-4-2.7-4.5-.7-4.7,.7M287.3,572.1l-.5,1.9-.7,.5-1.5-.6M287.3,572.1l3.7-3.3 .2,.1 1.9-1.7 2.7-.2 1.3,1.3 3.8,1.1M287.3,572.1l-3-2.4-1.7,.1-.8-.3-.6,.2M284.3,569.7l3.6-2.9-.4-.7-4.2-.5-1.5,3.9M291,568.8l-3.1-2M291.8,578.2l1.5,1.5 .1,0 2.2-.7 2.4-2.7 0,0 3.6-3.8M291.8,578.2l-1.1-2.1 1.4-5.2 4.2,2.7 1.7,2.7M291.8,578.2l-3.4,.7-3.5-.6M284.9,578.3l1.2-3.8M290.7,576.1l-3.9-2.1M292.1,570.9l-.9-2M374.4,440.7l5.2,2.9M374.4,440.7l-3,1.8-3.4,.4M374.4,440.7l-1.1-5M364.4,487.7l4,2.6M461.1,582.5l2.2,3.4 1.8,3.8 2.6,3.2M461.1,582.5l2.2-2.2 2.7-1.8 3.4,2.6 4.1-.4 3.1-4.8 4.4-2.6M461.1,582.5l-2.2-.3-4.6,4.8-4.3,5-6.4,2.6M458.9,582.2l-1.3-4.1-2.4-3.5-5.2-1.8M455.2,574.6l4.7-2.9 0-5.4-5.1-2.9-2.2,1.2-2.5,3-3.7-2.2-4.8,1.9M466,578.5l-.9-5.3 2.5-2.7 .6-.1 2.1-4.3 2.6-3.9M467.3,560.6l-1.9,.8-1.3,2.9 1.5,3.3 2,2.9M465.1,573.2l-5.2-1.5M324.6,553.9l3.1,5 1,4.1-1.1,4.1-5-2.8-4-4.1-.3-.3M327.7,558.9l3.5,.2 2.9,2.2M309.6,550.3l5.1-2.7M321,555.1l-.2-.1M357,537.9l-1.4-2.8-2.5-1.9 2.1-3.7 .4-.3-1-3.5 1.2-3.4M352.2,533.1l.9,.1M355.6,529.2l3-2.5 4,.4 2.9,1.2 2.5,3.6-2,3.5-1.8,3.6M362.6,527.1l-2.6-2.5-1.1-3.3M367.5,520.3l3.8-2.1 3.8-2.1 4.6,.7-4.1-2.9-2.2-4.6-5.4,.5-4,1.4-2.2,3.7-1,.1M367.5,520.3l-3.7-1.8-2-3.6M367.5,520.3l-.4,4.1-1.6,3.9M342.4,515.5l-.4-3.7M354,506.3l-.6,3.6M440.4,534.9l2,1.2 5.4-2.1M442.4,536.1l.4,5.2M404,527.1l.1,.7 .6,3.9-1.6,3.6-3.1-.9-3.2-.4-.8-2.1 .4-2.8-2.4-4.6-3.2,3.4 2.5,3.3-3.1,1.4-.6-4.1-5.2,.6-4.7-2.1-.7,1.4 4.2,2.3 4,2.4 2.9-.4 .1-.1M404,527.1l-3.8,.9-3.8,1.1M404,527.1l.2-2.8 1.7-2.4M404.2,524.3l-5-.2-5-1.1-1.3-2.7 2.4-3.9 4.6-.8 3.3-2.6 1.2,.3 2.6,2.2M394.2,523l-.2,1.5M412.8,531l-3.8-3.2-4.9,0M384.2,515.9l4.5-4 1.5-5.8 3,.7 3,.2 3.3,3.2 3.7,2.8M384.2,515.9l3.6,3.7 5.1,.7M384.2,515.9l-3.5,1.5-1-.6M380.7,517.4l.1,4.8-1.1,4.8M390.8,527.9l-1.2,.6M368,531.9l4.8-.8 4.8-.8 1.2,3.8 3.8,4.6 .2,0 .3,.2 2.3,2.7 2.6,1.3 .4-.1 2.7,1.6 .6,.8-.9,3.4-4.1-2.2 1.3-3.5M377.6,530.3l1.4-1.9M408.1,560.8l-2-.3-3,1.4-2,2.7-3.2-3.6-.7-.1-2.4,2.8-2.2,3.2 .1,.3 3.8-.9 3.7,1.4 .9-3.1M408.1,560.8l.1,3.6 1.1,3.4-2.3,2.9-3.6,.8-.1,0-2.9,1.9-3.3,1.3 .8,5.2 .5-.1 2.5,.6 3.5,3.4 1.7,4.6M408.1,560.8l4.5-3.7-1.2-4.2M412.6,557.1l3.1,1.3 3.3,.8M409.3,567.8l3.3,1.6M424.5,569.3l1-5.3-2.3-4.7M405.3,538.6l-2.2-3.3M297.3,598.2l5.8,.5 5.7,1.6 2.4-.3 3.5-3.1 4.1-2.1-.9-3.5-2.7-2.5M287.7,582.8l2.7-1.8 2.9-1.3M308.8,600.3l-.2,3.9-.3,3.9M311.2,600l1.1,3.9 .9,4.1M353.6,549.8l.1,1.2M357.1,557.1l-.9-4.4M360.1,559.5l1.7-.5 1.6,1.5 4.3,.4 .1,0-1.4-4.5 1.6-2.4 .1,0 4.2-2M361.8,559l.7-1.4 3.9-1.2M362.5,557.6l-.5-2.9 4.3-3.3-.4-3.6M362,554.7l-3.2-2.2M353.2,601.7l.5-3.5 1.2-3.4 3.5,1.8 5.5-.7 1.8-5.6 0-5.8M353.2,601.7l-2.9,1.4-3-2.2-3,2.8 4.5,2.5-.4,.6 .7,4.1 1.6,.3 1.9-2.4-3.5-2.8-.3,.2M353.2,601.7l2.3,5 4.9,2.3-3.9-.9-3.9,.7M350.3,603.1l-1.2,2.9M351.8,614.5l-4.9,1.6-.4-.5-.2-2.9-1.2-1.9-5.8,.3-3-3.6 5.1-2 4.2,2.9-.5,2.4M351.8,614.5l5.7,.7 5.3,2M351.8,614.5l-1.1-3.3M331.7,606.1l4.6,1.4M331.7,606.1l-1.6,3.2-1,3.4-.3,4.1 2.6,3.3-2.2,3.5-3.8,2-2.6-1.5M331.7,606.1l-1.8-4.4 1.7-3.4 3.6-1.4 1-3.6-.4-3.7-.9-3 5.3-1.8 5.3-1.7-3.7-5-5.8-2.2-3.4,.7-3.4,0-.5-.8-3.5,.1-3.3,.6-2.8-1.7-2.3,.4-1.7,2.7-4.7-2.2M329.9,601.7l-3-2-3.5-1.1M329.1,612.7l-3.9-.4-3.6,1.5-1.4,5.1-3.4,.4-3.4-.4M316.4,610l.1,.1-1.3,4.2-3.7,2.3M316.5,610.1l2.4,2 2.7,1.7M318.8,594.8l2.6,1.3M404.5,620.7l-11.9-7.3-12-6.9-12-6.9-.2,.1-4.5-3.8M368.6,599.6l2.5-3.9 3.5-3.1-1.9-2.5-.3-3.2-2.6-1.5 3-3.7 .8-4.6 2.8-2.4 3.6-.3 .2-1-1.3-1.5-1.4-.8-1.7-5.6 2.4-2.5 .6-.1 1.7,1.2 .3,.5-1.1,3.6-.8,3.7M396.6,604.9l-7.7-3.4-6-6.4-8.3-2.5M438.5,609.3l-3.7-8.8-1-9.8-4.2-8.7M429.7,579.6l4-1.7 2.6-3.5M468.8,605.9l.9-.5 2.3-4.9-2.3-4.2M468.8,605.9l-3.9-3.4-4.9-.6-4.9-.8M468.8,605.9l-2.4,3.1 .2,3.9 3.4-1.3 1.7-3.2 .2,0 1.9,4 3.1,3.1 3.2,3 1.6-4.2 3.7-2.5 2.5-3.5M469.7,605.4l2,3M472,600.5l1.8,2.9 3.1,1.2-2.6,1.8-2.4,2M293.4,549.6l-5.3,1.4M293.6,551l-3.1,3.9 .4,5 1.2,1.6 3.7,.5 1.7,2.6-1.7,2.4M290.9,559.9l-3.1,1.5-.3,4.7M287.8,561.4l-2.7-.7-3.3,1.8-2.7-.4-.9-1.9 3.8-3.1M285.1,560.7l-.7-2.9M293.1,567.2l-1-5.7M284.7,533.3l-2.4-2.1M287.7,533.4l-.3-1.9M374.5,502.6l2.9-1.2 2.6-1.8 .5-5.9 4.8-1.1 4.9,.8 .1-.2 4.7-1.3 2-3.1-.4-3.6M374.5,502.6l.2,3.5-1.3,3.2M374.5,502.6l-4-3.9M363.8,504.7l-4.3-.5-4.4,.6M363.8,504.7l2.6,2.1 1.6,3M363.8,504.7l1.9-4.5M390.2,506.1l-.7-2 1.3-4.7-.4-3-.2-3M389.5,504.1l-5.4-.8-4.1-3.7M459.9,566.3l4.2-2M457.6,556.4l-.2-1-6.2,1.1-5.5-2.9M457.6,556.4l3.8,2.6 4,2.4M457.6,556.4l-.1,4-2.7,3M476.6,575.9l-3.2-2.2-2.9-2.5M470.5,571.2l-2.3-.8M435.8,565l-1.1-4.9 .1-5.1M447.7,546.3l-.4,3.7-2,3.1M347.1,572.5l-.6-3.8-1.2-3.6-4.5,1.3-1-3.1M347.1,572.5l1.7,2.5 2.9,1.9-.6,3.4 1.1,3.2-.2,.1-3.3-.5-3.2,0M347.1,572.5l-4-.9-2.4-3.4-.2-1.3-5,.2-4.1,2.4-3,3.7-.1-.1M340.7,568.2l-1.6,5.6-3.1,2.1M348.8,575l-4.7-1.8-5,.6M327.6,567.1l.4,1M304.1,558.2l-5.6-.1M295.8,562l2.7-3.7M350.8,515l-3.3,1.8-2.4,2.9M354.5,522.1l-3.2,1.9 1.6,3 2.3,2.5M351.3,524l-4.9,0M409.5,478.2l-4.3,2.7-4.4,2.4M457.6,555l2.7-1.5 3.1-.6M457.6,555l-.3-4.5M457.6,555l-.2,.4M438.5,525.7l2.5,.5 .8,.7M441,526.2l1.3-4.5M436.9,522.2l5.4-.5M417.7,595.9l.7-4.5-5.1-2.6 .5-4.5-2.2-.3 .8-2.3 2-1.1M417.7,595.9l-1.6-5.6 2.4-5.3 1.1-1.1 .4-4-3-.8M418.5,585l-2.6-2.4-.6-2.1M413.8,584.3l2.1-1.7M419.6,583.9l3.9-.4 5,9.1 3.1,10.1 5.7,8.7M423.5,583.5l.4-1.4M420,579.9l1.1-.5M411.6,584l-3,1.5-2.4,2.4 .4-4.5-.3-1.2M415.7,579.9l-2.1-2.2-1.4-2.7M390.8,569.3l-3.2,.3-2.8,1.5-.7-4.6-3.3-1.9M390.8,569.3l.5,3.3 .3,3.3-.2,.5-2.6,1-1.8-3.2-3-2.2 .8-.9M390.8,569.3l1.9-2.1 0,0M392.7,567.2l3.1,3.2 1.2,4.2 .1,.1M397,574.6l-5.4,1.3M388.8,577.4l-1.1,3.3-2.1,2.9 3.3,4.6 4,4-.5-5.5 3.3-4.4 2.2-2.4M385.6,583.6l-4.1-1.6-4.4,2.7-4.7,2.2M384,572l-3.8,1.4M381.5,582l-1.6-3.7 .1-3.9M395.7,582.3l-1.8-3.3-2.5-2.6M378.8,534.1l-2,4.1-3.8,4.2M376.8,538.2l.7,4.7-3.2,.8-.6-.1M382.6,538.7l-1.7,3.6 2.4,3.4 .2,0 2.4,1.2-.5,3-2.7,.5-1.5-3 2.1-1.7M379.3,543.8l-.3,2.9-.2,.2-.9,.9 .6,5.4M379.3,543.8l1.6-1.5M379.3,543.8l-1.8-.9M379,546.7l2.2,.7M404.3,559.1l-2.4-.7-4,2.6M404.3,559.1l1.8,1.4M404.3,559.1l-2.3-5.2 1.7-5.3M412.6,541.5l-3.7,.7-3.3-2M336.7,622.7l-2.2-1.7 2.8-3.5 2.6-3.5 2.5,1.5 4.1,.1M334.5,621l-3.1-.9M325.4,625.6l.2,2.9M320.2,618.9l2.6,5.2M346.6,599.3l.7-1.7-3.5-3.9 .9-2.6 2.3-5 5-2.5M346.6,599.3l.7,1.6M346.6,599.3l-4.3,.3-2.7-2.6-4.4-.1M342.3,599.6l.2,4.4-1.1,1.5M342.5,604l1.8-.3M339.9,614l-.6-2.9M341.2,619.6l1.2-4.1M347.2,619.8l-.3-3.7M353,574.6l-1.3,2.3M353,574.6l-1.8-4.4-1.3-4.6M353,574.6l2.2-1.9 5.4,1.8 5.7-.8M355.2,572.7l1.3-2.5 3.5-1.5 3.9,.3 2.1,.6 1-3.5 3.3-.4 1.8,1.7 3.2-2 .5,.1M356.5,570.2l1-5.3 3.5,.3 2.4-1.1 3.6,1.8 .7-5M357.5,564.9l0-.1M345.3,565.1l.2-.1M361,565.2l2.9,3.8M363.4,560.5l0,3.6M354.9,594.8l-.4-.7 1.5-5-2.5-4.6 5.9,1.9 5.9-2.1M354.5,594.1l-3.6,1.9-3.6,1.6M339.6,597l4.2-3.3M335.8,589.6l4.6-.3 4.3,1.8M353.5,584.5l-1.3-1M373.6,577.1l-1.6-2.4 2.6-3.6 2.9,0M366.5,573.3l5.5,1.4M366,569.6l.8,2.2 5.4-1.9-.1-2.5M374.6,571.1l-2.4-1.2M362.2,605.4l-1.8,3.6M362.2,605.4l3.5-.9 1.8-3.1 .9-1.7M362.2,605.4l-.2-5.1-3.6-3.7M283.3,565.6l-1.5-3.1M282.6,569.8l2,4.1M279.1,562.1l-2.2,3.9M379.4,448.1l-.4-3M379.4,448.1l4.7,2.7 5.7,.4 4.5,3.1M379.4,448.1l-1,3.2-2.9,.1-2.5-3-3.7-1M378.4,451.3l.4,1.8-5.3,2.2-.4-2-4.3-2.4 0,0-3,3.3-6-.9-5.4-2.6 4.9,.6 4.8-.3 4.4-2.6 .6-1M378.8,453.1l1.2,2.2-1.1,3.1-2.6,2-3.3-2.6-.2-.6-2.9-1.6-1.1-4.7M380,455.3l5.4-.1 5,2.1M383.8,466l-.8,5-3.4,3.7 1.6,2.9 3.2,1.1M383.8,466l-4-1-3.3-2.6-2.4,2-4.8-3.6-.3-.6-1.1-.5-.4-2.3-1.8-1-9.4,2.3-8.4,4.4-7.9,5.4M376.5,462.4l-.2-2M374,464.5l.7,4.2-.7,4.2-1.3-.2-3.1-2.9-1.7-3.9-.2,0-4.4-.7-4.2,1.2-4.2,1.2 3.3-4.3 5-1.5 4.7-2.1M374,464.5l-2.8,1.6-3.3-.2M374,464.5l.1-.1M369.3,460.8l-1.6,5.1M369,460.2l4-2.4M373.5,455.3l-.7,1.9M376.3,475l3.3-.3M376.3,475l-2.3-2.1M376.3,475l-.9,4.4-3.4,3.1M372.7,472.7l-5.5-1-5.5,.1-5.2,2.2M445.9,554.4l3.3,2.7-.5,5.2 3.9,2.3M331.3,583.8l3.6,2.8M340.8,566.4l-.3,.5M335.5,567.1l-1-5.5M329.2,576.6l0,.3M328.7,575.8l-.3-2.6M315.8,580.4l-.7-2.5M315.8,580.4l4.4-2.9 5-1.6M315.8,580.4l-.4,3.9-1.5,3.6M297.5,564.6l3-1.1M296.3,573.6l.8-5.3M305.1,559.5l-1.9,4.9M366.3,551.4l1.7,2.6M374.3,543.7l4.5,3.2M400.3,467.3l-4.1,2.1-3,3.5-.3,2.7M411.3,479.7l.4,6-2.5,5.5 4.2,3 .8,.3 1.2,5.2 4.3,0 3.4,2.7 .4-.1M400.9,501.1l-.9-4.5-.4-.2-2.2-3.7 2.2-2.4 2.4-2.1 3.7,1.1 3.5,1.9 0,0M400.9,501.1l2.9,.3 .9-.9 4.5,.1-.6,3.9 3.3-.9 3.2,1.3 1,1.9M400.9,501.1l-2.8,2.6-1.9,3.3M403.8,501.4l3.3,4.1 1.5-1M407.1,505.5l-.8,4.1-1.9,3.7M404.7,500.5l.8-4.9 3.2-3.9 .5-.5M400,496.6l5-1.3 3.7-3.6M421.4,522.2l-3.1-3.4-2.6-3.6 3.9-4.4 5.7-1.2M415.7,515.2l-1.1-.6M434,520.1l-.1-1.5 3.8-4.3M429,512.8l1.5,3.7 3.4,2.1M457.4,545.6l-3.3-3.7M457.5,550l-.1-4.4M452.9,541.8l-1.1-3.6-1.3-3.6M400.2,567.7l3.1,3.8M403.4,571.5l.6,1.6-.3,1.6 .4,2M410.2,576.5l-2.8-2.2-3.4-1.2M412.4,581.7l-1.3-.8M408.6,581.6l-2,1.8M410.3,577.2l-.1-.5M400.5,556.7l-.7-3.5 1.7-2.5 1.9-2.4M400.5,556.7l-3.4,.8 .3-3.7-1.2-.2-.2-2.9M400.5,556.7l1.4,1.7M397.1,557.5l-1.1,1.3-1.8-.7-.7-.9 .1-2.9-.3-.3M396,558.8l1.2,2.1M390.7,564.2l-1.1-.8-2.5-.2-1.7-1.4 .3-3.9M390.7,564.2l2.1-2.8 1.4-3.3M390.7,564.2l1.9,2.7M389.6,563.4l-.1-3.2-2.5-2.6-1.1,.1M389.5,560.2l1.5-2.4-2.2-1.9 .1-1.9M393.5,557.2l-2.5,.6M397.4,553.8l2.4-.6M402.4,545l.2,.7M396.2,553.6l-2.6,.7M382.8,538.7l4.9-2.8 2.4,1-.4,1.5 .3,1.4 3.9,.7 .9-.3 3.5,1.2 1.9,3.2M387.7,535.9l-.5-2.8M394.7,535.9l.1,4.3M394.7,535.9l2.1-1.9M394.7,535.9l-3-.2-1.6,1.2M391.7,535.7l-1.6-3M393.3,531.2l2.7,.7M383.1,538.9l3.2-.7 3.4,.2M383.5,545.7l1.9-4.1M385.9,546.9l.8-.5M384.1,566.5l3-3.3M367,566.1l0-.2M370.3,565.7l1.1-1.7 1.9-.2 .3-2.7-3.2-1.1-.5,.4-2.1,.5M371.4,564l-1.5-3.6M382.5,559.9l1.6-2.4M382.5,559.9l2.1,1.9 .8,0M382.5,559.9l-2.5-.2-.1-.1 2.2-3.6M380,559.7l-1.2,3.2M384.6,561.8l-4.1,2.3M348.4,606.8l-2.8,1.6M349.1,610.9l-2.8,1.8M480.8,585.2l-4.5-1.5 .4,3.1 .5,3.1-1.2,2.1-3.6,2.1-4.2,.6M480.8,585.2l1.5-2.7 .5-3M482.4,586.6l2.5-5M496.9,598.9l-6.5-3.8-7.2-1.4-7.2-1.7M483,587.6l-3.3,.1-2.5,2.2M300.9,585.7l-2.8-3.3-2.5-3.4M293.4,579.7l-2,5.8 2.1,5.8M304.3,579.8l-3.1-1.9-3.2-1.6M312.8,587.7l-4-3.5-1.4-5.1M278.2,560.2l-1-.9M277.8,554.8l3.4-.9M375.5,451.4l-2.4,1.9M368.8,450.9l-.3-2.5M409.5,478.2l-5.3-2.4-5.3,1.7M404.2,475.8l-1.8-4.3-2.1-4.2M386.4,464.9l3.2,4.1 3.6,3.9M369.9,455.6l-2.4,1.8M365.8,454.2l-.1,2.2M380.5,493.7l-1.6-3.1 3.2-3.1 4.1-1.9 2.6,1.6 1.8,2.7-.3,3.3M374.2,488.1l4.7,2.5M446.4,565.4l-1.2-1.7M442.3,563l-2.2,2.9M322.6,569.8l-.1-.2-3.1-1-2.8-1.8-.3,1.9M322.5,569.6l-1.3-5-2.6-4.4M314.7,573l-2.1-.8M314.7,573l2.8-1.9 .1-.5M314.7,573l2.1,2.2M317.5,571.1l1.6,3.7M307.8,578l1.2-1.6M370.4,560l.9-3.1 2.9-.9 .1-.1M371.3,556.9l-3.2-2.9M362.9,540.7l1.4,2.9 .7,3.2M390.8,499.4l4.2-2.1 4.6-.9M386.2,485.6l-1-3.1-.9-3.2M387,557.6l1.8-1.7M391.7,545.2l3.3-.3 3.3,.3M390.8,548.6l.1,.3-3.2,2.8 0,.8M390.9,548.9l1.7,1M390,539.8l-1.6,3M393.9,540.5l-2.8,3.9M375.3,565.4l-2-1.6M378.2,563l-3.1-2.4 .3-2.6-1.2-2M373.6,561.1l1.5-.5M378.4,558.2l.4-4.9M378.4,558.2l1.5,1.4M378.4,558.2l-3-.2M307.5,572.9l1.7-4.3 2.2,1.3 1,1.4M309.2,568.6l-1.4-1.7M304.7,571.6l2.9-4.7M388.8,487.2l2.7-1.8 2.9-1.5M409.2,500.6l1.7-3.5 2.5-2.9M414.2,494.5l2.2-.7 2.9,4.9 5.1,2.6M416.4,493.8l3.9-2.2M403.7,574.7l-1.7,3.5-3.6,1.6M402.6,579.8l-1.7,.6M387.7,551.7l-2.3-1.8M385.6,554.1l-3.9,0M382.7,550.4l-1.7,2.9M316.5,561l-.6,.8 0,2-1.8,3.4-2.7,2.7M315.9,561.8l-5.1,1.7M316.6,566.8l-.7-3M367.4,547.9l5.8-1.4M377.9,547.8l-3.1,.4M375.5,551.6l2,1.7M397.4,492.7l-2.4-.8M402,488.2l-2.3-2.8M415.4,499.7l-.3,5.2M423.1,502.4l-3.9,3.6" stroke-width="3.25"/>
<path d="M201.7,678.6l-3.8-1.7-3.5-2.2-2.1-4 3.3-1.7 3-2.2 .7-4.3-1.8-4.5 2.4-4.1-1.3-1.5-3.2-1.2-2,.4-.5,.2-.1-.1-4.5,1.1-3.7,2.8-.6,2.3-.2-.1-3.5-3.2-4.6-1.5 .8-1.5 1-.7 3.1,.6 3.2-.2 .7-1.8-.5-.9 1.5-5 1.7,.7 1.3,2.9-.2,1.2-3.8,1.1M201.7,678.6l10.2-1.1 10.4,.8 10-3-7.9-3.7-7.4-5-8.6-2.1 2.3-5.6-1.4-5.9 4-1.1 2.2-3.3-4.6-.4-2.6-4.4-4.2-1.1 .8-2.7-.2-1.1 .8-1 1.2-3.5-1.1-5.6-3.3,0-3.2,2.6-.2,.4 2.6,4.9-2.3,2.2-2.5,2-.1-.1-4.9,3.3 0,.2-3.2,2.9M216.8,495.2l5.5-.2-1.3,4.4-2.3,4 2.1,2.6-2.7,2.2-3.3,1.2-4.7-.9-.9-3.9-2.7-3 3.7,.5 3.6-.6 4.9,1.9M216.8,495.2l-.7,3.6-2.3,2.7M149.1,662.7l1.8-3.5 .9-3.9 1.4-1.9 0-3.5-.6-3.5 .3-.3-1.8-6.5-4.2-5.5-1.7-6.6M162.2,672.3l-1-4.5-2.2-4.3 .1-4.8 5.1-3 5.9,.2M162.2,672.3l5.3,1.2 5.3,1.1M153.2,653.4l2.1,3.6 3.8,1.7M126.4,626.8l3.6-.1 3.5-.7M134.2,643.4l-.6-5.1 1-5 1.4-4.9M134.3,644.6l6.3-1 5.8,3.3 6.2-.5M139.2,599.1l-2.1-3.6-1.4-3.9-13.8-.9-13.4-2.5-13.5-2.3M139.2,599.1l5.9,0 5.9,.2 5.8-.9 3.2-2.3 4.4,1.5 3.8-.4 1.5-3 2.8-2 .4-5.6 4.5-3.7 1.4-5.2-9-1.9-7.4-5.7-8.5-3.1 1,9.9 1.6,9.8 3.5,9.4M139.2,599.1l-.1,1-3.4,4-1.1,5-.6,.6-1.8,5.2 3.5,5.4-2.3,5.2-4.1-3.5-4.2-3.4-2.8-3.9 .3-4.8-4.1-1-.4-.2-6.9-3.3-4.8-6-6.1-4.5M139.1,600.1l4.2,4.3 5.2,3.4 3.4,5.2-3.1,4.2-1.2,.7-2.4,4.2-1.6,4.5M156.8,598.4l.9,4.7-1.1,4.4-1.5,4.3 3,1.4 3.6-.3 2.6-2.4 3.9,3.9 .7-.2 4.3,3.7 0,2.1 5.2-.4-.6,4.2 3.5-1 .5,.6 5.8-.2 .1,.2 1,3.2 4.4-.6 3.5-4.3-2.5-3-.9-3.3 .2-.2 1.7-.6 2.5,0 4,3.6-.5,1.8-1.6,1.8 1,3.7 1.8,3.3M151.9,613l3.2-1.2M148.8,617.2l5.6,2.4 3.6,5-1.5,4.2M158.1,613.2l1.9,2.7 .9,3.1 5.5-.7 2.2,2.4-2,4.7-3-2.4-3.7-.4-1.9,2M160.9,619l-1,3.6M158,643l-1.9,2.6-3.2,.5M135.7,591.6l6.9-7.8 5.9-8.5 3.9-9.8M164.3,610.5l1-2.3 4.8-.6 4.5,1.7-2.7,2.7-3,2.2M165.3,608.2l.5-5.4-1.4-5.2M168.2,614.4l-1.8,3.9M192.3,670.7l-.3,.1 1.7-6.3 .8-6.3-1.6-6.4M179.4,679.6l3.7-2.5 2.9-3.7 4-2.1-3.4-3.8-2.2-4.4-.4-5.2M190,671.3l2-.5M200.8,585.1l-4.9-2.7-3.2-4.1-2.3-4.9-4.4,1.7-4.8,.9 2.9-6 .4-6.5 .6-6.4 1.5-.1 4-2.3-1.3-5.7 1-5.9 .4,.1 5.4,0 2.8,4-4,3.1-1.8,4 5.3,2 .1,5.4-2.5,4.8-1.7-4.5-4.4-2-3.3-3M200.8,585.1l-3.2,2.5-3.9,.8-5.1,.5-1.5-.9-4.6,2.6-1.4,5.1-4.2-2.2-4.4-1.3M200.8,585.1l5.5-.4-.3-4.4-.7-4.3 1.6-2.9 2.9-1.4 .9-3.9 .3-3.9-5.4-.9-.2-4.7-3.4-3.1-3.6,1.1M206.3,584.7l.3,.2 2.5,2.5 3.5,.3 3.4-1.3 1.8,.7 3.1,1.8 2.4,2.6 1.2,2.2-2.9,4.9-3.9-.5-3.3,2.4-2.4-2.3 .5-5.2 .1-5.3M206.6,584.9l-1.4,4.9-2.2,4.5-3.6,3.7 0,1 3.2,2.4 4,.1 3.1-1.1 2.3-2.2M193.7,588.4l1.5,5.6 4.2,4M188.6,588.9l1.9,4.7-.5,5-1.6,2-1.7,1.2-1.8,.3-4.1-3.1 .3-3.3M190,598.6l5.5,1.5-.9,5.7 4.2,.2 .2,.3-1.6,3-.3,.1-2,5.2M195.5,600.1l3.2-.7 .5,3.3-.4,3.3M198.7,599.4l.7-.4M210.1,550.1l-5-3.3 0-5.4 3.5-4.1 1.1-5.1 4.2-2.9M210.1,550.1l.4,1.4-1.7,3.4 1.9,2.7 2.5,2.3-1.4,3.5 4.4,4.4 6.1,1.3 2.5-.6 2.6,4.5-1.5,5.3-4.2,3.9-5,2.7-.7,1.5M210.1,550.1l4.8-3.5 1.5-5.6-.8-5.8 .5-5.7M214.9,546.6l2.2,4.6 3.1-2.2 3.8,0 2,3 3.4,.3 3.3-.9 .4,.5 4.3,3.7 5.6-.1 1.4-3.2 2.9-1.9-2.6-2.5-2.4-2.7-1.9-4.5 1.2-4.7 .4-5.7 1.6-5.4 1.8-5.4 2.1,5.6 2.8,5.2 3.1,5M210.5,551.5l2.6,1.9 3.2,.2 .5,3.4 3.4,1.3 3.6,.2 .3-3.5 1.9-3M216.3,553.6l.8-2.4M202.3,554.8l-.3,.4M202.3,554.8l3.2,.6 3.3-.5M202.3,554.8l.4-6-3.8-1.6M202.7,548.8l2.4-2M213.2,559.9l3.6-2.9M231.9,542.8l-4.5-2.2-3.7-3.2 2,5.7-1.7,5.9M231.9,542.8l1.9,2.8-1.1,5.8M231.9,542.8l5.8-2.1 3.9-4.7M233.8,545.6l4.3,.5 4.2-.9M223.7,537.4l-3.7-3.3-1.1-4.9M253.4,535.3l-3.6,4.4 1.6,6.3-3.5,4.3 4.6,3 5.4,.3 .4,.9-.7,5.7-3.1,1.5-3.3,1.5-4.3-2.2-4.8-.8-.6,1 2.4,3.6 0,4.4 2.6,1 1.5,3.1 0,2.5 3.6,1.6-.2,3.9-3.6-1.7-1.2-2-2.3,.7 .1,3.7 .2,.2 1.8,3.4 1-.3 1,.3 1.2,2.7-.7,2.2-.6,.5 1.6,2.6 .4,.1 2.8-1.2 1.2,.5-.8,2.1-1.7,.4-.4,.7 .1,1.1-1.5,1.7-1.5-2.9 .1,0 1.3-2.5M247.9,550.3l-.6,.1M325.6,628.5l-3.2,2.8-3.2,2.9-1.3-5-4.2-3 .5-.6 .3-3.4-1.1-3.3-1.9-2.3-4.2-.9-4.1,.9 .1-5.8 5-2.7M330.9,634.7l-2.4,6-2.2,6.1-3.8,5.3-3.6-4.1-.8-5-.3-5.2 1.4-3.6M118.5,608.9l-.8,4.9 2.5,4.3M122.4,620.1l2.7-1.5M147.6,617.9l-3.9-3.5-5.1-1.8-4-3.5M122.6,609.9l5.7,.7 5.7-.9M205.3,576l-4.5-3-3.6-3.9 4.5-2.7 3.9-3.4M190.4,573.4l2.9-2.6 3.5-1.8-.8-2.5M196.8,569l.4,.1M208.6,537.3l-4.6,.5-3.2,3.5-4.3,1.3 1.4-6.3 0-6.3-.5-6.4M196.5,542.6l-.4,.6M187.1,588l-1.6-4.3-5.3-1.4-1.1-4.6-.3,0M181.2,576l-2.1,1.7M168.6,620.7l4,.2 .6-.9M172.6,620.9l.9,2.9 4,.5 .3-.5M166.6,625.4l1.3,2.9 0,4.6-1.6,4.3M167.9,628.3l5-3 2.9,4.3 2.9-3.1-1.2-2.2M172.9,625.3l.6-1.5M208.4,664.5l-5,.7-4.8,1.6M209.3,653l-.8-.3-3.2-2.9-2.7-3.5-.3-1.8-3.8-.6-1.1,1.2-.6,3.2-1.4,2.9M199.9,653.9l4.2-1.4 4.4,.2M215.5,648.6l.5-.2-.8-3.4-1.1-3.2-.9-.8-1.7-4.4 .1-.9-1-.8-1.5-5.4 3.8,0 2.7,2.6-4,3.6M216,648.4l4.5,.7 4,2.3 4.6,.2 2.3-4.3-.7-4.7-1.5-3.9 .8-5.7 3-4.9 2.1-.9 1.3-3.6 5.2-1.6 4.4-3.4 0,0-4.4-3.3-4-3.6 3.3-3 4.2-.6 4.2-.6 4.6,3 2.6-.5-.4-3.2-.4-3.3-.9-1.9-4.9-1.2-2.7,1.3-1.1-5.1 .7-.4 1.7-.1M198.6,652.4l1.5-3.4 2.5-2.7M202.3,644.5l1.8-1.8M188.4,600.6l3.9,2.2 1.2,4.3-.2,.7 .2,.2 .9,3.6-1,3.6M194.6,605.8l-1.1,1.3M186.7,601.8l1.6,3.3 .7,3.5-.4,.6 0,1.3 2.8,1.7 1.2,3.1 .6,.1M189,608.6l4.3-.8M284.6,573.9l-4.7,1 .2,.9 2.6,2.3-2.5,3.3M281.2,569.7l-2.2,4.1-2.5-.2-1.5-.8-.8-5.7-4.6-1.6-3,1.1-2.1,2.3-2.9-.6-1.2-1.1-3.4,.8-3.3,1.3-.8,4 2.3,2.6 1.1,.3 2-1.7 2-2.9 1.3-3.3M284.9,578.3l-.2,.2-2-.4M209.8,571.7l4.3,.1 3.5,2.2-2.2,5.3 1.3,5.6M217.6,574l1.7-3 3-1.9M211,563.9l.8-.5M261.9,548.1l-1.5,3.1-2.5,2.4M216.9,529.4l-1-6.6 1-6.9-2.1-6.5M209.8,527.1l-.9-6.2 1.1-6.2 .1-6.2M247.6,645.8l2.1-.6 1,.9 3.9,1.3 3.9,1 .3-.3 4.3,2.3 4.9-1.5 4.4,1.6-4.5-2.5-2.3-4.6-4.5,.2-2.3,4.2 0,.3M247.6,645.8l-3,6.5-6.7,3.2-4.1,5.6M247.6,645.8l-1.5-5.1-4.1-3.5 1.5-2 .1-5.1-4.6-.3-3.9-2.6M242,637.2l-4.7-.1-2.9,3.6-3.7,1.9M284.7,578.5l.2,.8-2.9,4.7M284.9,579.3l2.8,3.5-1.7,4.6 3.8,1.7 3.7,2.2 3.7,4.5-.2,1.8-4.7-.2-4.2,2.1-2.5,3.4-3.3,2.7-1.8,3.9-.1,1.5 1,4.6 2.8,1.4 2.8,1.5 4.9-5.3 1.4-7.3 4.2-5.7-.2-2M322.8,624.1l-4.5-.2-4.1,1.7M185.1,557.1l-14.9-12.6-16.4-10.4-15.7-11.5M184.9,602.1l-3.5,2.5-1.2,4.1-1.9,1.5 .1,.4 .1,.3 3.7,1.3 3.8,1.1 .1,.3 3,.6 2.7,1.4 .8-.3M180.2,608.7l4.2,.5 4.2,0M174.6,609.3l1.3-.5-.8-3.9-1.8-3.5-2.5-2.2-2.6-2M175.9,608.8l2.4,1.4M173.2,617.9l1.8-4.2 3.4-3.1M180.8,599l-3.4,2.3-4.1,.1M183.8,657.8l-5.5,3.1-6.3-1.1M214.1,641.8l4.8-3.6 1.5-5.8-.6-1-4.2,.7M229.2,638.7l-4-3.6-4.8-2.7M204.9,640l4.3-.7 4,1.7M193.5,608l3.6,1.4M202.7,607.3l3-1.9 2.4,4.2 2.2,4.3-1.8,.8-3.2,.4-4-3.9-1,.2-2.7,3.2M202.7,607.3l-1.4,3.9M202.7,607.3l-3.7-1M197.4,609.3l2.9,2.1M205.3,615.1l-3.7,3.1M224.8,568.5l2.3-4.3 4-1 2.2,.3 1.3,4 1.9,3.8 5,.1 2.4-2.2M223.8,558.5l1.4,3 1.9,2.7M271.2,561.9l3-2.8M271.2,561.9l-1.6,3.1 0,.5M271.2,561.9l-1.4-2.7-1.3-2.8 1.4-.8M268.5,556.4l-3.9,.3-3.3-.7-3-1.5M264.6,556.7l1.9,4.5 3.1,3.8M241,577.2l3.3,1.1M241,577.2l.5-5.8M241,577.2l-1.4,1-.8,4.7 2.9,.5 2.8,4.1-.3,1 0,.1 3.6,2.5-.6,.9-.4,4.2M239.6,578.2l-3-1-2.9-1.1 .2,3.6-1.6,3.2 4,2.5 .4,2 .4,.5 .8,.4 3.1,.1 3.2,.1M233.1,575.1l-3-.8-2.7-1.3M233.1,575.1l.6,1M233.1,575.1l3.4-3.8M225.9,578.3l1.4,3.3 3.2,1.6-1.3,1.3 .4,4.9 2,1.2 5.1-3.2M232.3,582.9l-1.8,.3M219.8,631.4l.1-3.2-3.4-1.1-3.4-.9-1.1-4.3-4.5,2.1-1,4.4 1.7,.4 4.9-2.6M219.9,628.2l.9-4.6 2.3-4.1-.3-2.9-5.1-2.2-1.1-5.1-.2-5.1-2-3.7M233,628.1l-3.9-2.1-1.7-4.8-4.3-1.7M269.6,607l5.8,.9 5,3.1M269.6,607l-2.7-4.8 .6-3.2 1-3.1-2-.5 0,0-4.1,1.3-4.3-.2-2.7,2-1.9-3.4M269.6,607l-3.9,4.5-.3,5.9 4.1,3.6-.5,2.5-2.9,2.4-.8,1.5 0,5.4-2.3,2.6-1.1-.7-1.7,.5-1.3,2.6 .2,.2 3.6,.8 .7-.3 2.1,2.6 3.1-2.3-.2-2.5 2.2-2.8 3.3-1.3-3.8-3.5-1.1-5.2M265.4,617.4l-3.6-1.8-3.5,2.8-4.2,2.2-1.7,4.7 3.1,1 5.4,1.2 5.2-1.6M261.8,615.6l-2.8-2-1.3-3.1-1.2-.5M266.9,602.2l-3.1,2.7-1.7,4.3-4.4,1.3M254.2,640.1l-.2,1 1.4,.9 1.1,3.3 2.3,2.5M254.2,640.1l-2.7-4.4-3.8,.7-4.2-1.2M254.2,640.1l2.9-2.4 1.8,.1M257.1,637.7l-.9-2.4 .5-1.1-1.5-2.4-2.3-1.3-1.6-4.9 1.1-.3M251.5,635.7l.6-.9 .8-4.3M252.1,634.8l4.1,.5M254,641.1l-3.1,2.2-1.2,1.9M247.7,636.4l.9,3.8 2.3,3.1M255.3,659.9l.8-6 2.4-5.5M255.3,659.9l-3.5-4-1.3-4.7 .2-5.1M317.8,637.8l-5-2.4-5.3-1.6 1.1-5.4-5.2-3.4-2.7-5.6 2.5-2.8M307.5,633.8l-6.9,2.8-5.3,4.7-4.7,5.7M308.6,628.4l5.1-2.2M194.9,550.3l-2.5-3.3-1.7-3.8M193.1,554.3l-2.5,.4M178.4,619.6l.9-.6 1.7,1.5 3.8-.5 2.1,1.2 1.3-3.2-2.2-2.3 .1-2.1M179.3,619l.6-3.9 3.7,1.8 2.4-1.2M179.9,615.1l-1.4-4.2M188.6,610.5l-2.6,2.8M204.7,638.9l-3.2-2.2M198.5,643.9l-1.8-3M172.8,644.8l-.1-1.6 3.1,2.5 3.8-.2 .4-.1 .4-4.1-5.3-.8-4.4-3.1M172.8,644.8l-3.5,3.3-.5,4.7M172.8,644.8l1.5,3.6 2.2,3.2M172.7,643.2l-2.1-2.3-1-3.1M179.6,645.5l-2.1,5.4M205.5,637.9l2.9-1.1 3.1-.2M276.9,566l-2.7,1.1M276.9,566l4.3,3.7M231.1,563.2l1-5.6 1-5.7M233.3,563.5l3.9-1.8 4.3-.5M243,555.5l-.9,4.7M257.6,560.2l2.5,3.1 .3,3.9M251.2,563.2l-1.2,5.1-3.5,1.9M253.7,569.3l-3.7-1M251.3,625.6l-2.8-.9-2.5-2.5 0-3.6M243.6,630.1l2-3.1 2.9-2.3M230.4,611.9l-4.1-3.9-2.3-5.1 .5-1.9 1.8-1.3 3.2,.5 2.7,1.6 1.8,2.5-.2,6 1.8,.3 2.6-3.5 3.6-2.2 3.9-1.8-2.5-1.8-2.1-2.2 3.7-2.8 1.3,.3M230.4,611.9l-4.3,1.5-3.3,3.2M230.4,611.9l1.7-.6 1.7-1M232.1,611.3l3.1,3.5-.5,4.8 1.7,4M253.9,610.5l-2.5,5.5-5.4,2.6M236.3,585.4l2.5-2.5M224,602.9l-3.8,.8-3.8,.5M206.6,601.5l-.9,3.9M255.4,592.3l-.3-2.6 1.9-1.3 4.4,1.6 .4,.8 1.7,3 3,1.6M255.4,592.3l-.2,.3-.9,.4M255.4,592.3l3.4,0 3-1.5M255.2,592.6l2.9,3.9M266.5,595.4l-3.1,3.4-3.8,2.3-3.9,2.4M259.1,631.3l.1-.1-1.7-2.6-2-2.3M259.1,631.3l-3.9,.5M259.1,631.3l-.4,2.1 1.5,1.8M258.7,633.4l-2,.8M262.1,630.3l3.2-2.9M262.1,630.3l-.2,4.4M262.1,630.3l-2.9,.9M269.5,621l3.2-3.4 3.9-2 4.8,0M272.2,594.3l1.7,5.7 4.1,4.3 2.5,5.2M276.7,592.3l4.5,1.2 3,3.7 3.9,2.3M196.6,640.8l-2-2.3-.5-3.7 4.8-3M194.6,638.5l-4.4,2.7-1.3-1.1-.5,0-2.3-2.5 .4-6M191.7,644.1l-1.5-2.3-3,2.5M190.2,641.2l0,.6M206.7,634.4l3.9,.5M205.6,628.8l.9-.4M209.1,629.5l-.9-.7M178.7,626.5l.7,.2 1.8-.5 3.6,.7 2.4,2.6M181.5,633.3l0-3.6-2.1-3M181,620.5l.3,2.3M183.6,616.9l1.2,3.1M181.2,626.2l.6-2.8M193.1,626l2,3.8 4,1.6M187,631.2l3.7,2.6-2,2.8 .2,3.5M190.7,633.8l3.4,1M196.6,621.7l2.9,.1M297,597.6l.3,.6M248,573.3l4.9,0M241.7,583.4l2.7-1.4M248,575.8l-1.4,1.8M235.6,610.6l2,1.1M245.7,603.1l.6,0 .9-1.4M249.3,607.5l-3-4.4M224.5,601l-2.9-2.4M229.2,584.5l-5.8,.8-5.6,1.8M216.7,614.6l-3.7,2.8-1,4.5M216.7,614.6l-3.2-1-3.2,.3M207.5,624l-.7-1.6-3.1-.7-2.6-1.7M208.5,614.7l-1.7,3.7 0,4M255,585.5l1.7-3.3-1.5-1.6-3.4,1.2-.1,0-.2-.1-3.6,1-.5,2.6M255,585.5l-1.3,.2-1.9-3.9M255,585.5l1.2,.6 4.9-1.5 .3,5.4M256.2,586.1l.8,2.3M253.7,585.7l-.6,.9-3.8-1.3-.9,.3M253.1,586.6l-.1,.3-3.4,1.4M253.4,588.5l-1.7,2.1 1.4,1.9M253.4,588.5l1.7,1.2M253.4,588.5l-.4-1.6M256.7,582.2l2.7,.4 .1-2.5 2.7-1.8 3.8,.8 .4,2.6 2.1,3.3 3.6,1.6 2.1-4.1 .2-2.4-1.8-2.7-2.2-2.5-2.8-.3-2-2.6-1.1-3.1M259.4,582.6l1.8,1.8 5.2-2.7M261.1,584.6l.1-.2M255.4,598.5l-.2,.4-3.7-1.6M255.2,598.9l-.4,2.7M290.8,622.7l5.5,.1 4.4-3.4M297.5,600.2l2.9,3 1.4,3.8 1.5,3.8M289.1,642l-5.4-2.7-5.2-3.1-4.6-4M188.4,640.1l-2.7,1.5-.7,1.2 .5,.8M185.7,641.6l-1.2-2.7-2.5,0-.3,1.3-1.3,1.1M186.1,637.6l-1.6,1.3M180.2,634.1l1.8,4.8M184.8,642.8l.2,0M184.8,642.8l-4.4,2.6 3.6,3.2M184.8,642.8l-3.1-2.6M180.4,645.4l-.4,0M186.9,621.2l.7,2M188.2,618l3.6-2.4M187.7,623.4l3.5-1.9 2.9-2.8M273.6,592.7l.4-3.4-1.9-2.7M279.5,581.1l-.7-3.2 1.3-2.1M279.5,581.1l-5.3,1.4M251.6,577.4l3.6-1.5M255.2,580.6l1.1-4.2 0-.2M259.5,580.1l-3.2-3.7M249.3,585.3l2.4-3.5M229.6,589.4l-3.3,.6-3,1.5M231.6,590.6l0,2 2.4,1.9 1.8-.1 .5-3.3 .8-3.2M231.6,592.6l-2.8,2.4 3,4.1 .4,2.7M228.8,595l-2.9-.2 .4,4.9M225.9,594.8l-1.4-1.1M238.9,598.9l2.2,.2M238.9,598.9l-2.5,2.6-2.4,2.8M238.9,598.9l-.3-2.3 .6-.9 4.4-1.8 .1,.1 1.1,2.3M238.6,596.6l-2.8-2.2M231.8,599.1l2.2-4.6M265.3,632.8l2.1,3.3 1,.2M267.4,636.1l-3.4,1-.6,1.4M263,635.4l1,1.7M259.1,638l.3,3.6-4,.4M259.4,641.6l1.5,1.3 .2,.7M262.7,638.8l-1.8,4.1M197.4,645.1l-4.7,.1-1-.9M192.7,645.2l0,3.2 .7,3.2M275,579.4l-.6,.7M275,579.4l1.5-5.8M275,579.4l3.8-1.5M279,573.8l.9,1.1M270.4,574.9l4.6-2.1M267.6,574.6l-1.6,4.5M258.3,574.5l3.9,3.8M251.4,581.3l.1,.4M247.8,579.6l-.5,2.2-2.7,.4M247.9,582.7l-.6-.9M237.9,588.3l2,4 3-.1 1.3-3.6M239.2,595.7l.7-3.4M251.7,590.6l-2.8-.1M244.5,587.5l1.9-1.9M265.5,641.1l.1,2.3M268.6,638.8l5.7,7.6 7,6.4 6.8,6.5M192.8,651.7l-4.5-3.3M184.6,655.6l-.8-4.3M243.6,593.9l-.7-1.7M248.3,591l-.5,.1M249.9,600.4l.1-1.4M243.7,594l3.5-2M248.6,596.1l2.8,.1M250.3,593.7l1.5,1.8" stroke-width="3.5"/>
<path d="M22.4,683.9l1.1-3.4 4.8-.2 1.3,.8 1.1,1.4 2.7,.4 4-2.2-3.5-3.2-4.3,3.6M22.4,683.9l.3,3.6 2.1,1.4 4.6-.8 1.3-5.6M46.2,584l2.2,.5 2.2-1.6 .5-2.6 2.9,2 .1,0 2.4-2.1 .5-3.2 .9,4.3-1.7,2.7-.9-.3-1.2-1.4M46.2,584l1.8,5.6 .3,.1 .4,.9 0,.1-2,3.3 3.9,3 .2-3.5 1.7-1.4 2.4,1.3 .1-.1 5.8,.8 5.6-1.2-4.8-2.2-4.9-2-.3-1.1 .6-2.6-.8-1M54.3,599.9l-.5-1.8 5.8,.4 4.9-2.9 5.2-2M54.3,599.9l5.4,2.8 2.3,5.6-5.8-1.3-5.6-1.7-2,3.3 1.6,5.6 4.6,3.6M54.3,599.9l-4.1,4.3-4-3.2 4.5-3.9-.1-.1M50.2,604.2l.4,1.1M51.7,634.6l3.1,3.2 1,4.5 2.7,3.5 3,.2 2.3,2.1 2.2,2 2.9-2.7 5.2,1.3 1.3-.5 2.4-4.6-.3-2.1-.1,0-3.3-4.2-4.1-3.3-1.1,.1-1,.5-1.1,.9 .2,5.1 2.5,4.4-.6,2.4M58.5,645.8l-1.3,1.1-1.2,3.9 4.2,3.1 5.3-.5 .5-3.3M57.2,646.9l-5.4-2.8-6,1.1-5.6-1.3M61.5,646l1.6-4.8 .2-5.1M48.7,655.7l1.6,5.2-4.1,3.2-5.2-.1-3.7-2-4.3-.2 1.7,4.3 1,4.6-5.5,2.1-.3,0-11.2-11.1-11.7-10.6-9.8-12.5 11.1,9 12.9,6.2 11.8,8M48.7,655.7l2.6-3.9 4.7-1M105.1,737.2l3.2,.4 2.9,1.2 .3,.4-1.1,3.4 .7,3.5 3.9,2.3 4.2,1.7 3-3.6 4.5-1.2 1.5-4.4 2.7-3.8-6.2,2.8-6.8-2-6.4,1.3M105.1,737.2l-2.3,2.7-3.6,.2-1.2,3.6-.8,3.7 3.1,1.5 3.2,1.1 5.7-1.1 1.3-1.7 .6-1.1M105.1,737.2l-4.2-4.1-1.5-5.7-.4-4 0-.5-.1-3.3-1.6-2.8-.1-.1-11.3,3.6-8.9,8.1-10.7,4.7 7.3,1.3 7-1.2 7.1-1.6 4.3-2 3.5-3.1 3.5-3.1M99.4,727.4l-3.9,1.9-1.8,4-2.7-2-3.3,.3M99.2,740.1l-4.8-1.6-5.4,.3-4.3,3.2 3.1,2.7 3.8,1.7 3.3,2.4-.6,2.3-4.4,3.2-4.4,3.4-18.8-1.7-18.9-1.2-18.6-2.9M93.7,733.3l.7,5.2M54,674.8l4.1-.6 3.7-2.1 1.5-3.9 1.1-3.9 5,2.1 5.1,2 .2,.5 5-2.2 4.8-2.7-1.2-2-2.8-.5-3.3,.5-2.4,2.3-.3,4.1M61.8,672.1l4.6,1.5 4.8,.8 1.2-2.9 2.4-2.1-.1-.5M71.2,674.4l1.1,3.1-1.2,3.1 3.2,4.6 3.2,.4 4.2-.8 3.4-2.2 2.9-2.9 3.8,3.4 3.9-1.1 4.5-.4 4.4,.9 2.8,1.6 2.2,2.3 1.2,1.8 2.1,1.7 4.3-2.9-1.5-3.9 1.5-3.9 2.3-2.4 2.6-1.9-2.9-1.5-3,3.3-2.9-2.3 0-.2-2.2-2.5 2.5-2.8 1.9,3 .3-.1 1.6-2.7 0-1.3-.5-.9-2-.1-1.3,1.9 0,.2M53.4,683.2l6.1,.4 5.8-1.6 5.8-1.4M50.7,597.1l2.8,.7 1.4-4.4M53.5,597.8l.3,.3M64.4,664.3l-2.4-4.9 3.7-4.4 3.7,1.8 3.9,1.2-.4,3.4 1.9,2.9M62,659.4l-5.9-.8-5.2,2.9-.6-.6M50.9,661.5l.7,5.3 .8,5.2-3.9-1.1-3.8,1.5-3.5,2.8-.8,4.6-1.5-2.7-2.6-1.7-2.1,.6-.3,1.5M59.5,635.1l.7-3.6 1.5-3.4 2.5-.6 .8,4.1 2.9,3M61.7,628.1l-2.8-4.1 3,.8 5.7-1.9 .6-.5 1.7,5.8-1,5.9M103.9,776.2l3.5-4.2 4.4,.2 1.4,2.6 5.1-1.7 .9-3.3 4.2-2.4 5.2,1.8-.4-5.7 1.1-5.6-3.4-1.7-.8,.1-3,2.9-3.1,2.9 1.6,3.2 2.8,2.1M103.9,776.2l-3.1-3.2-.3-4.4 4.9,.4 2,3M100.5,768.6l-3.1-1.6-1.3-2.1-.3,0-4.6,1.8-2.7,4.3 4,3.9 4.2,3.7-1.6-5.9 2.3-5.7M94.9,748.8l2.3-1.4M67,695.4l6.2-.5 5.9,1.1 5.5,3.1-2.5,4.3-4.3,2.5 2.2,4.4 4.5,2 4.9-.9 4.8-.8-1-3.7-1.5-3.2-2.4-2.6-2.4-1.8-2.2-.2-3.8-3.8-1.9-4.7-1.5-5M67,695.4l3.1-2.9 1.3-4.2 2.9-3.1M84.6,699.1l.1,0M51.1,585.4l.8-.6 0-.9 2.1-1.6M51.1,585.4l.6,2.2 .6,.2 .8,1.7 2.1,.3 1.5-1.1M51.1,585.4l-2.1-.4-.6-.5M49,585l.7,3.2-1.4,1.5M51.7,587.6l-2,.6M52.3,587.8l1.2-1.2 2.9,1M53.5,586.6l0-1.2 1.8-1.7M53.5,585.4l-1.6-.6M44.7,672.4l-4.7-2.8-2.3,2-.2,0-1.8-.9M40,669.6l1-5.6M49.5,707.3l-6.2-7.6-2.9-9.7-7-7.1M49.3,707.8l-5.2-8-7.4-5.8-7.3-5.9M40.5,680.2l-3.1,.5M61.9,624.8l2.3,2.5 3.4-4.4M64.2,627.5l0-.2M75,608.1l2.6-2.2 3.3-.6 1-4.2 2.4-3.4 2.8-3.1M75,608.1l-2.7,4.6-3.7,4.1-.4,5.6M127.4,779.8l-.3-4.9 2.7-4.2 3.3-1.9 3.7,.4 1.3-3.7-.4-3.9-2-2.4-1.2-2.9-.5-.1-.7-6.8 0-6.7-.2-6.8-2.2,1.2M127.4,779.8l-4.4-3.5-4.7-3.2M105.4,769l2.2-3.9-.2-1.9-1.5-1.7-5.4,.5-4.4,2.9M107.6,765.1l2.4,2.3 2.8,1.7 1.1-1 5.3,1.7M112.8,769.1l-1,3.1M115.7,762.3l.5-.6 2.8,.4M115.7,762.3l-4.2-.1-4.1,1M115.7,762.3l.1,3.2-1.9,2.6M101,755.1l2.5-5.1M101,755.1l.1,.3 4,1 3.2-2.9 .9-4.1 0-.5M101,755.1l-4.5-1-2.2-3M96.5,754.1l.4,5-2.1,4.6-5.3-2-4-4M101.1,755.4l.5,3.3-1.1,3.3M94.8,763.7l1,1.2M105.1,756.4l1.2,4.2 4.5-3.9 4.5,2.9 1.5-3.9 3.5-2.3 4.8,2.9M110.8,756.7l.7-4-2.3-3.3M116.2,761.7l-.9-2.1M129.8,770.7l-1.2-1.5M50.6,582.9l1.3,1M50.8,593.5l-2.1-2.8M52.5,592.1l-.3-1.5 .9-1.1M52.2,590.6l-3.5,0M55,593.3l.2-3.5M36.3,675.4l1.2-3.8M41.2,675.2l-3.5-3.6M34.2,676l-4-3.2M29.9,672.8l-1.8,3.5 .2,4M83.5,620.3l-.8-5 .3-5.2-2.1-4.8M69.5,645l3.8-2.2 4.1-1.3M51.5,738.2l5.6,.1 4-4.2 5.2-1M111.2,738.8l.2-6 1.5-5.8 2.6-2.5 1.9-3-2-2.8-3.3-.9-4.8-2.3-5,1.3-5,0M112.9,727l-4.5-1.9-4.5-1.6-4.9-.6M46.5,738.9l11.5-10.5 13.8-7.2 12.7-8.9M46.4,723.1l9.8-7 10.7-5.4 10.9-4.8M65.7,655l-.2-1.6M133.8,735.2l10.1-4.5 11.2-.1 10.3-3.7M133.8,735.2l-.7,.7M133.8,735.2l-5.2-4.1-4.8-4.4-3.5-5.7-.1-4.5 5-2.4 .1-4.4-4.9-2.1-4.4-3.1-3.5,4.1 .6,4.6-1,4.6M120.3,721l-2.9,.5M134.5,756.3l18.7-6 19.1-4.7 18.5-6.8M134,756.2l-4.7,1.7M89.2,623.6l3.6,4.6 3.6,4.7-1.1,2.4 2.9,1.6 3.3,.9 .6-.2 1.2,1.4 .6,4.8-.1,.1-1.7,.2 0,3.8-2.7,2.8 5.5-.2 1.3-1.2-2.4-5.4M89.2,623.6l4.3,2.3 4.8-.4 3.4-3.1 3.2,3.4 3.5-2.5 2.6,1.8 .3,.7-.5,4-3.3-.1-2.6-2.2 0-1.7M98.3,625.5l.3,.8 5.1,2.6 1.2-1.4M96.4,632.9l.6-.3 5.4,2 .1,2.2-.4,.8M98.6,626.3l-.5,4.9 5.2-1.2 .4-1.1M98.1,631.2l-1.1,1.4M149.1,662.7l.9,4.3 1.7,4.1 .4,4.4-1.8,1.6-.5-.1-4.8-2.8-2.3-5.1 .2-5.7 .2-.3-1.9-4.6-4.6-1.8-4.3-2.4-.9,2.3 .2,4.5 .4,4.5-.1,.5-.3,.5-3.9,.5-4-.3-1.7,1.6-4.6-.6M149.1,662.7l-3-.3-3,.7M151.8,655.3l-5.5,.9-5.1,2.3M162.2,672.3l-4.7,2.6-5.4,.6M151.5,683.4l-2.5,4.9-2.7,4.8-.5,5.6-4.3-3.5-1.1-5-.6-5.3-3.7-4.1 .1-.6 4.2-2.7 5.1,1.5 4.3-2M151.5,683.4l9.4,5.6 8.9,6.3 9,6.4M151.5,683.4l-.2-3.2-1-3.1M132.3,654.3l.8-3.6-.8-3.5-4.8,1.7-4.8-1.8-2.2-4.3-2.5-4 3.9-3.7-.7-3.3 1.6-3.6 3.6-1.4M134.3,644.6l-.1-1.2M134.3,644.6l-2,2.6M116.8,647.3l-2.9,3.9 1.1,5.8-2.2,1.4-2.7-1.9-.3-4.9 4.1-.4M116.8,647.3l5,.1-3,4.3-1.4,5-2.4,.3M116.8,647.3l-4.3-2.5-2,2.6-2.7,1.9-1.6,0M112.5,644.8l-.7-1.9-3.4-.4-3.3,.8-1.2,.5M121.8,647.4l.9-.3M118,638.8l-3.7-.9-.9-3.2 1.4-3.1-3.8-1.5-.2-.3M114.3,637.9l-2.1,1.6-3.3-1.8-1.3,.8-4.3,.5M111.8,642.9l.4-3.4M121.9,635.1l5.1,1.3 3.8,3.1 3.4,3.9M107.8,649.3l2,2.3M131.4,656.6l-5.1,1.3-5.2,1.5-.3,1.3-4.2,2.2-4.2-2.4 .4-2.1M121.1,659.4l-3.7-2.7M145.8,698.7l2.8,4.2-.5,5.2 1.9,4.4-7.2,.1-6.5-3.2-6.9-1.1-.5-4.1 1.8-5.1 1.2-5.3-2.4-2.7-1.5,3.6-3.4,2 2.1,3.8 2.2,3.7M125.3,709.7l4.1-1.4M116,704.5l-1.9-4-4.4,1-3.8,2.3-2.5,4.1-3,3.9-3.5,2.4-2.7-3.6M113.7,694l-.7-2-.1-2.1M113.7,694l-.6,3.3 1,3.2M113.7,694l5.5,1.2 5.4,1.5M74.8,669.4l4.3,2 5.1,.3 3.5,3.8 2.3-3.9 5.2,.9 5,1.5 .1,.3 0,.3 2.4,2 1.6,2.6 2.2-5.1 4.2,2.9 2.6-2.6M87.7,675.5l.3,4.2M90.6,669.5l-2.4-4 1.5-3.2-.5-3.6-3.3-1.3-1.8,1.1-.8,3.5M90.6,669.5l2.5-3.5 4.2-.9 .1-3.6-3.4-1.3-1.9-3.2-2.9,1.7M90.6,669.5l-.6,2.1M97.3,665.1l4.7,2.2 2.8-.1 2.4,2.9 .1,0 3.8,1.6M102,667.3l-.8,3.4-1,3.3M116.8,755.7l-4.3-3.4-2-5.1M101.6,699.9l-5.4,2.1-3,4.9M101.6,699.9l.7,0 3.6,3.9M101.6,699.9l-1.6-4-1.9-1.2-3.6,4.2-5.2,2.2M100,695.9l4.8,.7 4.1-1.6 3.7-2.8 .4-.2M102.3,699.9l3-3.1 4.1-1.7 3.2-2.9M100.4,711.8l3.8-2 4.6,1 3.7-2.2M96.9,714.2l.3,2.5M114.8,631.6l1.9-.9 .3-3.2 1.5-1.3 5.6-.8 2.3,1.4M121.2,631.8l-4.5-1.1M101.7,622.4l1.9-5.8-1.8-5.9 .7-5.7 1.6,3.8 2.1,3.7 1.7,3.8-.9,3.6 1.4,3.4M103.3,630l.8,2.4 3.7,1.4 3.2-3.7M102.4,634.6l1.7-2.2M78.2,651.9l3.2,1.8 1.2-.7 2.8,2.4 .5,2M78.2,651.9l.3-2.2 .2-.2 3.6,.5 .6,1.9 3.1-.8 .9,2.6-1.5,1.7M78.2,651.9l-2.8,2-1.3,3.5-.8,.6M75.4,653.9l-1.3-5.2M75.4,648.2l3.1,1.5M83.1,647l.1,.6 4.8,1.5 .6-.2 .5,.6 .9,3.5 2.4,2.5 2.8-2.7-2.2-3-3.9-.3M83.1,647l1.5-3.4 4.4,3.7-.4,1.6M83.1,647l-3.3-.8-1.1,3.3M79.8,646.2l-2-2.6M84.6,643.6l-.2-3.3 4.8-2.6 2.7,1 .6,1 4.3,2.1 1.5,.2 2.1,1.6-3.2,4.6-.6-.5 .2-5.9M84.4,640.3l-3.7-.6-2.4-5.3 .2-5.7M80.7,639.7l-3.2,1.8M82.3,650l.9-2.4M83.1,621.9l3.8,4.6-1.4,6.6 3.7,4.6M135.5,679.6l.7,.6M135.5,679.6l-2.5-2.9-1.5-3.4 1.1-3.3-1-3.4M135.5,679.6l-4,3.1-5.5-1.8-4,3-2.6,2.5-2.2,.6M122,683.9l1.1-4.4 1.2-4.4-.5-.2-1.7,0M131.5,673.3l-3.3,2.2-3.9-.4M132,665.6l5.5-.8 5.4-1.4M131.9,666.1l5.4,1.4 5.4,1.6M111.4,662.2l1,2.2-1.6,3.6-3.5,2.1M111.4,662.2l1-1.7M111.4,662.2l-4.7,1.7-1.9,3.3M106.7,663.9l-1.5-3.1-1.5-3.1-2.7,.2-1.7-2.9-1.2-3.2 .5-.8 .8-.3M110.1,656.5l-5.2,.2 .8-3.1-.8-3.1M104.9,656.7l-1.2,1M101,657.9l-3.6,3.6M121.1,664l2.6,2.8M121.1,664l-.3-3.3M121.1,664l-3.7,1.8-.5,1.1M117.4,665.8l-.8-2.9M141.5,695.2l-4.6-2-5,.6M136.1,680.8l-2.2,3.4-4,2.1-.5,4.5-5.3-1.4-4.7-3M129.4,690.8l.1,.3M63.8,584.7l-2.4-2.7-3.5-.7M63.8,584.7l-3.3,1.1-3.5-.8M120.3,753.4l-1.1-3.3M126.7,745.3l-.9,5.4 .1,5.5M98.5,690.7l4.2-.3 3.6-3.3 4.5,1.1M98.5,690.7l-2.1-4-4.3-1.6-.3-2M98.5,690.7l-.4,4M92.1,685.1l-.6,5.2-4.1,3.8-.5,5.2M117,627.5l-1.5-2.3-4.2,.6M115.5,625.2l.1-.7-1.2-3.3-.7,0-2.7,3.9M118.5,626.2l.1-3.2 .5-.6 3.2,.9 1.8,2.1M115.6,624.5l3-1.5M120.2,618.1l2.2,2M120.2,618.1l-1.6,3.4 .5,.9M118.1,608.7l-.7,6-1.7,5.8-1.3,.7M115.7,620.5l2.9,1M122.4,620.1l-.1,3.2M107.8,633.8l.2,2.1 .9,1.8M102.5,636.8l5.5-.9M105.1,643.3l2.5-4.8M96.6,647.7l-2.7-.8-.9,2.9M93.9,646.9l-2.1-2.4-2.8,2.8M91.8,644.5l.7-4.8M95.3,635.3l-3.4,3.4M81.4,653.7l-1.6,3 .9,.9 3.4,.9M79.8,656.7l-5.7,.7M82.9,651.9l-.3,1.1M100.3,674.3l3-.7 3.1,.1 .1,.4M107.2,670.1l-.8,3.6M110.7,677l-1.8,4.5 .7,4.9M117.2,679.2l-1-2.5M107.9,616.3l2.4,3 3.4,1.9M98.3,642l3.2-4.2M88.2,665.5l-3.7-1.5M80.7,657.6l-.2,3.9M86,651.1l2-2M95.7,682l2.4-3.6 2.2-3.8M104.6,682.5l-.3-3.3M121.8,669.5l.2-1.1M121.8,669.5l2,5.4M121.8,669.5l-2.2,1.6-2.2-2M119.6,671.1l-.4,2.3-3.4-1.6M119.2,673.4l0,0M113.3,674.2l2.2-2.3M112.4,664.4l2.5,2.4M100.4,643.6l1.7,.5M97.2,648.2l1.4,2.8M98.1,651.8l-2.9,1M90,653l-3.1,.7M92.4,655.5l-.3,1.5M110.8,668l2.8,.7" stroke-width="3.75"/>
</g>
</svg>
<div class="ctrl" style="left:844px;top:10px">
<div class="b"><svg width="29" height="29" viewBox="0 0 29 29"><path d="M14.5 8.5c-.75 0-1.5.75-1.5 1.5v3h-3c-.75 0-1.5.75-1.5 1.500S9.250 16 10 16h3v3c0 .75.75 1.500 1.500 1.500S16 19.750 16 19v-3h3c.75 0 1.500-.75 1.500-1.500S19.750 13 19 13h-3v-3c0-.75-.75-1.500-1.500-1.500z" fill="#333"/></svg></div>
<div class="b"><svg width="29" height="29" viewBox="0 0 29 29"><path d="M10 13c-.75 0-1.500.75-1.500 1.500S9.250 16 10 16h9c.75 0 1.500-.75 1.500-1.500S19.750 13 19 13h-9z" fill="#333"/></svg></div>
<div class="b"><svg width="29" height="29" viewBox="0 0 29 29"><path d="M10.500 14l4-8 4 8h-8z" fill="#333"/><path d="M10.500 16l4 8 4-8h-8z" fill="#ccc"/></svg></div>
</div>
<div class="ctrl" style="left:844px;top:107px">
<div class="b"><svg width="29" height="29" viewBox="0 0 29 29"><path d="M24 16v5.500c0 1.750-.75 2.500-2.500 2.500H16v-1l3-1.500-4-5.500 1-1 5.500 4 1.500-3h1zM6 16l1.500 3 5.500-4 1 1-4 5.500 3 1.500v1H7.500C5.750 24 5 23.250 5 21.500V16h1zm7-11v1l-3 1.500 4 5.500-1 1-5.500-4L6 13H5V7.500C5 5.750 5.750 5 7.500 5H13zm11 2.500c0-1.750-.75-2.500-2.500-2.500H16v1l3 1.500-4 5.500 1 1 5.500-4 1.500 3h1V7.500z" fill="#333"/></svg></div>
</div>
<div id="scale">300 km</div>
<div style="position:absolute;left:849px;top:721px;width:24px;height:24px;border-radius:12px;background:#fff"><svg width="24" height="24" viewBox="0 0 24 24"><circle cx="12" cy="12" r="7.1" fill="#000"/><circle cx="12" cy="8.4" r="1.2" fill="#fff"/><rect x="11" y="10.7" width="2" height="6" rx=".6" fill="#fff"/></svg></div>

</div>
<div id="edge"></div><div id="corner"></div><div id="edge1"></div><div id="edge2"></div>
</body></html>
